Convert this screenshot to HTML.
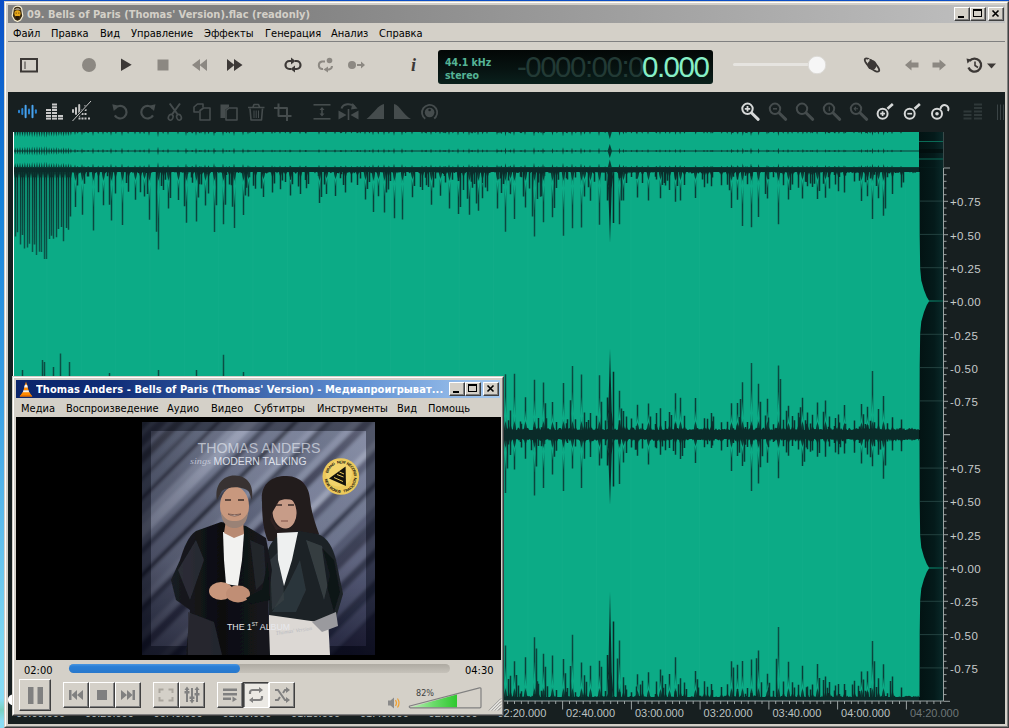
<!DOCTYPE html>
<html lang="ru">
<head>
<meta charset="utf-8">
<title>09. Bells of Paris (Thomas' Version).flac (readonly)</title>
<style>
html,body{margin:0;padding:0;}
body{width:1009px;height:728px;overflow:hidden;position:relative;background:#d4d0c8;
 font-family:"DejaVu Sans Condensed","Liberation Sans",sans-serif;font-size:11px;color:#000;}
.abs,.abs *{position:absolute;}
div,span,svg{position:absolute;box-sizing:border-box;}
.t{white-space:pre;line-height:13px;height:13px;}
#desk{left:0;top:0;width:1009px;height:728px;background:linear-gradient(#0b4ec6 0,#1480d8 26%,#3aa0e4 55%,#7ed6f2 88%,#8adcf4 96%,#7ad0c0 97.5%,#8adcf4 99%);}
#win{left:4px;top:1px;width:1005px;height:727px;background:#d4d0c8;}
#win .b1{left:0;top:0;right:0;bottom:0;border:1px solid;border-color:#d4d0c8 #404040 #404040 #d4d0c8;}
#win .b2{left:1px;top:1px;right:1px;bottom:1px;border:1px solid;border-color:#fff #808080 #808080 #fff;}
#title{left:8px;top:5px;width:997px;height:18px;background:linear-gradient(90deg,#808080 0,#808080 25%,#c0c0c0 100%);}
#title .t{left:19px;top:3px;font-weight:bold;color:#d4d0c8;}
.wbtn{width:16px;height:14px;background:#d4d0c8;border:1px solid;border-color:#fff #404040 #404040 #fff;box-shadow:inset -1px -1px 0 #808080;}
.menu .t{top:0;}
#menu{left:8px;top:23px;width:997px;height:18px;}
#menuline{left:8px;top:41px;width:997px;height:1px;background:#808080;}
#dark{left:8px;top:92px;width:997px;height:632px;background:#171f20;}
.ax{font-family:"Liberation Sans",sans-serif;font-size:11.5px;letter-spacing:.4px;color:#c6caca;}
.rl{font-family:"Liberation Sans",sans-serif;font-size:11px;color:#bcc2c2;}
.rl.dim{color:#6d7677;}
.vb{background:#d4d0c8;border:1px solid;border-color:#fff #404040 #404040 #fff;box-shadow:inset -1px -1px 0 #808080;}
.vb.on{border-color:#404040 #fff #fff #404040;box-shadow:inset 1px 1px 0 #808080;background:#ebe9e4;}
</style>
</head>
<body>
<div id="desk"></div>
<div id="win"><div class="b1"></div><div class="b2"></div></div>
<div id="title"><span class="t">09. Bells of Paris (Thomas' Version).flac (readonly)</span>
<svg style="left:0;top:0" width="20" height="18" viewBox="0 0 20 18">
 <path d="M9.5 1.2 C6.5 1.2 5 3.5 5 6 L4.2 11 L6.5 15 L9.5 16.6 L12.5 15 L14.8 11 L14 6 C14 3.5 12.5 1.2 9.5 1.2Z" fill="#3a2a10" stroke="#f4ecd0" stroke-width="1.2"/>
 <path d="M6.2 5.2 C6.6 2.8 12.4 2.8 12.8 5.2 L11.5 4.6 L7.5 4.6Z" fill="#efe6d6"/>
 <ellipse cx="9.5" cy="8.6" rx="3.1" ry="3.3" fill="#e8a818"/>
 <path d="M7.6 11 L11.4 11 L10.6 14.4 L9.5 15 L8.4 14.4Z" fill="#2a1a08"/>
 <rect x="7.6" y="7.6" width="1.2" height="1" fill="#5a3a08"/><rect x="10.2" y="7.6" width="1.2" height="1" fill="#5a3a08"/>
</svg>
</div>
<div class="wbtn" style="left:954px;top:7px"><svg width="14" height="12" style="left:0;top:0"><rect x="3" y="8" width="6" height="2" fill="#000"/></svg></div>
<div class="wbtn" style="left:970px;top:7px"><svg width="14" height="12" style="left:0;top:0"><rect x="2.5" y="1.5" width="8" height="7" fill="none" stroke="#000"/><rect x="2" y="1" width="9" height="2" fill="#000"/></svg></div>
<div class="wbtn" style="left:988px;top:7px"><svg width="14" height="12" style="left:0;top:0"><path d="M3.5 2.5 L9.5 8.5 M9.5 2.5 L3.5 8.5" stroke="#000" stroke-width="1.6" fill="none"/></svg></div>

<div id="menu" class="menu">
<span class="t" style="left:5px;top:4px">Файл</span>
<span class="t" style="left:43px;top:4px">Правка</span>
<span class="t" style="left:92px;top:4px">Вид</span>
<span class="t" style="left:123px;top:4px">Управление</span>
<span class="t" style="left:196px;top:4px">Эффекты</span>
<span class="t" style="left:257px;top:4px">Генерация</span>
<span class="t" style="left:323px;top:4px">Анализ</span>
<span class="t" style="left:371px;top:4px">Справка</span>
</div>
<div id="menuline"></div>

<!-- main toolbar icons -->
<svg id="tb1" style="left:0;top:42px" width="1009" height="50" viewBox="0 42 1009 50">
 <rect x="21" y="59" width="16" height="12.5" fill="none" stroke="#3c3836" stroke-width="2"/>
 <rect x="24.5" y="61.5" width="1" height="7.5" fill="#3c3836"/>
 <circle cx="89" cy="65" r="7" fill="#8c8882"/>
 <path d="M121 58.5 L131.7 64.7 L121 70.9Z" fill="#3c3836"/>
 <rect x="157.5" y="59.5" width="11" height="11" fill="#8c8882"/>
 <path d="M207 59 L207 71 L199.5 65Z M200 59 L200 71 L192 65Z" fill="#8c8882"/>
 <path d="M227 59 L227 71 L234.5 65Z M234 59 L234 71 L242.5 65Z" fill="#3c3836"/>
 <!-- loop -->
 <g fill="none" stroke="#3c3836" stroke-width="2.2">
  <path d="M292 61 L289.5 61 A4 4 0 0 0 289.5 69 L291 69"/>
  <path d="M294 69 L296.5 69 A4 4 0 0 0 296.5 61 L295 61"/>
 </g>
 <path d="M291 57.5 L295.5 61 L291 64.5Z" fill="#3c3836"/>
 <path d="M295 65.5 L290.5 69 L295 72.5Z" fill="#3c3836"/>
 <!-- loop dot gray -->
 <g fill="none" stroke="#8c8882" stroke-width="2">
  <path d="M325 61.5 L322 61.5 A3.8 3.8 0 0 0 322 69 L323 69"/>
  <path d="M327 69.5 L329 69.5 A3.8 3.8 0 0 0 332 66"/>
 </g>
 <path d="M328 66.5 L323.5 69.5 L328 72.5Z" fill="#8c8882"/>
 <circle cx="329.5" cy="60.5" r="2.8" fill="#8c8882"/>
 <!-- dot arrow -->
 <circle cx="352" cy="65" r="4" fill="#8c8882"/>
 <path d="M357 64 L361 64 L361 61.5 L365 65 L361 68.5 L361 66 L357 66Z" fill="#8c8882"/>
 <!-- slider -->
 <rect x="733" y="63" width="78" height="3" rx="1.5" fill="#e6e4e0"/>
 <circle cx="817" cy="65" r="8.8" fill="#f6f6f6" stroke="#dcdad6" stroke-width="1"/>
 <!-- planet -->
 <g transform="translate(872 65)">
  <circle cx="0" cy="0" r="4.700" fill="#3c3836"/>
  <ellipse cx="0" cy="0" rx="9.300" ry="3.200" transform="rotate(42)" fill="none" stroke="#3c3836" stroke-width="1.800"/>
  <path d="M-5.5 -3.5 A6.5 6.5 0 0 1 3 -6" stroke="#d4d0c8" stroke-width="1" fill="none"/>
 </g>
 <path d="M905 65 L911.5 59.5 L911.5 62.5 L918.5 62.5 L918.5 67.5 L911.5 67.5 L911.5 70.5Z" fill="#8c8882"/>
 <path d="M946 65 L939.5 59.5 L939.5 62.5 L932.5 62.5 L932.5 67.5 L939.5 67.5 L939.5 70.5Z" fill="#8c8882"/>
 <!-- history -->
 <g fill="none" stroke="#3c3836" stroke-width="2.4">
  <path d="M969.5 61 A6.5 6.5 0 1 1 968.5 67.5"/>
  <path d="M975 61.5 L975 65.5 L978 67.5" stroke-width="1.6"/>
 </g>
 <path d="M966.5 58.5 L971.5 59.5 L967.5 63.5Z" fill="#3c3836"/>
 <path d="M987 63.5 L996 63.5 L991.5 68.5Z" fill="#3c3836"/>
</svg>
<span class="t" style="left:411px;top:55px;font-family:'Liberation Serif','DejaVu Serif',serif;font-style:italic;font-weight:bold;font-size:18px;line-height:20px;height:20px;color:#3c3836">i</span>

<!-- time display -->
<div id="disp" style="left:438px;top:50px;width:275px;height:34px;border-radius:3px;background:linear-gradient(#030706,#071412 60%,#0a201c);"></div>
<span class="t" style="left:445px;top:55.5px;font-weight:bold;font-size:10.5px;line-height:12px;height:12px;color:#55b496">44.1 kHz</span>
<span class="t" style="left:445px;top:68.5px;font-weight:bold;font-size:10.5px;line-height:12px;height:12px;color:#55b496">stereo</span>
<span class="t" id="dimd" style="right:366px;top:50px;font-family:'Liberation Sans',sans-serif;font-size:29.5px;line-height:34px;height:34px;color:#223a35;letter-spacing:-1.5px">-0000:00:0</span>
<span class="t" id="brd" style="left:642px;top:50px;font-family:'Liberation Sans',sans-serif;font-size:29.5px;line-height:34px;height:34px;color:#86efc6;letter-spacing:-1.5px">0.000</span>

<div id="dark"></div>
<!-- secondary toolbar -->
<svg id="tb2" style="left:0;top:92px" width="1009" height="40" viewBox="0 92 1009 40">
 <!-- waveform icon blue -->
 <g fill="#2b86d6">
  <rect x="18" y="109.800" width="2" height="3.400" rx="1"/>
  <rect x="21.300" y="108" width="2" height="7" rx="1"/>
  <rect x="24.600" y="104.700" width="2" height="13.600" rx="1" fill="#4aa4ee"/>
  <rect x="28" y="108.600" width="2" height="5.800" rx="1"/>
  <rect x="31.500" y="104.700" width="2" height="13.600" rx="1" fill="#4aa4ee"/>
  <rect x="34.900" y="109.200" width="2" height="4.600" rx="1"/>
 </g>
 <!-- bars icon -->
 <g fill="#c9c9c9">
  <rect x="46" y="109" width="5" height="2"/><rect x="46" y="112" width="5" height="2"/><rect x="46" y="115" width="5" height="2"/><rect x="46" y="117.6" width="5" height="2"/>
  <rect x="52" y="103.5" width="5" height="2"/><rect x="52" y="106.3" width="5" height="2"/><rect x="52" y="109" width="5" height="2"/><rect x="52" y="112" width="5" height="2"/><rect x="52" y="115" width="5" height="2"/><rect x="52" y="117.6" width="5" height="2"/>
  <rect x="58" y="115" width="5" height="2"/><rect x="58" y="117.6" width="5" height="2"/>
 </g>
 <!-- spectral off icon -->
 <g fill="#c4c4c4">
  <rect x="72" y="109" width="2" height="4" rx="1"/><rect x="75" y="107" width="2" height="8" rx="1"/><rect x="78.2" y="104" width="2" height="13" rx="1"/>
  <rect x="81.5" y="109" width="2" height="2"/><rect x="84.5" y="109" width="2" height="2"/>
  <rect x="81.5" y="113" width="2" height="2"/><rect x="84.5" y="113" width="2" height="2"/>
  <rect x="78.5" y="117.5" width="2" height="2"/><rect x="81.5" y="117.5" width="2" height="2"/><rect x="84.5" y="117.5" width="2" height="2"/><rect x="88" y="117.5" width="2" height="2"/>
  <rect x="84.5" y="105" width="2" height="2"/>
 </g>
 <path d="M72.5 121.5 L91 101.5" stroke="#171f20" stroke-width="2.6"/>
 <path d="M72.5 121 L91 101" stroke="#c4c4c4" stroke-width="1"/>
 <!-- dim edit icons -->
 <g fill="none" stroke="#454c4d" stroke-width="2" stroke-linejoin="round">
  <path d="M114.8 109 A6.3 6.3 0 1 1 114.8 115.4" stroke-width="2.2"/>
  <path d="M153 109 A6.3 6.3 0 1 0 153 115.4" stroke-width="2.2"/>
  <!-- scissors -->
  <ellipse cx="170.700" cy="117.300" rx="2.300" ry="2.900" stroke-width="1.600" transform="rotate(20 170.700 117.300)"/><ellipse cx="179" cy="117.300" rx="2.300" ry="2.900" stroke-width="1.600" transform="rotate(-20 179 117.300)"/>
  <path d="M172 114.500 L180 103.500 M177.700 114.500 L169.700 103.500" stroke-width="2"/>
  <!-- copy -->
  <path d="M199 112 L194 112 L194 107 L197.5 104 L203 104 L203 107.5" stroke-width="1.6"/>
  <path d="M200 120 L200 110.5 L203.5 108 L210 108 L210 120Z" stroke-width="1.6"/>
  <!-- paste -->
  <path d="M226 120 L226 110.5 L229 108 L237 108 L237 120Z" stroke-width="1.6"/>
  <!-- trash -->
  <path d="M250 108.5 L251 120 L261.5 120 L262.5 108.5" stroke-width="1.6"/>
  <path d="M248 107.5 L264.5 107.5 M253 107 L254 104.5 L258.5 104.5 L259.5 107" stroke-width="1.6"/>
  <path d="M254 110.5 L254 118 M256.2 110.5 L256.2 118 M258.5 110.5 L258.5 118" stroke-width="1"/>
  <!-- crop -->
  <path d="M278.5 103.5 L278.5 116 L291.5 116 M274 108 L287 108 L287 121" stroke-width="2"/>
 </g>
 <path d="M112.3 104.3 L118.8 105.8 L113.8 111Z M155.5 104.3 L149 105.8 L154 111Z" fill="#454c4d"/>
 <path d="M220.500 104.500 L229 104.500 L229 107 L225 110 L225 118 L220.500 118Z" fill="#454c4d"/>
 <!-- group 2 -->
 <g fill="#454c4d">
  <rect x="313.500" y="104" width="17" height="1.600"/><rect x="313.500" y="118" width="17" height="1.600"/>
  <path d="M322 107 L324.500 110 L322.800 110 L322.800 113.500 L324.500 113.500 L322 116.500 L319.500 113.500 L321.200 113.500 L321.200 110 L319.500 110Z"/>
  <path d="M338.500 110.500 L346.500 115 L338.500 119.500Z M358.500 110.500 L350.500 115 L358.500 119.500Z"/>
  <rect x="347.700" y="109" width="1.600" height="11"/>
  <path d="M366.500 119 L384 119 L384 104 C378 105 374 113 366.500 119Z"/>
  <path d="M411 119 L394 119 L394 104 C400 105 403 115 411 119Z"/>
 </g>
 <path d="M341.500 108.500 C343 103.500 351 103 354.500 106.500" stroke="#454c4d" stroke-width="2" fill="none"/>
 <path d="M352.500 103 L357.500 108.500 L351 109.500Z" fill="#454c4d"/>
 <circle cx="429.600" cy="112.500" r="7.600" fill="none" stroke="#454c4d" stroke-width="1.800" stroke-dasharray="38 10" transform="rotate(125 429.600 112.500)"/>
 <circle cx="429.600" cy="112.500" r="4.800" fill="#454c4d"/>
 <circle cx="429.600" cy="110" r="1.300" fill="#171f20"/>
 <!-- zoom icons -->
 <g fill="none" stroke-linecap="round">
  <g stroke="#d6d8d8">
   <circle cx="747.500" cy="108.800" r="5.200" stroke-width="2"/><path d="M751.700 113 L758.200 119.300" stroke-width="3"/>
   <path d="M744.800 108.800 L750.200 108.800 M747.500 106.100 L747.500 111.500" stroke-width="1.800" stroke-linecap="butt"/>
  </g>
  <g stroke="#454c4d">
   <circle cx="775" cy="108.800" r="5.200" stroke-width="2"/><path d="M779.200 113 L785.700 119.300" stroke-width="3"/>
   <path d="M773 108.800 L777 108.800" stroke-width="1.500" stroke-linecap="butt"/>
   <circle cx="802" cy="108.800" r="5.200" stroke-width="2"/><path d="M806.200 113 L812.700 119.300" stroke-width="3"/>
   <circle cx="829" cy="108.800" r="5.200" stroke-width="2"/><path d="M833.200 113 L839.700 119.300" stroke-width="3"/>
   <path d="M829.300 106.500 L829.300 111.200" stroke-width="1.200" stroke-linecap="butt"/>
   <circle cx="856" cy="108.800" r="5.200" stroke-width="2"/><path d="M860.200 113 L866.700 119.300" stroke-width="3"/>
   <path d="M858 108.800 L854.500 108.800 M856 107 L854.200 108.800 L856 110.600" stroke-width="1.100" stroke-linecap="butt"/>
  </g>
  <g stroke="#d6d8d8">
   <circle cx="882.600" cy="113.700" r="5" stroke-width="2"/><path d="M887.500 108.800 L892.800 104" stroke-width="2.600" stroke-linecap="butt"/>
   <path d="M880.200 113.700 L885 113.700 M882.600 111.300 L882.600 116.100" stroke-width="1.700" stroke-linecap="butt"/>
   <circle cx="909.700" cy="113.700" r="5" stroke-width="2"/><path d="M914.600 108.800 L919.900 104" stroke-width="2.600" stroke-linecap="butt"/>
   <path d="M907.300 113.700 L912.100 113.700" stroke-width="1.700" stroke-linecap="butt"/>
   <circle cx="937" cy="113.700" r="5" stroke-width="2"/>
   <path d="M940.500 109 A4 4 0 1 1 948 111" stroke-width="2" stroke-linecap="butt"/>
  </g>
 </g>
 <circle cx="937" cy="113.700" r="1.800" fill="#d6d8d8"/>
 <!-- levels dim -->
 <g fill="#2f3839">
  <rect x="963.500" y="110.500" width="8" height="2"/><rect x="963.500" y="114" width="8" height="2"/><rect x="963.500" y="117.500" width="8" height="2"/>
  <rect x="974" y="103.500" width="8" height="2"/><rect x="974" y="107" width="8" height="2"/><rect x="974" y="110.500" width="8" height="2"/><rect x="974" y="114" width="8" height="2"/><rect x="974" y="117.500" width="8" height="2"/>
 </g>
 <g fill="#3a4345"><rect x="997" y="104.500" width="1" height="15.500"/><rect x="1000" y="104.500" width="1" height="15.500"/><rect x="1003" y="104.500" width="1" height="15.500"/></g>
</svg>
<svg id="wave" style="left:0;top:128px" width="1009" height="600" viewBox="0 128 1009 600">
<defs><linearGradient id="tailg" x1="0" x2="1" y1="0" y2="0"><stop offset="0" stop-color="#031313"/><stop offset="0.6" stop-color="#041a1a"/><stop offset="1" stop-color="#0a2a2a"/></linearGradient></defs>
<rect x="919" y="132" width="25" height="36" fill="url(#tailg)"/>
<rect x="14" y="132" width="905" height="35.5" fill="#0cab86"/>
<rect x="14" y="167.5" width="930" height="533.5" fill="#0a2b29"/>
<rect x="919" y="167.5" width="25" height="533.5" fill="url(#tailg)"/>
<path d="M14 172L919.5 172.0L919.7 236.5L920.2 268.8L921.3 280.4L924 290.0L926.8 297.1L928.8 300.2L944 300.5L944 301.5L928.8 301.8L926.8 304.9L924 312.0L921.3 321.6L920.2 333.2L919.7 365.5L919.5 430.0L14 430Z" fill="#0cab86"/>
<path d="M14 439L919.5 439.0L919.7 503.5L920.2 535.8L921.3 547.4L924 557.0L926.8 564.1L928.8 567.2L944 567.5L944 568.5L928.8 568.8L926.8 571.9L924 579.0L921.3 588.6L920.2 600.2L919.7 632.5L919.5 697.0L14 697Z" fill="#0cab86"/>
<rect x="929" y="300" width="15" height="2" fill="#06201f" opacity="0.45"/><rect x="929" y="567" width="15" height="2" fill="#06201f" opacity="0.45"/>
<path d="M47.0 168V701M81.3 168V701M115.7 168V701M150.0 168V701M184.3 168V701M218.7 168V701M253.0 168V701M287.4 168V701M321.8 168V701M356.1 168V701M390.5 168V701M424.8 168V701M459.2 168V701M493.5 168V701M527.9 168V701M562.2 168V701M596.6 168V701M630.9 168V701M665.3 168V701M699.6 168V701M734.0 168V701M768.3 168V701M802.7 168V701M837.0 168V701M871.4 168V701M905.7 168V701" stroke="#3fc0a0" stroke-width="1" opacity="0.09"/>
<path d="M920 201.1H944M920 234.4H944M920 267.7H944M920 334.3H944M920 367.6H944M920 400.9H944M920 468.1H944M920 501.4H944M920 534.7H944M920 601.3H944M920 634.6H944M920 667.9H944" stroke="#2a4a48" stroke-width="1" opacity="0.8"/>
<path d="M14 167.5L14 172.1L15 171.5L16 173.6L17 172.9L18 173.6L19 171.5L20 171.7L21 171.5L22 172.8L23 171.7L24 171.5L25 171.9L26 173.3L27 173.0L28 171.6L29 171.5L30 173.4L31 172.2L32 172.6L33 171.5L34 171.5L35 172.5L36 171.9L37 171.5L38 173.4L39 172.4L40 172.9L41 171.5L42 173.1L43 171.5L44 173.1L45 172.0L46 171.8L47 172.2L48 173.4L49 171.7L50 171.5L51 172.1L52 171.6L53 171.5L54 171.6L55 171.5L56 171.6L57 171.7L58 171.7L59 172.8L60 171.7L61 172.1L62 171.6L63 171.8L64 171.5L65 171.6L66 171.5L67 172.7L68 172.2L69 171.6L70 172.0L71 173.4L72 171.5L73 173.0L74 171.9L75 172.0L76 173.0L77 171.8L78 172.1L79 172.5L80 173.6L81 171.8L82 173.0L83 172.6L84 172.4L85 171.9L86 171.8L87 171.5L88 171.5L89 171.5L90 172.7L91 171.6L92 171.6L93 171.5L94 173.1L95 173.2L96 172.5L97 171.7L98 171.6L99 171.7L100 172.0L101 171.6L102 171.9L103 171.7L104 173.5L105 173.6L106 172.2L107 171.6L108 173.6L109 171.7L110 171.8L111 171.5L112 171.8L113 172.0L114 172.1L115 171.6L116 172.1L117 171.5L118 171.7L119 171.5L120 171.9L121 171.5L122 171.5L123 171.7L124 171.6L125 172.3L126 172.1L127 172.7L128 172.5L129 172.6L130 173.2L131 171.8L132 171.7L133 173.6L134 171.5L135 172.7L136 172.4L137 171.5L138 173.0L139 173.3L140 172.4L141 172.7L142 173.0L143 171.5L144 172.1L145 172.1L146 173.0L147 172.9L148 173.0L149 172.3L150 173.3L151 172.5L152 172.6L153 171.6L154 171.5L155 171.5L156 171.8L157 171.5L158 173.0L159 172.2L160 172.4L161 172.4L162 172.5L163 172.0L164 171.5L165 172.9L166 172.7L167 172.1L168 172.1L169 172.5L170 171.5L171 172.7L172 171.6L173 171.5L174 171.7L175 172.7L176 171.6L177 172.7L178 173.6L179 172.0L180 171.8L181 172.0L182 172.5L183 172.8L184 172.3L185 172.4L186 171.5L187 171.5L188 171.6L189 172.7L190 171.7L191 172.2L192 171.5L193 171.5L194 171.7L195 172.5L196 172.6L197 172.5L198 171.7L199 172.1L200 172.0L201 172.0L202 171.5L203 173.3L204 171.6L205 173.6L206 173.4L207 171.5L208 172.0L209 173.0L210 173.6L211 171.9L212 171.7L213 171.6L214 173.5L215 171.6L216 172.2L217 171.5L218 172.1L219 173.5L220 171.5L221 173.0L222 172.1L223 173.2L224 172.6L225 171.6L226 173.3L227 172.0L228 171.5L229 171.5L230 172.0L231 171.9L232 171.7L233 171.5L234 171.8L235 171.7L236 173.1L237 171.5L238 172.7L239 173.0L240 171.5L241 173.4L242 172.6L243 173.3L244 171.7L245 171.8L246 171.8L247 173.7L248 172.3L249 171.8L250 171.9L251 171.7L252 171.5L253 171.5L254 173.0L255 171.7L256 173.4L257 171.6L258 171.7L259 172.1L260 171.6L261 171.8L262 173.5L263 173.2L264 173.0L265 172.4L266 173.3L267 173.4L268 172.2L269 172.6L270 171.5L271 172.7L272 171.9L273 172.7L274 172.4L275 171.7L276 171.5L277 173.4L278 171.5L279 172.0L280 171.8L281 171.7L282 172.7L283 173.6L284 171.6L285 172.4L286 171.7L287 172.2L288 171.8L289 171.6L290 171.6L291 171.6L292 173.3L293 172.0L294 171.6L295 173.3L296 173.7L297 171.9L298 171.5L299 171.6L300 171.5L301 171.8L302 171.5L303 171.6L304 171.6L305 172.2L306 173.2L307 172.7L308 171.9L309 171.9L310 172.1L311 171.8L312 171.8L313 171.5L314 171.7L315 173.6L316 171.5L317 172.1L318 172.4L319 173.1L320 171.6L321 171.7L322 171.6L323 171.9L324 171.9L325 173.5L326 173.1L327 173.2L328 171.5L329 171.5L330 172.6L331 173.3L332 172.0L333 172.3L334 171.5L335 171.8L336 173.4L337 173.0L338 173.1L339 173.6L340 171.6L341 171.5L342 171.6L343 172.1L344 172.5L345 173.5L346 172.6L347 172.4L348 172.8L349 172.0L350 172.2L351 171.5L352 172.8L353 171.6L354 173.4L355 172.4L356 171.7L357 171.5L358 171.6L359 172.4L360 172.6L361 171.5L362 171.5L363 172.1L364 172.2L365 171.8L366 171.6L367 172.3L368 171.5L369 171.7L370 172.0L371 173.5L372 172.4L373 173.2L374 172.0L375 171.6L376 171.6L377 173.5L378 172.6L379 171.7L380 171.5L381 172.0L382 172.5L383 171.9L384 171.6L385 172.5L386 173.4L387 171.6L388 171.5L389 171.8L390 171.9L391 172.5L392 171.6L393 172.9L394 172.7L395 172.1L396 171.6L397 173.6L398 171.7L399 173.0L400 171.6L401 171.6L402 172.8L403 171.7L404 173.5L405 172.0L406 171.6L407 171.6L408 171.9L409 172.5L410 173.5L411 171.5L412 171.8L413 171.6L414 173.6L415 171.5L416 171.5L417 171.5L418 171.8L419 173.3L420 173.2L421 172.7L422 173.7L423 173.4L424 171.7L425 171.6L426 173.4L427 172.7L428 171.5L429 172.5L430 171.8L431 171.8L432 171.7L433 171.6L434 171.5L435 171.7L436 171.8L437 173.5L438 171.5L439 173.5L440 171.6L441 171.8L442 173.0L443 173.0L444 171.9L445 171.5L446 172.0L447 171.8L448 173.4L449 171.6L450 171.8L451 173.3L452 171.5L453 171.9L454 172.9L455 172.8L456 171.5L457 171.5L458 171.5L459 173.4L460 171.6L461 172.7L462 173.3L463 171.8L464 171.7L465 173.5L466 172.3L467 171.7L468 172.6L469 171.7L470 171.7L471 171.5L472 172.8L473 173.3L474 172.4L475 173.5L476 171.5L477 171.6L478 172.0L479 173.5L480 173.5L481 171.8L482 171.6L483 171.9L484 172.0L485 173.4L486 171.6L487 172.9L488 172.7L489 173.0L490 172.8L491 172.3L492 171.7L493 171.7L494 171.8L495 172.8L496 171.5L497 171.6L498 172.7L499 171.6L500 171.5L501 171.5L502 172.2L503 171.7L504 173.6L505 173.2L506 173.6L507 171.7L508 171.5L509 171.5L510 172.0L511 172.6L512 171.9L513 171.6L514 171.9L515 172.3L516 172.5L517 172.7L518 173.1L519 172.5L520 171.5L521 173.1L522 171.7L523 172.2L524 171.8L525 172.7L526 171.6L527 171.6L528 171.6L529 171.6L530 173.2L531 172.2L532 171.7L533 171.8L534 173.7L535 172.1L536 171.6L537 172.9L538 172.4L539 173.7L540 171.5L541 172.0L542 173.0L543 173.1L544 173.3L545 171.5L546 171.7L547 171.5L548 171.6L549 173.6L550 172.2L551 173.4L552 171.8L553 173.2L554 171.9L555 171.6L556 172.8L557 173.5L558 171.5L559 172.3L560 172.3L561 171.6L562 171.8L563 171.5L564 171.6L565 171.6L566 172.3L567 172.4L568 171.6L569 171.5L570 171.7L571 172.5L572 171.6L573 171.7L574 171.6L575 172.9L576 172.2L577 171.5L578 171.5L579 171.8L580 172.2L581 172.4L582 171.5L583 171.6L584 172.6L585 171.9L586 171.7L587 171.7L588 173.5L589 171.7L590 172.2L591 171.8L592 171.9L593 173.1L594 173.7L595 171.8L596 171.6L597 172.7L598 171.6L599 171.5L600 173.3L601 171.9L602 173.0L603 171.9L604 173.2L605 172.0L606 171.6L607 171.5L608 172.2L609 172.4L610 173.3L611 171.5L612 172.4L613 171.8L614 172.1L615 171.5L616 171.7L617 172.1L618 173.4L619 171.5L620 172.0L621 172.9L622 173.6L623 171.6L624 171.5L625 173.5L626 173.6L627 172.0L628 171.5L629 173.4L630 171.8L631 173.3L632 172.3L633 173.0L634 171.6L635 172.9L636 171.6L637 171.9L638 173.1L639 173.0L640 171.6L641 171.6L642 171.9L643 172.1L644 171.8L645 171.5L646 171.6L647 172.7L648 173.3L649 171.5L650 172.2L651 172.8L652 171.5L653 173.0L654 171.5L655 172.3L656 172.2L657 172.4L658 171.7L659 171.9L660 172.2L661 171.9L662 172.5L663 171.9L664 171.9L665 171.5L666 172.3L667 172.0L668 171.6L669 172.8L670 172.8L671 172.0L672 171.6L673 172.0L674 171.5L675 171.5L676 171.9L677 171.5L678 171.9L679 172.1L680 171.5L681 172.4L682 171.5L683 172.7L684 172.8L685 172.1L686 171.5L687 172.1L688 171.8L689 173.5L690 171.5L691 173.1L692 173.7L693 172.7L694 173.0L695 171.6L696 173.6L697 172.0L698 173.5L699 173.3L700 171.6L701 172.9L702 173.4L703 171.5L704 171.8L705 172.8L706 171.6L707 173.3L708 171.7L709 173.0L710 171.5L711 172.1L712 173.4L713 171.6L714 171.7L715 172.1L716 171.7L717 171.5L718 171.6L719 171.6L720 173.4L721 172.5L722 173.3L723 171.6L724 172.9L725 171.5L726 172.1L727 172.4L728 171.8L729 173.2L730 172.2L731 172.2L732 173.2L733 171.5L734 173.7L735 172.4L736 171.8L737 172.9L738 171.7L739 173.7L740 172.2L741 171.8L742 172.8L743 171.9L744 171.6L745 172.7L746 171.5L747 173.0L748 171.6L749 172.4L750 173.6L751 172.3L752 172.5L753 171.7L754 171.5L755 171.5L756 171.5L757 172.3L758 171.9L759 172.1L760 173.3L761 171.5L762 171.6L763 172.4L764 171.5L765 171.5L766 171.8L767 171.5L768 171.8L769 171.6L770 172.2L771 172.3L772 171.6L773 172.4L774 172.0L775 171.5L776 173.4L777 171.6L778 171.5L779 171.5L780 172.4L781 173.2L782 172.8L783 171.9L784 171.7L785 171.5L786 172.4L787 172.2L788 171.8L789 172.4L790 171.9L791 173.4L792 172.7L793 171.6L794 173.3L795 171.5L796 172.1L797 171.9L798 171.6L799 171.5L800 172.8L801 171.5L802 172.2L803 173.4L804 171.5L805 171.6L806 172.3L807 172.1L808 172.4L809 173.0L810 171.6L811 171.7L812 171.7L813 171.5L814 173.2L815 172.8L816 172.6L817 171.5L818 173.1L819 172.7L820 172.0L821 172.7L822 172.0L823 171.6L824 171.5L825 171.6L826 171.5L827 171.7L828 172.7L829 172.6L830 173.1L831 172.6L832 171.7L833 172.2L834 171.9L835 172.9L836 172.1L837 171.7L838 172.4L839 173.5L840 171.6L841 173.2L842 171.5L843 171.6L844 171.6L845 172.7L846 173.5L847 172.7L848 171.7L849 173.2L850 171.7L851 171.6L852 173.3L853 172.4L854 172.6L855 172.5L856 173.6L857 172.0L858 173.1L859 172.6L860 173.1L861 171.9L862 172.7L863 172.2L864 171.7L865 171.6L866 172.4L867 171.5L868 173.3L869 171.5L870 171.5L871 171.5L872 173.4L873 171.8L874 171.5L875 171.5L876 171.5L877 172.6L878 172.4L879 172.6L880 172.7L881 171.5L882 172.3L883 171.8L884 173.0L885 173.0L886 173.2L887 171.5L888 173.2L889 173.3L890 173.5L891 171.5L892 171.6L893 171.5L894 171.5L895 173.1L896 173.0L897 172.4L898 173.0L899 172.4L900 171.7L901 171.5L902 171.5L903 172.8L904 171.6L905 171.7L906 171.9L907 171.5L908 171.6L909 171.7L910 172.6L911 171.8L912 171.7L913 173.5L914 172.1L915 173.1L916 172.3L917 171.5L918 171.9L919 171.9L919 167.5ZM14 434.5L14 428.5L15 429.7L16 428.8L17 429.3L18 429.9L19 428.1L20 430.0L21 428.3L22 429.9L23 430.0L24 429.9L25 428.5L26 427.6L27 430.0L28 429.4L29 429.4L30 428.4L31 429.9L32 429.4L33 429.7L34 428.3L35 429.8L36 427.8L37 429.8L38 429.9L39 428.8L40 429.4L41 430.0L42 429.0L43 430.0L44 428.4L45 428.8L46 428.5L47 429.0L48 429.7L49 429.6L50 429.6L51 428.0L52 430.0L53 428.0L54 430.0L55 429.9L56 429.8L57 428.0L58 429.4L59 429.6L60 428.0L61 429.9L62 429.5L63 429.3L64 428.6L65 428.6L66 429.0L67 429.7L68 429.7L69 429.9L70 428.2L71 428.9L72 428.6L73 429.9L74 429.5L75 428.5L76 429.2L77 430.0L78 429.5L79 428.0L80 429.9L81 429.9L82 429.8L83 428.8L84 428.2L85 429.9L86 429.9L87 429.8L88 429.7L89 429.3L90 429.9L91 429.7L92 429.9L93 427.6L94 428.7L95 430.0L96 427.7L97 430.0L98 429.6L99 427.6L100 428.4L101 428.7L102 429.5L103 429.9L104 429.0L105 430.0L106 429.9L107 429.6L108 430.0L109 429.6L110 428.4L111 428.8L112 429.4L113 429.0L114 429.5L115 429.9L116 429.1L117 429.6L118 428.6L119 427.9L120 429.5L121 429.2L122 428.6L123 429.6L124 429.9L125 428.7L126 428.1L127 428.5L128 428.8L129 428.2L130 428.8L131 429.0L132 429.5L133 429.8L134 429.0L135 430.0L136 429.6L137 428.5L138 428.7L139 429.0L140 429.8L141 429.6L142 429.5L143 429.0L144 429.6L145 428.9L146 427.8L147 429.9L148 428.9L149 428.5L150 429.6L151 429.4L152 427.6L153 430.0L154 429.3L155 429.9L156 428.5L157 427.8L158 429.3L159 430.0L160 429.2L161 429.3L162 428.7L163 429.3L164 429.0L165 428.3L166 429.3L167 429.6L168 427.8L169 429.9L170 428.8L171 429.6L172 428.5L173 430.0L174 427.6L175 429.7L176 430.0L177 429.8L178 429.6L179 430.0L180 429.6L181 429.6L182 428.8L183 429.7L184 429.8L185 429.9L186 428.6L187 427.8L188 429.3L189 429.9L190 428.4L191 429.6L192 429.9L193 430.0L194 428.5L195 428.4L196 429.0L197 429.4L198 429.2L199 429.9L200 427.7L201 429.7L202 429.0L203 428.3L204 428.3L205 429.5L206 429.8L207 429.2L208 430.0L209 428.3L210 429.7L211 428.2L212 429.8L213 429.6L214 429.8L215 429.5L216 429.9L217 430.0L218 428.7L219 429.8L220 429.8L221 429.8L222 429.4L223 429.5L224 429.0L225 428.9L226 429.7L227 427.8L228 428.2L229 430.0L230 428.3L231 427.9L232 428.5L233 430.0L234 428.3L235 429.0L236 430.0L237 430.0L238 427.7L239 428.9L240 429.8L241 430.0L242 429.9L243 429.9L244 428.5L245 429.7L246 429.9L247 428.0L248 428.4L249 429.9L250 428.0L251 429.1L252 428.5L253 428.9L254 428.0L255 428.4L256 428.2L257 429.9L258 428.8L259 429.3L260 428.6L261 429.5L262 428.1L263 429.2L264 429.8L265 429.9L266 430.0L267 429.4L268 430.0L269 429.5L270 429.9L271 429.4L272 429.4L273 429.3L274 428.1L275 430.0L276 428.2L277 429.5L278 429.2L279 428.9L280 428.2L281 429.6L282 429.6L283 427.7L284 430.0L285 429.0L286 429.0L287 430.0L288 429.1L289 428.8L290 427.8L291 429.7L292 427.6L293 429.3L294 429.4L295 428.0L296 430.0L297 428.7L298 429.0L299 429.7L300 428.1L301 429.7L302 429.4L303 429.3L304 428.5L305 429.9L306 429.5L307 429.6L308 429.2L309 428.3L310 429.8L311 428.3L312 429.6L313 429.4L314 429.8L315 429.4L316 427.6L317 428.9L318 428.4L319 429.7L320 429.7L321 429.8L322 429.1L323 429.0L324 428.5L325 430.0L326 428.7L327 428.0L328 429.3L329 430.0L330 429.8L331 430.0L332 429.9L333 427.9L334 429.1L335 428.9L336 428.4L337 427.9L338 429.1L339 429.0L340 429.0L341 428.8L342 429.1L343 428.8L344 429.9L345 428.9L346 429.5L347 428.5L348 430.0L349 429.9L350 430.0L351 428.5L352 427.9L353 428.9L354 429.7L355 428.3L356 428.5L357 429.2L358 429.8L359 429.8L360 429.6L361 429.7L362 429.5L363 429.0L364 427.8L365 430.0L366 429.2L367 430.0L368 430.0L369 428.4L370 429.2L371 427.9L372 429.5L373 430.0L374 429.6L375 429.1L376 427.8L377 427.6L378 429.4L379 429.6L380 430.0L381 429.0L382 429.9L383 429.9L384 430.0L385 430.0L386 428.8L387 430.0L388 427.7L389 430.0L390 428.1L391 430.0L392 430.0L393 428.7L394 429.9L395 428.7L396 429.9L397 430.0L398 428.5L399 428.7L400 428.2L401 428.7L402 430.0L403 429.0L404 428.7L405 429.5L406 427.8L407 429.8L408 427.7L409 428.7L410 430.0L411 430.0L412 428.9L413 428.3L414 430.0L415 429.8L416 428.7L417 429.9L418 428.1L419 429.4L420 430.0L421 429.7L422 429.2L423 429.5L424 428.9L425 429.9L426 428.4L427 429.7L428 429.0L429 429.0L430 429.6L431 429.6L432 428.5L433 427.8L434 428.5L435 429.2L436 429.8L437 430.0L438 427.6L439 428.8L440 428.3L441 429.7L442 429.1L443 427.6L444 428.3L445 429.1L446 429.8L447 429.5L448 428.0L449 429.6L450 428.8L451 429.1L452 428.0L453 428.4L454 429.8L455 430.0L456 429.8L457 429.6L458 429.1L459 428.3L460 428.0L461 430.0L462 428.3L463 428.4L464 428.1L465 429.2L466 429.8L467 428.2L468 428.4L469 428.8L470 427.9L471 429.7L472 430.0L473 429.2L474 428.4L475 429.9L476 428.6L477 427.8L478 429.9L479 429.1L480 428.9L481 429.5L482 429.9L483 429.8L484 428.6L485 428.4L486 429.5L487 430.0L488 428.4L489 428.5L490 429.9L491 429.2L492 428.0L493 428.0L494 429.3L495 429.4L496 429.1L497 429.9L498 429.9L499 429.9L500 428.8L501 429.7L502 429.2L503 429.6L504 429.3L505 429.9L506 430.0L507 427.5L508 429.7L509 430.0L510 429.0L511 428.5L512 429.9L513 429.1L514 429.7L515 429.3L516 430.0L517 430.0L518 427.5L519 428.1L520 429.4L521 429.2L522 429.8L523 428.5L524 429.5L525 427.8L526 428.5L527 428.3L528 427.7L529 429.8L530 430.0L531 429.9L532 429.9L533 430.0L534 430.0L535 429.2L536 428.1L537 429.5L538 427.8L539 427.9L540 430.0L541 429.1L542 429.6L543 430.0L544 427.7L545 429.8L546 429.2L547 429.0L548 427.7L549 428.9L550 429.6L551 429.5L552 429.9L553 427.7L554 427.5L555 429.9L556 430.0L557 429.8L558 429.7L559 428.0L560 428.0L561 428.2L562 430.0L563 428.5L564 428.7L565 429.0L566 427.6L567 430.0L568 429.9L569 428.6L570 427.8L571 428.9L572 429.8L573 429.1L574 428.6L575 430.0L576 429.7L577 429.8L578 430.0L579 429.4L580 429.9L581 429.9L582 429.9L583 428.9L584 430.0L585 428.7L586 429.9L587 430.0L588 427.8L589 429.9L590 427.8L591 428.1L592 428.0L593 430.0L594 429.5L595 430.0L596 427.8L597 428.2L598 429.0L599 429.5L600 429.7L601 428.3L602 429.4L603 429.0L604 429.9L605 429.9L606 430.0L607 428.7L608 429.2L609 429.9L610 428.1L611 429.8L612 429.6L613 429.9L614 429.8L615 428.2L616 429.7L617 429.9L618 429.4L619 429.7L620 428.0L621 430.0L622 427.6L623 430.0L624 428.0L625 428.9L626 429.9L627 429.4L628 429.8L629 429.8L630 429.9L631 429.7L632 427.5L633 427.5L634 427.9L635 430.0L636 429.8L637 428.0L638 430.0L639 428.7L640 429.8L641 427.6L642 430.0L643 428.4L644 429.7L645 430.0L646 430.0L647 428.3L648 429.3L649 429.9L650 429.5L651 427.9L652 429.9L653 429.2L654 430.0L655 429.9L656 428.5L657 428.7L658 429.9L659 430.0L660 430.0L661 429.1L662 429.4L663 429.8L664 429.9L665 429.1L666 428.7L667 428.4L668 429.2L669 429.9L670 430.0L671 428.7L672 429.6L673 428.7L674 430.0L675 428.4L676 429.7L677 428.2L678 428.1L679 429.4L680 430.0L681 427.9L682 429.4L683 428.1L684 429.8L685 429.9L686 428.3L687 429.7L688 429.9L689 429.7L690 429.1L691 430.0L692 429.3L693 429.5L694 429.3L695 430.0L696 428.7L697 428.3L698 428.1L699 429.7L700 428.7L701 429.6L702 428.6L703 430.0L704 428.1L705 427.7L706 429.4L707 429.3L708 429.3L709 429.3L710 430.0L711 427.7L712 429.9L713 429.9L714 430.0L715 429.8L716 428.3L717 430.0L718 430.0L719 428.8L720 429.9L721 430.0L722 429.1L723 429.2L724 429.3L725 428.8L726 430.0L727 428.1L728 428.7L729 430.0L730 430.0L731 429.4L732 429.4L733 429.8L734 430.0L735 429.6L736 430.0L737 429.1L738 428.1L739 429.9L740 429.2L741 428.6L742 429.9L743 428.3L744 427.8L745 429.6L746 429.6L747 428.2L748 429.3L749 429.6L750 427.8L751 428.5L752 429.7L753 429.9L754 429.7L755 429.5L756 427.6L757 428.4L758 427.9L759 428.3L760 428.2L761 430.0L762 429.3L763 427.7L764 427.8L765 429.8L766 429.6L767 429.0L768 429.7L769 429.3L770 430.0L771 429.5L772 429.4L773 430.0L774 430.0L775 427.6L776 428.5L777 427.8L778 429.0L779 428.4L780 428.0L781 428.0L782 430.0L783 429.0L784 429.8L785 428.8L786 429.8L787 429.3L788 427.9L789 429.0L790 429.8L791 429.3L792 429.5L793 427.7L794 429.8L795 429.8L796 429.0L797 430.0L798 429.1L799 427.7L800 429.3L801 429.8L802 429.5L803 429.3L804 429.9L805 430.0L806 430.0L807 429.8L808 429.6L809 429.8L810 429.9L811 430.0L812 429.3L813 428.2L814 429.1L815 429.2L816 428.9L817 429.9L818 428.7L819 429.5L820 429.2L821 429.1L822 429.5L823 429.8L824 429.9L825 429.9L826 429.3L827 429.6L828 429.1L829 430.0L830 429.7L831 428.1L832 429.9L833 429.2L834 429.4L835 429.8L836 427.6L837 429.8L838 428.5L839 429.9L840 430.0L841 428.1L842 429.5L843 430.0L844 429.6L845 429.5L846 428.6L847 430.0L848 429.9L849 427.7L850 428.6L851 429.9L852 429.7L853 429.7L854 428.9L855 429.1L856 428.2L857 428.3L858 429.3L859 428.6L860 428.6L861 428.6L862 429.4L863 428.5L864 428.7L865 427.9L866 430.0L867 428.1L868 430.0L869 428.5L870 429.1L871 429.4L872 427.7L873 429.2L874 429.6L875 428.5L876 428.1L877 429.1L878 429.6L879 429.5L880 429.5L881 428.7L882 429.8L883 429.6L884 429.2L885 429.6L886 429.7L887 428.5L888 428.2L889 429.4L890 429.5L891 429.9L892 429.8L893 429.9L894 429.2L895 429.2L896 430.0L897 427.9L898 429.7L899 428.2L900 428.2L901 427.7L902 429.9L903 429.5L904 427.9L905 430.0L906 430.0L907 429.2L908 429.4L909 427.9L910 428.5L911 429.3L912 427.5L913 429.3L914 429.3L915 428.8L916 429.6L917 429.7L918 429.1L919 429.7L919 434.5ZM14 434.5L14 441.2L15 440.1L16 439.7L17 439.0L18 439.4L19 439.4L20 439.8L21 439.8L22 440.9L23 441.3L24 439.6L25 439.5L26 440.0L27 441.5L28 439.3L29 439.7L30 440.7L31 439.1L32 439.3L33 441.4L34 440.7L35 439.7L36 439.0L37 441.0L38 440.2L39 440.7L40 441.5L41 441.0L42 439.4L43 439.1L44 439.2L45 439.7L46 439.6L47 439.1L48 439.1L49 440.0L50 439.9L51 439.3L52 441.5L53 440.0L54 439.0L55 439.4L56 440.6L57 439.2L58 440.2L59 439.0L60 439.2L61 440.8L62 439.9L63 440.1L64 439.1L65 439.6L66 439.8L67 439.2L68 440.0L69 439.7L70 441.5L71 439.8L72 439.4L73 439.0L74 439.1L75 440.4L76 439.0L77 439.0L78 439.1L79 439.7L80 440.7L81 439.9L82 440.6L83 439.0L84 439.0L85 440.5L86 439.3L87 440.3L88 439.3L89 439.1L90 439.2L91 439.0L92 441.0L93 439.8L94 439.3L95 439.5L96 439.4L97 439.0L98 441.0L99 439.8L100 441.3L101 439.5L102 440.0L103 439.2L104 439.0L105 441.2L106 440.8L107 439.2L108 441.0L109 440.7L110 439.2L111 439.9L112 441.3L113 439.6L114 441.3L115 439.1L116 439.4L117 440.3L118 439.1L119 439.2L120 440.9L121 439.6L122 440.6L123 439.1L124 439.1L125 439.3L126 439.1L127 441.4L128 439.2L129 439.8L130 439.0L131 439.7L132 439.4L133 439.4L134 439.0L135 439.0L136 440.7L137 439.3L138 439.1L139 439.1L140 439.2L141 439.1L142 439.0L143 440.1L144 439.3L145 439.1L146 440.2L147 439.0L148 439.2L149 440.7L150 439.0L151 439.5L152 440.7L153 440.6L154 439.1L155 439.3L156 440.3L157 439.4L158 441.3L159 439.1L160 441.3L161 439.6L162 439.1L163 439.5L164 439.0L165 440.2L166 439.2L167 441.0L168 439.9L169 439.3L170 439.2L171 439.9L172 439.1L173 440.9L174 439.0L175 439.7L176 439.7L177 439.2L178 440.5L179 439.4L180 440.1L181 439.8L182 439.2L183 439.4L184 439.0L185 439.1L186 440.8L187 439.3L188 440.1L189 439.0L190 439.8L191 439.3L192 439.6L193 439.2L194 439.0L195 439.2L196 439.1L197 439.0L198 440.3L199 439.2L200 439.4L201 441.1L202 440.5L203 440.9L204 440.9L205 439.0L206 439.2L207 439.0L208 440.2L209 440.1L210 439.3L211 439.4L212 440.1L213 440.2L214 439.2L215 440.8L216 439.3L217 440.0L218 439.1L219 439.0L220 441.1L221 440.3L222 440.3L223 439.0L224 439.0L225 439.1L226 439.1L227 439.2L228 439.4L229 439.0L230 439.2L231 440.0L232 439.1L233 440.8L234 439.8L235 440.3L236 439.2L237 439.5L238 440.2L239 439.3L240 439.0L241 440.7L242 440.5L243 439.2L244 439.0L245 440.8L246 439.9L247 439.0L248 439.1L249 439.0L250 440.6L251 439.1L252 441.1L253 440.4L254 439.0L255 440.2L256 439.4L257 440.4L258 440.7L259 439.2L260 439.0L261 441.2L262 439.4L263 441.2L264 440.2L265 440.4L266 440.7L267 440.0L268 439.5L269 439.0L270 440.2L271 439.5L272 439.7L273 441.2L274 439.0L275 440.5L276 439.0L277 440.2L278 440.6L279 439.2L280 439.7L281 441.3L282 440.0L283 439.7L284 439.2L285 439.0L286 439.3L287 439.4L288 439.1L289 439.2L290 439.0L291 440.2L292 440.1L293 439.1L294 439.1L295 439.7L296 439.5L297 441.2L298 439.3L299 439.2L300 441.0L301 439.1L302 439.8L303 439.3L304 440.7L305 439.8L306 440.4L307 439.1L308 440.1L309 439.9L310 439.5L311 440.5L312 440.7L313 439.0L314 439.2L315 439.3L316 439.1L317 439.0L318 439.2L319 439.1L320 440.2L321 439.5L322 439.0L323 439.3L324 439.5L325 439.3L326 439.1L327 439.0L328 439.0L329 441.5L330 440.4L331 439.0L332 440.3L333 441.4L334 439.8L335 439.0L336 439.6L337 439.5L338 439.1L339 439.7L340 439.0L341 441.1L342 440.0L343 440.0L344 441.2L345 440.1L346 439.2L347 439.2L348 439.0L349 439.0L350 440.5L351 440.8L352 439.2L353 439.1L354 440.0L355 440.8L356 441.1L357 439.1L358 440.5L359 440.7L360 440.4L361 439.3L362 439.1L363 440.7L364 439.3L365 439.3L366 439.8L367 439.3L368 440.7L369 439.1L370 439.0L371 439.8L372 440.0L373 440.7L374 440.2L375 441.0L376 441.2L377 439.6L378 439.6L379 439.1L380 439.2L381 439.8L382 439.0L383 440.2L384 439.1L385 439.5L386 441.4L387 439.0L388 439.0L389 439.5L390 439.1L391 440.3L392 439.0L393 440.8L394 440.8L395 440.5L396 439.5L397 439.2L398 440.1L399 439.7L400 439.4L401 439.3L402 439.5L403 440.1L404 440.7L405 441.0L406 439.1L407 439.2L408 439.5L409 439.8L410 439.3L411 439.1L412 439.0L413 439.3L414 439.5L415 441.4L416 441.1L417 440.9L418 441.4L419 441.3L420 440.0L421 440.6L422 439.0L423 440.1L424 439.9L425 439.2L426 439.8L427 441.3L428 439.6L429 440.0L430 439.2L431 439.3L432 441.0L433 439.0L434 439.1L435 440.2L436 439.5L437 439.0L438 440.1L439 439.3L440 439.8L441 439.4L442 439.7L443 439.8L444 439.4L445 439.0L446 439.1L447 441.0L448 439.8L449 439.0L450 440.9L451 439.2L452 439.0L453 439.7L454 439.2L455 439.6L456 439.8L457 439.1L458 439.8L459 439.0L460 439.7L461 439.9L462 439.0L463 439.4L464 439.0L465 439.5L466 440.9L467 439.8L468 440.3L469 440.4L470 439.0L471 441.5L472 440.3L473 439.0L474 440.7L475 439.4L476 439.1L477 441.3L478 439.8L479 440.5L480 439.0L481 440.5L482 439.0L483 439.1L484 439.3L485 439.0L486 439.9L487 439.1L488 439.2L489 440.3L490 439.5L491 441.0L492 440.0L493 440.9L494 439.8L495 441.1L496 440.9L497 439.1L498 440.4L499 439.3L500 440.5L501 440.2L502 440.7L503 439.0L504 439.3L505 440.4L506 441.2L507 440.3L508 439.0L509 439.9L510 439.0L511 439.8L512 440.6L513 439.0L514 441.1L515 440.1L516 439.2L517 439.1L518 439.5L519 440.8L520 439.8L521 439.0L522 439.0L523 439.0L524 440.6L525 439.1L526 439.8L527 439.2L528 440.2L529 439.4L530 439.1L531 440.9L532 439.7L533 440.2L534 440.6L535 441.3L536 439.0L537 439.3L538 439.1L539 439.6L540 440.9L541 440.6L542 439.0L543 439.1L544 440.7L545 440.2L546 439.4L547 439.6L548 439.1L549 440.8L550 439.4L551 440.9L552 439.9L553 439.0L554 439.3L555 439.1L556 441.0L557 439.9L558 439.0L559 439.1L560 439.3L561 439.5L562 439.8L563 439.4L564 439.3L565 439.0L566 439.8L567 439.3L568 439.0L569 439.5L570 441.4L571 439.0L572 439.1L573 440.1L574 439.2L575 439.2L576 439.6L577 439.2L578 439.8L579 439.7L580 441.3L581 441.5L582 439.0L583 439.8L584 440.5L585 440.9L586 440.5L587 440.0L588 440.0L589 439.3L590 439.2L591 440.6L592 440.9L593 441.2L594 440.2L595 439.2L596 440.5L597 440.4L598 439.6L599 440.0L600 439.3L601 439.8L602 439.4L603 439.0L604 439.3L605 439.3L606 441.4L607 439.6L608 439.3L609 439.1L610 439.1L611 439.3L612 439.0L613 439.0L614 440.9L615 439.5L616 439.5L617 439.8L618 439.2L619 439.1L620 439.0L621 439.2L622 439.2L623 440.3L624 439.8L625 441.2L626 439.3L627 441.1L628 439.9L629 439.0L630 439.1L631 439.8L632 441.4L633 439.3L634 440.5L635 439.5L636 440.9L637 439.0L638 439.6L639 441.0L640 439.2L641 439.2L642 439.0L643 439.1L644 439.2L645 440.2L646 439.1L647 439.4L648 439.1L649 439.9L650 440.9L651 440.1L652 439.1L653 440.3L654 441.3L655 439.9L656 439.0L657 440.6L658 440.9L659 439.3L660 439.0L661 439.1L662 439.7L663 440.9L664 440.0L665 441.1L666 439.1L667 439.3L668 440.4L669 440.1L670 439.4L671 440.2L672 439.3L673 439.0L674 439.4L675 439.0L676 440.0L677 439.3L678 439.6L679 439.9L680 439.2L681 439.5L682 439.0L683 441.1L684 439.8L685 441.4L686 439.0L687 439.9L688 440.3L689 439.3L690 439.0L691 439.1L692 439.1L693 440.5L694 439.0L695 440.7L696 439.4L697 439.7L698 439.9L699 439.8L700 440.1L701 439.9L702 439.3L703 440.4L704 439.2L705 440.3L706 440.5L707 440.5L708 439.2L709 440.5L710 441.4L711 439.5L712 439.2L713 439.7L714 441.2L715 439.0L716 439.0L717 439.6L718 440.1L719 440.5L720 439.3L721 441.4L722 439.1L723 440.4L724 439.0L725 439.0L726 439.0L727 439.0L728 439.6L729 439.8L730 439.1L731 441.2L732 439.3L733 439.1L734 439.1L735 440.4L736 441.1L737 439.1L738 439.0L739 440.5L740 439.1L741 441.4L742 439.6L743 440.0L744 439.3L745 440.6L746 439.5L747 439.3L748 441.0L749 439.0L750 440.3L751 439.0L752 440.0L753 439.4L754 440.9L755 439.0L756 439.8L757 439.4L758 441.1L759 441.2L760 440.0L761 439.1L762 439.2L763 439.2L764 439.5L765 439.1L766 439.1L767 440.4L768 440.0L769 439.2L770 441.5L771 439.1L772 439.8L773 439.1L774 440.9L775 440.9L776 439.2L777 440.4L778 440.7L779 439.2L780 439.3L781 439.6L782 441.0L783 439.1L784 440.2L785 439.9L786 439.5L787 439.8L788 440.9L789 439.1L790 441.0L791 439.3L792 440.5L793 440.9L794 439.1L795 440.9L796 441.5L797 439.2L798 439.0L799 439.0L800 441.4L801 439.0L802 441.1L803 439.1L804 440.4L805 439.0L806 439.1L807 440.2L808 439.0L809 439.3L810 441.1L811 440.3L812 440.9L813 441.4L814 439.0L815 439.1L816 440.6L817 440.2L818 439.0L819 439.6L820 439.1L821 439.5L822 439.0L823 439.0L824 441.5L825 439.3L826 440.9L827 439.0L828 439.6L829 439.0L830 439.5L831 439.1L832 440.2L833 439.1L834 440.4L835 439.6L836 439.0L837 439.3L838 439.6L839 441.1L840 439.3L841 439.1L842 441.3L843 440.9L844 440.3L845 439.2L846 439.1L847 439.2L848 439.0L849 439.0L850 439.6L851 439.4L852 439.8L853 439.3L854 439.0L855 440.2L856 440.1L857 439.7L858 439.8L859 440.2L860 441.4L861 440.9L862 440.3L863 439.4L864 439.3L865 439.4L866 441.4L867 439.4L868 439.4L869 439.4L870 439.1L871 441.5L872 439.0L873 439.9L874 441.1L875 439.2L876 439.9L877 439.4L878 439.1L879 439.1L880 439.0L881 440.8L882 440.5L883 441.1L884 439.0L885 440.2L886 439.3L887 440.0L888 439.8L889 439.2L890 441.4L891 439.0L892 440.4L893 440.8L894 439.7L895 439.9L896 441.5L897 439.1L898 440.0L899 440.4L900 439.4L901 440.3L902 439.4L903 439.7L904 439.9L905 440.1L906 439.3L907 440.0L908 439.7L909 439.1L910 439.9L911 439.2L912 441.1L913 439.6L914 440.3L915 439.7L916 439.6L917 439.1L918 439.1L919 441.1L919 434.5ZM14 701L14 696.9L15 696.9L16 696.9L17 696.0L18 697.4L19 697.4L20 696.0L21 697.0L22 696.6L23 696.0L24 695.7L25 695.8L26 697.5L27 697.2L28 696.0L29 696.0L30 697.5L31 697.4L32 697.4L33 697.5L34 697.2L35 696.1L36 696.9L37 697.0L38 697.5L39 697.2L40 695.3L41 696.4L42 697.1L43 697.0L44 696.1L45 696.2L46 697.5L47 696.5L48 697.2L49 696.9L50 697.4L51 697.2L52 697.2L53 697.2L54 697.5L55 697.4L56 696.8L57 697.5L58 697.4L59 696.4L60 697.3L61 697.3L62 697.4L63 696.0L64 697.5L65 696.6L66 695.9L67 697.4L68 697.1L69 696.1L70 696.7L71 697.2L72 697.5L73 697.1L74 697.2L75 696.4L76 697.3L77 697.1L78 696.6L79 696.1L80 697.2L81 697.2L82 696.8L83 695.6L84 697.4L85 695.4L86 696.4L87 697.2L88 696.5L89 697.3L90 697.5L91 696.2L92 697.2L93 696.9L94 697.0L95 695.7L96 696.2L97 697.5L98 696.7L99 697.0L100 697.0L101 695.9L102 697.1L103 697.0L104 695.8L105 697.1L106 697.0L107 696.9L108 696.0L109 696.5L110 696.3L111 697.1L112 697.5L113 696.5L114 696.8L115 696.2L116 696.2L117 697.5L118 697.4L119 697.5L120 696.0L121 697.5L122 697.5L123 696.3L124 696.8L125 697.5L126 696.5L127 696.4L128 697.0L129 697.5L130 696.4L131 697.1L132 696.7L133 695.3L134 696.0L135 695.8L136 697.5L137 697.3L138 696.9L139 697.5L140 695.3L141 697.3L142 697.3L143 697.3L144 697.4L145 695.9L146 696.8L147 696.9L148 697.1L149 697.5L150 697.3L151 695.8L152 696.1L153 695.9L154 697.4L155 697.4L156 697.5L157 696.9L158 697.2L159 697.0L160 697.0L161 696.8L162 697.2L163 696.1L164 697.4L165 695.6L166 696.8L167 697.5L168 697.3L169 696.9L170 697.1L171 696.8L172 697.3L173 697.3L174 696.1L175 697.3L176 696.4L177 696.1L178 696.7L179 697.0L180 695.6L181 697.1L182 695.8L183 697.5L184 697.1L185 696.6L186 697.5L187 695.9L188 697.5L189 696.7L190 697.4L191 695.6L192 696.8L193 696.1L194 697.0L195 696.5L196 696.5L197 697.3L198 697.4L199 696.0L200 697.5L201 695.6L202 697.4L203 697.5L204 697.5L205 696.1L206 695.5L207 697.1L208 696.5L209 697.4L210 695.7L211 696.5L212 697.4L213 697.5L214 696.4L215 697.5L216 696.0L217 697.3L218 697.4L219 696.8L220 697.3L221 696.8L222 697.4L223 695.7L224 697.3L225 695.9L226 697.4L227 696.1L228 695.4L229 697.2L230 697.5L231 697.2L232 696.6L233 697.4L234 696.8L235 697.5L236 697.0L237 696.3L238 697.1L239 696.5L240 697.5L241 696.0L242 697.5L243 695.6L244 695.3L245 695.6L246 696.9L247 697.3L248 697.2L249 696.3L250 697.0L251 695.6L252 697.5L253 697.0L254 695.9L255 696.7L256 696.9L257 697.5L258 697.5L259 697.3L260 695.7L261 695.9L262 697.4L263 695.6L264 697.5L265 696.7L266 695.4L267 697.2L268 695.5L269 696.6L270 697.5L271 697.3L272 697.1L273 697.4L274 696.3L275 697.4L276 696.1L277 697.3L278 697.5L279 696.8L280 697.5L281 696.8L282 696.1L283 696.7L284 697.0L285 697.5L286 696.9L287 697.5L288 696.6L289 697.5L290 696.8L291 697.2L292 697.2L293 696.5L294 697.4L295 697.4L296 695.5L297 697.3L298 695.9L299 695.8L300 697.0L301 697.5L302 697.5L303 695.8L304 697.5L305 697.0L306 696.9L307 697.5L308 697.0L309 697.4L310 696.9L311 696.9L312 697.2L313 697.4L314 697.1L315 697.4L316 697.5L317 697.4L318 695.8L319 696.9L320 695.8L321 697.5L322 695.5L323 697.0L324 696.1L325 696.8L326 696.5L327 697.4L328 696.3L329 697.4L330 697.3L331 697.5L332 697.2L333 696.9L334 697.3L335 695.8L336 697.5L337 696.8L338 697.4L339 696.7L340 696.1L341 696.4L342 697.5L343 697.4L344 696.7L345 695.4L346 697.5L347 696.7L348 696.4L349 696.0L350 697.2L351 696.1L352 697.0L353 695.6L354 697.5L355 695.6L356 697.1L357 697.1L358 697.5L359 697.4L360 696.3L361 696.5L362 697.4L363 697.2L364 697.5L365 697.4L366 697.4L367 697.3L368 695.4L369 695.3L370 696.1L371 697.0L372 697.0L373 696.2L374 695.7L375 696.3L376 696.6L377 697.4L378 696.6L379 695.9L380 696.1L381 697.5L382 696.4L383 697.2L384 697.4L385 695.4L386 696.5L387 696.3L388 697.5L389 696.0L390 695.6L391 695.7L392 696.3L393 696.0L394 696.1L395 696.7L396 697.1L397 696.0L398 696.1L399 695.8L400 697.3L401 695.5L402 696.9L403 695.5L404 697.5L405 695.4L406 696.1L407 697.4L408 696.0L409 697.4L410 697.4L411 697.0L412 697.4L413 697.0L414 695.7L415 696.5L416 696.4L417 697.2L418 696.1L419 696.1L420 696.5L421 695.5L422 696.0L423 697.1L424 697.5L425 696.6L426 696.0L427 697.2L428 696.7L429 696.0L430 696.1L431 697.5L432 697.0L433 697.5L434 697.5L435 696.0L436 697.1L437 696.7L438 697.0L439 697.3L440 697.4L441 697.2L442 695.9L443 696.7L444 697.3L445 697.5L446 697.3L447 696.4L448 697.1L449 696.5L450 696.1L451 697.5L452 696.5L453 697.5L454 696.0L455 697.4L456 697.3L457 695.5L458 697.2L459 697.4L460 695.8L461 696.7L462 695.7L463 697.2L464 697.0L465 695.5L466 696.9L467 695.4L468 697.4L469 696.0L470 697.4L471 696.9L472 697.5L473 697.4L474 695.5L475 697.0L476 696.1L477 697.4L478 697.2L479 697.5L480 696.8L481 695.9L482 696.9L483 697.2L484 695.6L485 695.7L486 696.5L487 697.5L488 696.6L489 697.1L490 695.5L491 697.2L492 696.5L493 696.6L494 697.2L495 696.9L496 696.5L497 695.7L498 697.0L499 697.2L500 695.4L501 697.5L502 696.0L503 696.5L504 696.8L505 697.1L506 696.3L507 695.8L508 696.3L509 696.3L510 697.5L511 697.3L512 697.5L513 695.5L514 695.8L515 697.5L516 696.7L517 696.8L518 697.5L519 697.2L520 696.3L521 696.6L522 697.3L523 696.2L524 697.3L525 696.8L526 697.1L527 695.4L528 696.6L529 696.1L530 696.5L531 697.2L532 695.5L533 696.4L534 696.4L535 697.3L536 697.4L537 696.8L538 696.0L539 696.1L540 697.2L541 697.5L542 696.9L543 695.8L544 697.4L545 696.3L546 697.4L547 697.3L548 697.5L549 697.3L550 697.2L551 695.4L552 695.5L553 697.4L554 697.3L555 695.5L556 697.4L557 697.3L558 697.1L559 697.5L560 697.4L561 697.2L562 697.2L563 695.5L564 697.3L565 697.4L566 695.7L567 697.1L568 696.0L569 696.6L570 696.2L571 697.3L572 697.4L573 696.2L574 697.0L575 696.8L576 696.5L577 696.3L578 697.3L579 697.2L580 695.6L581 696.9L582 697.3L583 696.6L584 697.4L585 696.2L586 697.5L587 696.0L588 696.8L589 697.2L590 695.6L591 697.3L592 697.4L593 697.5L594 696.8L595 696.3L596 696.5L597 697.1L598 696.1L599 697.5L600 697.3L601 696.6L602 695.4L603 696.6L604 696.4L605 696.2L606 697.2L607 695.6L608 696.3L609 697.2L610 697.2L611 696.1L612 697.2L613 697.4L614 695.8L615 696.9L616 696.9L617 696.5L618 695.7L619 697.5L620 697.2L621 697.5L622 697.1L623 696.9L624 695.9L625 696.5L626 696.8L627 697.1L628 696.8L629 697.3L630 695.9L631 696.1L632 696.0L633 697.4L634 696.5L635 696.2L636 696.9L637 695.7L638 695.7L639 696.3L640 696.0L641 696.6L642 695.8L643 697.5L644 696.4L645 696.4L646 696.7L647 697.3L648 697.5L649 696.7L650 696.0L651 697.3L652 697.4L653 697.4L654 697.5L655 696.5L656 695.4L657 696.1L658 697.2L659 696.4L660 697.5L661 696.0L662 697.3L663 697.5L664 696.6L665 697.5L666 697.3L667 697.5L668 697.1L669 696.8L670 696.1L671 697.5L672 696.0L673 697.5L674 697.4L675 696.6L676 697.2L677 697.3L678 696.8L679 697.4L680 696.1L681 697.4L682 695.9L683 696.1L684 696.9L685 697.5L686 696.2L687 697.5L688 696.9L689 697.1L690 697.5L691 696.6L692 696.3L693 696.7L694 697.1L695 696.9L696 696.7L697 697.4L698 695.8L699 695.3L700 696.1L701 695.5L702 697.3L703 695.4L704 697.5L705 697.0L706 697.5L707 697.0L708 696.5L709 696.4L710 697.0L711 697.2L712 697.4L713 697.1L714 697.3L715 697.4L716 696.3L717 696.9L718 697.1L719 697.4L720 696.4L721 697.4L722 697.3L723 696.8L724 696.4L725 695.4L726 696.3L727 695.5L728 695.6L729 696.4L730 696.4L731 697.5L732 697.4L733 697.5L734 695.9L735 696.4L736 696.6L737 697.3L738 697.2L739 697.4L740 696.6L741 695.3L742 697.3L743 697.5L744 697.4L745 697.2L746 695.7L747 696.1L748 697.0L749 697.5L750 697.5L751 697.4L752 696.2L753 697.0L754 695.3L755 695.7L756 696.1L757 697.0L758 696.0L759 697.5L760 697.5L761 696.8L762 696.9L763 697.4L764 697.4L765 697.5L766 695.7L767 696.4L768 695.5L769 695.4L770 697.1L771 696.3L772 697.2L773 696.0L774 695.9L775 697.5L776 697.5L777 697.4L778 696.7L779 697.2L780 697.5L781 696.0L782 696.1L783 697.0L784 697.5L785 695.8L786 696.9L787 697.5L788 697.3L789 696.6L790 695.8L791 697.0L792 696.6L793 697.4L794 697.4L795 695.7L796 697.2L797 697.5L798 696.7L799 697.5L800 697.4L801 697.0L802 696.7L803 696.6L804 696.4L805 697.1L806 697.5L807 696.3L808 697.5L809 697.0L810 697.1L811 696.5L812 696.4L813 697.4L814 696.6L815 696.4L816 697.0L817 697.5L818 695.7L819 696.7L820 697.5L821 697.4L822 695.4L823 697.4L824 697.2L825 696.1L826 696.0L827 696.6L828 696.3L829 697.5L830 697.5L831 695.4L832 696.1L833 697.5L834 697.5L835 697.4L836 695.6L837 697.4L838 696.5L839 695.6L840 696.6L841 695.6L842 697.3L843 697.4L844 697.5L845 696.2L846 697.5L847 695.4L848 696.4L849 697.4L850 696.1L851 697.4L852 696.9L853 697.5L854 696.1L855 695.8L856 695.7L857 697.5L858 695.9L859 696.8L860 696.0L861 696.9L862 696.7L863 696.7L864 696.1L865 697.5L866 697.5L867 696.8L868 697.3L869 697.2L870 697.5L871 696.3L872 697.5L873 696.0L874 696.1L875 697.0L876 697.5L877 696.6L878 697.4L879 697.1L880 697.5L881 695.4L882 696.8L883 697.2L884 697.5L885 696.3L886 695.9L887 695.9L888 697.5L889 697.2L890 697.3L891 696.2L892 697.5L893 696.7L894 695.4L895 696.2L896 697.5L897 697.5L898 697.5L899 696.4L900 696.7L901 696.9L902 697.0L903 697.1L904 696.7L905 696.6L906 695.7L907 696.3L908 696.1L909 695.7L910 696.0L911 696.4L912 697.5L913 696.5L914 695.9L915 697.1L916 695.8L917 697.4L918 695.5L919 697.1L919 701Z" fill="#0a2b29"/>
<defs><linearGradient id="g1" gradientUnits="userSpaceOnUse" x1="0" x2="0" y1="172" y2="267"><stop offset="0" stop-color="#0a2b29"/><stop offset="0.15" stop-color="#0a3a35"/><stop offset="0.6" stop-color="#0b4a41"/><stop offset="1" stop-color="#0b5c4e"/></linearGradient><linearGradient id="g2" gradientUnits="userSpaceOnUse" x1="0" x2="0" y1="430" y2="335"><stop offset="0" stop-color="#0a2b29"/><stop offset="0.15" stop-color="#0a3a35"/><stop offset="0.6" stop-color="#0b4a41"/><stop offset="1" stop-color="#0b5c4e"/></linearGradient><linearGradient id="g3" gradientUnits="userSpaceOnUse" x1="0" x2="0" y1="439" y2="534"><stop offset="0" stop-color="#0a2b29"/><stop offset="0.15" stop-color="#0a3a35"/><stop offset="0.6" stop-color="#0b4a41"/><stop offset="1" stop-color="#0b5c4e"/></linearGradient><linearGradient id="g4" gradientUnits="userSpaceOnUse" x1="0" x2="0" y1="697" y2="602"><stop offset="0" stop-color="#0a2b29"/><stop offset="0.15" stop-color="#0a3a35"/><stop offset="0.6" stop-color="#0b4a41"/><stop offset="1" stop-color="#0b5c4e"/></linearGradient></defs>
<path d="M14.75 171h1.5v65.5h-1.5zM16.75 171h1.5v61.3h-1.5zM19.75 171h1.5v73.4h-1.5zM21.75 171h1.5v64.0h-1.5zM23.75 171h1.5v77.6h-1.5zM26.75 171h1.5v76.5h-1.5zM28.75 171h1.5v72.7h-1.5zM31.75 171h1.5v81.0h-1.5zM33.75 171h1.5v73.4h-1.5zM35.75 171h1.5v83.9h-1.5zM38.75 171h1.5v80.8h-1.5zM40.75 171h1.5v81.1h-1.5zM43.75 171h1.5v88.1h-1.5zM45.75 171h1.5v87.9h-1.5zM48.75 171h1.5v68.1h-1.5zM50.75 171h1.5v64.8h-1.5zM52.75 171h1.5v67.8h-1.5zM55.75 171h1.5v66.2h-1.5zM57.75 171h1.5v58.1h-1.5zM60.75 171h1.5v56.1h-1.5zM62.75 171h1.5v70.3h-1.5zM65.75 171h1.5v57.1h-1.5zM67.75 171h1.5v58.8h-1.5zM69.75 171h1.5v45.5h-1.5zM74.75 171h1.5v36.1h-1.5zM74.2 172.0L75.5 193.1L76.8 172.0ZM76.75 171h1.5v14.4h-1.5zM81.75 171h1.5v43.7h-1.5zM81.2 172.0L82.5 197.6L83.8 172.0ZM83.75 171h1.5v12.7h-1.5zM86.75 171h1.5v5.4h-1.5zM87.75 171h1.5v5.6h-1.5zM92.75 171h1.5v59.6h-1.5zM92.2 172.0L93.5 207.2L94.8 172.0ZM97.75 171h1.5v21.2h-1.5zM102.75 171h1.5v34.3h-1.5zM102.2 172.0L103.5 192.0L104.8 172.0ZM106.75 171h1.5v5.2h-1.5zM110.75 171h1.5v49.5h-1.5zM108.75 171h1.5v33.7h-1.5zM110.2 172.0L111.5 201.1L112.8 172.0ZM114.75 171h1.5v22.4h-1.5zM121.75 171h1.5v54.1h-1.5zM121.2 172.0L122.5 203.8L123.8 172.0ZM127.75 171h1.5v20.7h-1.5zM125.75 171h1.5v11.9h-1.5zM134.75 171h1.5v28.7h-1.5zM134.2 172.0L135.5 188.6L136.8 172.0ZM139.75 171h1.5v21.3h-1.5zM143.75 171h1.5v25.4h-1.5zM143.2 172.0L144.5 186.6L145.8 172.0ZM148.75 171h1.5v48.8h-1.5zM146.75 171h1.5v23.1h-1.5zM148.2 172.0L149.5 200.7L150.8 172.0ZM157.75 171h1.5v78.5h-1.5zM155.75 171h1.5v60.7h-1.5zM157.2 172.0L158.5 218.5L159.8 172.0ZM162.75 171h1.5v18.9h-1.5zM160.75 171h1.5v15.1h-1.5zM167.75 171h1.5v37.4h-1.5zM169.75 171h1.5v27.0h-1.5zM164.75 171h1.5v8.8h-1.5zM167.2 172.0L168.5 193.8L169.8 172.0ZM177.75 171h1.5v28.9h-1.5zM177.2 172.0L178.5 188.8L179.8 172.0ZM185.75 171h1.5v51.7h-1.5zM183.75 171h1.5v35.3h-1.5zM185.2 172.0L186.5 202.4L187.8 172.0ZM186.75 171h1.5v3.1h-1.5zM190.75 171h1.5v6.5h-1.5zM191.75 171h1.5v11.7h-1.5zM195.75 171h1.5v50.4h-1.5zM197.75 171h1.5v26.5h-1.5zM195.2 172.0L196.5 201.6L197.8 172.0ZM198.75 171h1.5v13.3h-1.5zM200.75 171h1.5v13.5h-1.5zM204.75 171h1.5v34.4h-1.5zM204.2 172.0L205.5 192.0L206.8 172.0ZM207.75 171h1.5v22.5h-1.5zM213.75 171h1.5v61.0h-1.5zM215.75 171h1.5v34.3h-1.5zM213.2 172.0L214.5 208.0L215.8 172.0ZM214.75 171h1.5v3.3h-1.5zM222.75 171h1.5v53.3h-1.5zM224.75 171h1.5v33.7h-1.5zM222.2 172.0L223.5 203.4L224.8 172.0ZM225.75 171h1.5v4.0h-1.5zM228.75 171h1.5v13.4h-1.5zM233.75 171h1.5v56.9h-1.5zM231.75 171h1.5v35.7h-1.5zM230.75 171h1.5v14.2h-1.5zM233.2 172.0L234.5 205.5L235.8 172.0ZM242.75 171h1.5v44.1h-1.5zM244.75 171h1.5v24.5h-1.5zM242.2 172.0L243.5 197.8L244.8 172.0ZM247.75 171h1.5v25.6h-1.5zM245.75 171h1.5v16.8h-1.5zM247.2 172.0L248.5 186.8L249.8 172.0ZM248.75 171h1.5v6.3h-1.5zM254.75 171h1.5v17.7h-1.5zM252.75 171h1.5v14.8h-1.5zM262.75 171h1.5v26.1h-1.5zM260.75 171h1.5v17.4h-1.5zM262.2 172.0L263.5 187.0L264.8 172.0ZM271.75 171h1.5v21.6h-1.5zM273.75 171h1.5v12.5h-1.5zM273.75 171h1.5v4.5h-1.5zM279.75 171h1.5v18.2h-1.5zM281.75 171h1.5v9.4h-1.5zM284.75 171h1.5v11.0h-1.5zM289.75 171h1.5v24.5h-1.5zM291.75 171h1.5v13.3h-1.5zM289.2 172.0L290.5 186.1L291.8 172.0ZM289.75 171h1.5v8.7h-1.5zM299.75 171h1.5v22.9h-1.5zM297.75 171h1.5v15.6h-1.5zM304.75 171h1.5v9.0h-1.5zM305.75 171h1.5v17.2h-1.5zM307.75 171h1.5v13.1h-1.5zM317.75 171h1.5v5.0h-1.5zM318.75 171h1.5v32.0h-1.5zM320.75 171h1.5v26.1h-1.5zM318.2 172.0L319.5 190.6L320.8 172.0ZM325.75 171h1.5v23.0h-1.5zM323.75 171h1.5v13.4h-1.5zM325.2 172.0L326.5 185.2L327.8 172.0ZM334.75 171h1.5v25.1h-1.5zM334.2 172.0L335.5 186.5L336.8 172.0ZM339.75 171h1.5v7.2h-1.5zM340.75 171h1.5v3.2h-1.5zM344.75 171h1.5v21.4h-1.5zM342.75 171h1.5v14.1h-1.5zM350.75 171h1.5v11.4h-1.5zM356.75 171h1.5v14.0h-1.5zM356.75 171h1.5v4.0h-1.5zM359.75 171h1.5v7.4h-1.5zM364.75 171h1.5v28.5h-1.5zM366.75 171h1.5v17.9h-1.5zM364.2 172.0L365.5 188.5L366.8 172.0ZM368.75 171h1.5v11.0h-1.5zM372.75 171h1.5v40.9h-1.5zM372.2 172.0L373.5 196.0L374.8 172.0ZM377.75 171h1.5v25.3h-1.5zM377.2 172.0L378.5 186.6L379.8 172.0ZM383.75 171h1.5v41.4h-1.5zM385.75 171h1.5v21.4h-1.5zM383.2 172.0L384.5 196.3L385.8 172.0ZM387.75 171h1.5v18.6h-1.5zM389.75 171h1.5v10.0h-1.5zM393.75 171h1.5v47.3h-1.5zM393.2 172.0L394.5 199.8L395.8 172.0ZM401.75 171h1.5v48.4h-1.5zM401.2 172.0L402.5 200.4L403.8 172.0ZM404.75 171h1.5v5.1h-1.5zM411.75 171h1.5v26.2h-1.5zM413.75 171h1.5v14.9h-1.5zM411.2 172.0L412.5 187.1L413.8 172.0ZM421.75 171h1.5v19.1h-1.5zM419.75 171h1.5v16.1h-1.5zM424.75 171h1.5v6.8h-1.5zM425.75 171h1.5v14.3h-1.5zM430.75 171h1.5v33.7h-1.5zM432.75 171h1.5v16.6h-1.5zM427.75 171h1.5v16.1h-1.5zM430.2 172.0L431.5 191.6L432.8 172.0ZM434.75 171h1.5v7.6h-1.5zM439.75 171h1.5v24.7h-1.5zM439.2 172.0L440.5 186.2L441.8 172.0ZM442.75 171h1.5v3.0h-1.5zM443.75 171h1.5v4.9h-1.5zM444.75 171h1.5v11.4h-1.5zM448.75 171h1.5v37.4h-1.5zM448.2 172.0L449.5 193.8L450.8 172.0ZM451.75 171h1.5v8.8h-1.5zM457.75 171h1.5v42.9h-1.5zM459.75 171h1.5v35.9h-1.5zM457.2 172.0L458.5 197.2L459.8 172.0ZM457.75 171h1.5v10.1h-1.5zM462.75 171h1.5v19.1h-1.5zM468.75 171h1.5v43.7h-1.5zM466.75 171h1.5v27.8h-1.5zM468.2 172.0L469.5 197.6L470.8 172.0ZM470.75 171h1.5v10.8h-1.5zM471.75 171h1.5v16.8h-1.5zM473.75 171h1.5v13.1h-1.5zM473.75 171h1.5v5.0h-1.5zM477.75 171h1.5v39.8h-1.5zM475.75 171h1.5v32.5h-1.5zM477.2 172.0L478.5 195.3L479.8 172.0ZM481.75 171h1.5v27.2h-1.5zM481.2 172.0L482.5 187.7L483.8 172.0ZM481.75 171h1.5v12.0h-1.5zM486.75 171h1.5v20.3h-1.5zM484.75 171h1.5v16.4h-1.5zM496.75 171h1.5v37.5h-1.5zM496.2 172.0L497.5 193.9L498.8 172.0ZM497.75 171h1.5v8.2h-1.5zM499.75 171h1.5v7.4h-1.5zM500.75 171h1.5v22.0h-1.5zM502.75 171h1.5v13.1h-1.5zM504.75 171h1.5v60.8h-1.5zM504.2 172.0L505.5 207.9L506.8 172.0ZM507.75 171h1.5v9.6h-1.5zM509.75 171h1.5v23.3h-1.5zM509.2 172.0L510.5 185.4L511.8 172.0ZM513.75 171h1.5v48.0h-1.5zM513.2 172.0L514.5 200.2L515.8 172.0ZM519.75 171h1.5v5.7h-1.5zM520.75 171h1.5v6.3h-1.5zM524.75 171h1.5v36.5h-1.5zM522.75 171h1.5v25.5h-1.5zM528.75 171h1.5v17.4h-1.5zM524.2 172.0L525.5 193.3L526.8 172.0ZM533.75 171h1.5v65.6h-1.5zM531.75 171h1.5v45.4h-1.5zM536.75 171h1.5v28.0h-1.5zM533.2 172.0L534.5 210.7L535.8 172.0ZM533.75 171h1.5v3.2h-1.5zM537.75 171h1.5v11.5h-1.5zM540.75 171h1.5v4.9h-1.5zM542.75 171h1.5v51.3h-1.5zM540.75 171h1.5v25.3h-1.5zM539.75 171h1.5v25.7h-1.5zM542.2 172.0L543.5 202.2L544.8 172.0ZM543.75 171h1.5v4.9h-1.5zM551.75 171h1.5v46.2h-1.5zM553.75 171h1.5v37.1h-1.5zM551.2 172.0L552.5 199.1L553.8 172.0ZM555.75 171h1.5v17.1h-1.5zM557.75 171h1.5v8.8h-1.5zM562.75 171h1.5v64.8h-1.5zM562.2 172.0L563.5 210.3L564.8 172.0ZM565.75 171h1.5v7.2h-1.5zM566.75 171h1.5v8.4h-1.5zM571.75 171h1.5v57.3h-1.5zM571.2 172.0L572.5 205.8L573.8 172.0ZM574.75 171h1.5v6.5h-1.5zM580.75 171h1.5v56.4h-1.5zM580.2 172.0L581.5 205.2L582.8 172.0ZM583.75 171h1.5v25.6h-1.5zM583.2 172.0L584.5 186.7L585.8 172.0ZM589.75 171h1.5v29.8h-1.5zM587.75 171h1.5v16.2h-1.5zM593.75 171h1.5v10.7h-1.5zM589.2 172.0L590.5 189.3L591.8 172.0ZM598.75 171h1.5v53.8h-1.5zM598.2 172.0L599.5 203.7L600.8 172.0ZM604.75 171h1.5v9.7h-1.5zM607.75 171h1.5v14.6h-1.5zM618.75 171h1.5v53.2h-1.5zM620.75 171h1.5v29.5h-1.5zM618.2 172.0L619.5 203.3L620.8 172.0ZM618.75 171h1.5v6.9h-1.5zM622.75 171h1.5v29.5h-1.5zM620.75 171h1.5v16.3h-1.5zM625.75 171h1.5v8.5h-1.5zM622.2 172.0L623.5 189.1L624.8 172.0ZM625.75 171h1.5v12.0h-1.5zM625.75 171h1.5v9.1h-1.5zM630.75 171h1.5v6.1h-1.5zM635.75 171h1.5v7.7h-1.5zM636.75 171h1.5v26.5h-1.5zM636.2 172.0L637.5 187.3L638.8 172.0ZM641.75 171h1.5v12.1h-1.5zM647.75 171h1.5v29.4h-1.5zM647.2 172.0L648.5 189.1L649.8 172.0ZM654.75 171h1.5v5.7h-1.5zM655.75 171h1.5v8.6h-1.5zM659.75 171h1.5v27.2h-1.5zM661.75 171h1.5v14.1h-1.5zM663.75 171h1.5v11.9h-1.5zM659.2 172.0L660.5 187.7L661.8 172.0ZM664.75 171h1.5v14.5h-1.5zM668.75 171h1.5v18.9h-1.5zM666.75 171h1.5v9.8h-1.5zM674.75 171h1.5v30.7h-1.5zM676.75 171h1.5v15.1h-1.5zM674.2 172.0L675.5 189.8L676.8 172.0ZM674.75 171h1.5v8.4h-1.5zM679.75 171h1.5v29.5h-1.5zM679.2 172.0L680.5 189.1L681.8 172.0ZM683.75 171h1.5v13.9h-1.5zM694.75 171h1.5v27.1h-1.5zM694.2 172.0L695.5 187.7L696.8 172.0ZM703.75 171h1.5v16.3h-1.5zM701.75 171h1.5v8.5h-1.5zM706.75 171h1.5v12.6h-1.5zM710.75 171h1.5v15.3h-1.5zM711.75 171h1.5v6.4h-1.5zM720.75 171h1.5v14.2h-1.5zM726.75 171h1.5v13.7h-1.5zM730.75 171h1.5v36.9h-1.5zM728.75 171h1.5v19.3h-1.5zM730.2 172.0L731.5 193.6L732.8 172.0ZM732.75 171h1.5v5.7h-1.5zM736.75 171h1.5v8.5h-1.5zM736.75 171h1.5v28.8h-1.5zM736.2 172.0L737.5 188.7L738.8 172.0ZM741.75 171h1.5v55.0h-1.5zM741.2 172.0L742.5 204.4L743.8 172.0ZM744.75 171h1.5v4.8h-1.5zM746.75 171h1.5v13.3h-1.5zM750.75 171h1.5v56.2h-1.5zM750.2 172.0L751.5 205.1L752.8 172.0ZM750.75 171h1.5v5.3h-1.5zM757.75 171h1.5v45.9h-1.5zM757.2 172.0L758.5 198.9L759.8 172.0ZM766.75 171h1.5v27.6h-1.5zM764.75 171h1.5v23.1h-1.5zM766.2 172.0L767.5 187.9L768.8 172.0ZM767.75 171h1.5v8.3h-1.5zM772.75 171h1.5v6.2h-1.5zM777.75 171h1.5v53.3h-1.5zM777.2 172.0L778.5 203.4L779.8 172.0ZM782.75 171h1.5v14.3h-1.5zM787.75 171h1.5v28.5h-1.5zM789.75 171h1.5v19.0h-1.5zM787.2 172.0L788.5 188.5L789.8 172.0ZM791.75 171h1.5v13.5h-1.5zM797.75 171h1.5v16.7h-1.5zM801.75 171h1.5v27.5h-1.5zM801.2 172.0L802.5 187.9L803.8 172.0ZM805.75 171h1.5v11.0h-1.5zM806.75 171h1.5v15.3h-1.5zM804.75 171h1.5v10.7h-1.5zM809.75 171h1.5v12.6h-1.5zM811.75 171h1.5v16.1h-1.5zM813.75 171h1.5v12.7h-1.5zM816.75 171h1.5v28.1h-1.5zM818.75 171h1.5v19.9h-1.5zM816.2 172.0L817.5 188.3L818.8 172.0ZM824.75 171h1.5v26.7h-1.5zM822.75 171h1.5v12.7h-1.5zM824.2 172.0L825.5 187.4L826.8 172.0ZM827.75 171h1.5v6.2h-1.5zM828.75 171h1.5v17.5h-1.5zM833.75 171h1.5v4.1h-1.5zM834.75 171h1.5v13.6h-1.5zM837.75 171h1.5v20.3h-1.5zM838.75 171h1.5v6.0h-1.5zM843.75 171h1.5v21.5h-1.5zM844.75 171h1.5v4.4h-1.5zM853.75 171h1.5v10.4h-1.5zM858.75 171h1.5v9.7h-1.5zM860.75 171h1.5v30.1h-1.5zM860.2 172.0L861.5 189.5L862.8 172.0ZM864.75 171h1.5v11.3h-1.5zM866.75 171h1.5v9.2h-1.5zM866.75 171h1.5v25.2h-1.5zM866.2 172.0L867.5 186.5L868.8 172.0ZM869.75 171h1.5v7.6h-1.5zM871.75 171h1.5v48.1h-1.5zM871.2 172.0L872.5 200.3L873.8 172.0ZM873.75 171h1.5v3.8h-1.5zM877.75 171h1.5v27.3h-1.5zM875.75 171h1.5v14.9h-1.5zM877.2 172.0L878.5 187.8L879.8 172.0ZM882.75 171h1.5v44.8h-1.5zM884.75 171h1.5v37.5h-1.5zM882.2 172.0L883.5 198.3L884.8 172.0ZM886.75 171h1.5v6.2h-1.5zM891.75 171h1.5v22.9h-1.5zM900.75 171h1.5v16.4h-1.5zM902.75 171h1.5v11.4h-1.5z" fill="url(#g1)"/>
<path d="M13.7 172.0L15.5 181.0L17.3 172.0ZM15.7 172.0L17.5 181.0L19.3 172.0ZM18.7 172.0L20.5 181.0L22.3 172.0ZM20.7 172.0L22.5 181.0L24.3 172.0ZM22.7 172.0L24.5 181.0L26.3 172.0ZM25.7 172.0L27.5 181.0L29.3 172.0ZM27.7 172.0L29.5 181.0L31.3 172.0ZM30.7 172.0L32.5 181.0L34.3 172.0ZM32.7 172.0L34.5 181.0L36.3 172.0ZM34.7 172.0L36.5 181.0L38.3 172.0ZM37.7 172.0L39.5 181.0L41.3 172.0ZM39.7 172.0L41.5 181.0L43.3 172.0ZM42.7 172.0L44.5 181.0L46.3 172.0ZM44.7 172.0L46.5 181.0L48.3 172.0ZM47.7 172.0L49.5 181.0L51.3 172.0ZM49.7 172.0L51.5 181.0L53.3 172.0ZM51.7 172.0L53.5 181.0L55.3 172.0ZM54.7 172.0L56.5 181.0L58.3 172.0ZM56.7 172.0L58.5 181.0L60.3 172.0ZM59.7 172.0L61.5 181.0L63.3 172.0ZM61.7 172.0L63.5 181.0L65.3 172.0ZM64.7 172.0L66.5 181.0L68.3 172.0ZM66.7 172.0L68.5 181.0L70.3 172.0ZM68.7 172.0L70.5 181.0L72.3 172.0ZM73.7 172.0L75.5 181.0L77.3 172.0ZM75.7 172.0L77.5 176.0L79.3 172.0ZM80.7 172.0L82.5 181.0L84.3 172.0ZM82.7 172.0L84.5 175.5L86.3 172.0ZM91.7 172.0L93.5 181.0L95.3 172.0ZM96.7 172.0L98.5 178.1L100.3 172.0ZM101.7 172.0L103.5 181.0L105.3 172.0ZM109.7 172.0L111.5 181.0L113.3 172.0ZM113.7 172.0L115.5 178.4L117.3 172.0ZM120.7 172.0L122.5 181.0L124.3 172.0ZM126.7 172.0L128.5 177.9L130.3 172.0ZM133.7 172.0L135.5 180.3L137.3 172.0ZM138.7 172.0L140.5 178.1L142.3 172.0ZM142.7 172.0L144.5 179.3L146.3 172.0ZM147.7 172.0L149.5 181.0L151.3 172.0ZM156.7 172.0L158.5 181.0L160.3 172.0ZM161.7 172.0L163.5 177.4L165.3 172.0ZM166.7 172.0L168.5 181.0L170.3 172.0ZM176.7 172.0L178.5 180.4L180.3 172.0ZM184.7 172.0L186.5 181.0L188.3 172.0ZM190.7 172.0L192.5 175.2L194.3 172.0ZM194.7 172.0L196.5 181.0L198.3 172.0ZM197.7 172.0L199.5 175.7L201.3 172.0ZM199.7 172.0L201.5 175.7L203.3 172.0ZM203.7 172.0L205.5 181.0L207.3 172.0ZM206.7 172.0L208.5 178.5L210.3 172.0ZM212.7 172.0L214.5 181.0L216.3 172.0ZM221.7 172.0L223.5 181.0L225.3 172.0ZM227.7 172.0L229.5 175.7L231.3 172.0ZM232.7 172.0L234.5 181.0L236.3 172.0ZM241.7 172.0L243.5 181.0L245.3 172.0ZM246.7 172.0L248.5 179.4L250.3 172.0ZM253.7 172.0L255.5 177.0L257.3 172.0ZM261.7 172.0L263.5 179.5L265.3 172.0ZM270.7 172.0L272.5 178.2L274.3 172.0ZM278.7 172.0L280.5 177.2L282.3 172.0ZM283.7 172.0L285.5 175.0L287.3 172.0ZM288.7 172.0L290.5 179.0L292.3 172.0ZM298.7 172.0L300.5 178.6L302.3 172.0ZM304.7 172.0L306.5 176.9L308.3 172.0ZM317.7 172.0L319.5 181.0L321.3 172.0ZM324.7 172.0L326.5 178.6L328.3 172.0ZM333.7 172.0L335.5 179.2L337.3 172.0ZM343.7 172.0L345.5 178.1L347.3 172.0ZM349.7 172.0L351.5 175.1L353.3 172.0ZM355.7 172.0L357.5 175.9L359.3 172.0ZM363.7 172.0L365.5 180.3L367.3 172.0ZM371.7 172.0L373.5 181.0L375.3 172.0ZM376.7 172.0L378.5 179.3L380.3 172.0ZM382.7 172.0L384.5 181.0L386.3 172.0ZM386.7 172.0L388.5 177.3L390.3 172.0ZM392.7 172.0L394.5 181.0L396.3 172.0ZM400.7 172.0L402.5 181.0L404.3 172.0ZM410.7 172.0L412.5 179.6L414.3 172.0ZM420.7 172.0L422.5 177.4L424.3 172.0ZM424.7 172.0L426.5 176.0L428.3 172.0ZM429.7 172.0L431.5 181.0L433.3 172.0ZM438.7 172.0L440.5 179.1L442.3 172.0ZM443.7 172.0L445.5 175.1L447.3 172.0ZM447.7 172.0L449.5 181.0L451.3 172.0ZM456.7 172.0L458.5 181.0L460.3 172.0ZM461.7 172.0L463.5 177.4L465.3 172.0ZM467.7 172.0L469.5 181.0L471.3 172.0ZM470.7 172.0L472.5 176.7L474.3 172.0ZM476.7 172.0L478.5 181.0L480.3 172.0ZM480.7 172.0L482.5 179.9L484.3 172.0ZM480.7 172.0L482.5 175.3L484.3 172.0ZM485.7 172.0L487.5 177.8L489.3 172.0ZM495.7 172.0L497.5 181.0L499.3 172.0ZM499.7 172.0L501.5 178.3L503.3 172.0ZM503.7 172.0L505.5 181.0L507.3 172.0ZM508.7 172.0L510.5 178.7L512.3 172.0ZM512.7 172.0L514.5 181.0L516.3 172.0ZM523.7 172.0L525.5 181.0L527.3 172.0ZM532.7 172.0L534.5 181.0L536.3 172.0ZM536.7 172.0L538.5 175.1L540.3 172.0ZM541.7 172.0L543.5 181.0L545.3 172.0ZM550.7 172.0L552.5 181.0L554.3 172.0ZM554.7 172.0L556.5 176.8L558.3 172.0ZM561.7 172.0L563.5 181.0L565.3 172.0ZM570.7 172.0L572.5 181.0L574.3 172.0ZM579.7 172.0L581.5 181.0L583.3 172.0ZM582.7 172.0L584.5 179.4L586.3 172.0ZM588.7 172.0L590.5 180.7L592.3 172.0ZM597.7 172.0L599.5 181.0L601.3 172.0ZM606.7 172.0L608.5 176.1L610.3 172.0ZM617.7 172.0L619.5 181.0L621.3 172.0ZM621.7 172.0L623.5 180.5L625.3 172.0ZM624.7 172.0L626.5 175.3L628.3 172.0ZM635.7 172.0L637.5 179.6L639.3 172.0ZM640.7 172.0L642.5 175.3L644.3 172.0ZM646.7 172.0L648.5 180.5L650.3 172.0ZM658.7 172.0L660.5 179.9L662.3 172.0ZM663.7 172.0L665.5 176.0L667.3 172.0ZM667.7 172.0L669.5 177.4L671.3 172.0ZM673.7 172.0L675.5 180.9L677.3 172.0ZM678.7 172.0L680.5 180.5L682.3 172.0ZM682.7 172.0L684.5 175.9L686.3 172.0ZM693.7 172.0L695.5 179.8L697.3 172.0ZM702.7 172.0L704.5 176.6L706.3 172.0ZM705.7 172.0L707.5 175.5L709.3 172.0ZM709.7 172.0L711.5 176.3L713.3 172.0ZM719.7 172.0L721.5 175.9L723.3 172.0ZM725.7 172.0L727.5 175.8L729.3 172.0ZM729.7 172.0L731.5 181.0L733.3 172.0ZM735.7 172.0L737.5 180.3L739.3 172.0ZM740.7 172.0L742.5 181.0L744.3 172.0ZM745.7 172.0L747.5 175.7L749.3 172.0ZM749.7 172.0L751.5 181.0L753.3 172.0ZM756.7 172.0L758.5 181.0L760.3 172.0ZM765.7 172.0L767.5 180.0L769.3 172.0ZM776.7 172.0L778.5 181.0L780.3 172.0ZM781.7 172.0L783.5 176.0L785.3 172.0ZM786.7 172.0L788.5 180.3L790.3 172.0ZM790.7 172.0L792.5 175.8L794.3 172.0ZM796.7 172.0L798.5 176.7L800.3 172.0ZM800.7 172.0L802.5 180.0L804.3 172.0ZM805.7 172.0L807.5 176.3L809.3 172.0ZM808.7 172.0L810.5 175.5L812.3 172.0ZM810.7 172.0L812.5 176.5L814.3 172.0ZM815.7 172.0L817.5 180.1L819.3 172.0ZM823.7 172.0L825.5 179.7L827.3 172.0ZM827.7 172.0L829.5 177.0L831.3 172.0ZM833.7 172.0L835.5 175.8L837.3 172.0ZM836.7 172.0L838.5 177.8L840.3 172.0ZM842.7 172.0L844.5 178.1L846.3 172.0ZM859.7 172.0L861.5 180.7L863.3 172.0ZM863.7 172.0L865.5 175.1L867.3 172.0ZM865.7 172.0L867.5 179.3L869.3 172.0ZM870.7 172.0L872.5 181.0L874.3 172.0ZM876.7 172.0L878.5 179.9L880.3 172.0ZM881.7 172.0L883.5 181.0L885.3 172.0ZM890.7 172.0L892.5 178.6L894.3 172.0ZM899.7 172.0L901.5 176.6L903.3 172.0Z" fill="#0a2b29" opacity="0.85"/>
<path d="M504.75 431h1.5v-56.8h-1.5zM504.2 430.0L505.5 396.5L506.8 430.0ZM507.75 431h1.5v-10.7h-1.5zM509.75 431h1.5v-20.4h-1.5zM507.75 431h1.5v-10.8h-1.5zM513.75 431h1.5v-57.2h-1.5zM513.2 430.0L514.5 396.3L515.8 430.0ZM519.75 431h1.5v-9.5h-1.5zM520.75 431h1.5v-7.3h-1.5zM524.75 431h1.5v-33.7h-1.5zM524.2 430.0L525.5 410.4L526.8 430.0ZM533.75 431h1.5v-51.3h-1.5zM533.2 430.0L534.5 399.8L535.8 430.0ZM533.75 431h1.5v-4.0h-1.5zM537.75 431h1.5v-12.9h-1.5zM540.75 431h1.5v-3.8h-1.5zM542.75 431h1.5v-48.4h-1.5zM544.75 431h1.5v-27.8h-1.5zM545.75 431h1.5v-12.8h-1.5zM542.2 430.0L543.5 401.6L544.8 430.0ZM543.75 431h1.5v-3.4h-1.5zM551.75 431h1.5v-29.0h-1.5zM551.2 430.0L552.5 413.2L553.8 430.0ZM555.75 431h1.5v-9.0h-1.5zM562.75 431h1.5v-48.0h-1.5zM562.2 430.0L563.5 401.8L564.8 430.0ZM565.75 431h1.5v-7.8h-1.5zM566.75 431h1.5v-11.8h-1.5zM571.75 431h1.5v-65.0h-1.5zM569.75 431h1.5v-30.8h-1.5zM571.2 430.0L572.5 391.6L573.8 430.0ZM574.75 431h1.5v-11.7h-1.5zM580.75 431h1.5v-56.4h-1.5zM580.2 430.0L581.5 396.8L582.8 430.0ZM583.75 431h1.5v-18.4h-1.5zM585.75 431h1.5v-9.1h-1.5zM589.75 431h1.5v-18.0h-1.5zM587.75 431h1.5v-10.9h-1.5zM598.75 431h1.5v-55.7h-1.5zM600.75 431h1.5v-29.2h-1.5zM595.75 431h1.5v-15.2h-1.5zM598.2 430.0L599.5 397.2L600.8 430.0ZM604.75 431h1.5v-10.5h-1.5zM607.75 431h1.5v-9.9h-1.5zM618.75 431h1.5v-40.3h-1.5zM620.75 431h1.5v-22.4h-1.5zM618.2 430.0L619.5 406.4L620.8 430.0ZM618.75 431h1.5v-10.8h-1.5zM622.75 431h1.5v-20.1h-1.5zM620.75 431h1.5v-15.7h-1.5zM625.75 431h1.5v-14.4h-1.5zM625.75 431h1.5v-8.6h-1.5zM630.75 431h1.5v-12.6h-1.5zM635.75 431h1.5v-5.0h-1.5zM636.75 431h1.5v-26.2h-1.5zM636.2 430.0L637.5 414.9L638.8 430.0ZM641.75 431h1.5v-7.5h-1.5zM647.75 431h1.5v-27.5h-1.5zM649.75 431h1.5v-14.6h-1.5zM647.2 430.0L648.5 414.1L649.8 430.0ZM654.75 431h1.5v-7.0h-1.5zM655.75 431h1.5v-17.9h-1.5zM659.75 431h1.5v-22.8h-1.5zM664.75 431h1.5v-10.0h-1.5zM668.75 431h1.5v-19.1h-1.5zM670.75 431h1.5v-16.1h-1.5zM674.75 431h1.5v-37.8h-1.5zM674.2 430.0L675.5 407.9L676.8 430.0ZM674.75 431h1.5v-7.4h-1.5zM679.75 431h1.5v-33.2h-1.5zM679.2 430.0L680.5 410.7L681.8 430.0ZM683.75 431h1.5v-15.2h-1.5zM694.75 431h1.5v-33.0h-1.5zM694.2 430.0L695.5 410.8L696.8 430.0ZM703.75 431h1.5v-12.7h-1.5zM706.75 431h1.5v-12.3h-1.5zM710.75 431h1.5v-18.1h-1.5zM712.75 431h1.5v-14.6h-1.5zM711.75 431h1.5v-9.8h-1.5zM720.75 431h1.5v-8.8h-1.5zM726.75 431h1.5v-9.3h-1.5zM730.75 431h1.5v-27.8h-1.5zM730.2 430.0L731.5 413.9L732.8 430.0ZM732.75 431h1.5v-2.8h-1.5zM736.75 431h1.5v-5.6h-1.5zM736.75 431h1.5v-27.9h-1.5zM738.75 431h1.5v-14.0h-1.5zM736.2 430.0L737.5 413.8L738.8 430.0ZM741.75 431h1.5v-48.8h-1.5zM739.75 431h1.5v-31.9h-1.5zM741.2 430.0L742.5 401.3L743.8 430.0ZM744.75 431h1.5v-4.0h-1.5zM746.75 431h1.5v-9.0h-1.5zM750.75 431h1.5v-68.0h-1.5zM750.2 430.0L751.5 389.8L752.8 430.0ZM750.75 431h1.5v-5.4h-1.5zM757.75 431h1.5v-47.2h-1.5zM759.75 431h1.5v-29.2h-1.5zM757.2 430.0L758.5 402.3L759.8 430.0ZM766.75 431h1.5v-32.2h-1.5zM764.75 431h1.5v-15.6h-1.5zM766.2 430.0L767.5 411.3L768.8 430.0ZM767.75 431h1.5v-13.4h-1.5zM772.75 431h1.5v-6.8h-1.5zM777.75 431h1.5v-65.4h-1.5zM779.75 431h1.5v-52.1h-1.5zM777.2 430.0L778.5 391.3L779.8 430.0ZM782.75 431h1.5v-11.3h-1.5zM787.75 431h1.5v-25.2h-1.5zM785.75 431h1.5v-20.2h-1.5zM787.2 430.0L788.5 415.5L789.8 430.0ZM791.75 431h1.5v-15.1h-1.5zM793.75 431h1.5v-10.8h-1.5zM797.75 431h1.5v-18.3h-1.5zM799.75 431h1.5v-11.2h-1.5zM801.75 431h1.5v-33.2h-1.5zM799.75 431h1.5v-23.8h-1.5zM798.75 431h1.5v-13.7h-1.5zM801.2 430.0L802.5 410.7L803.8 430.0ZM805.75 431h1.5v-7.3h-1.5zM806.75 431h1.5v-18.6h-1.5zM804.75 431h1.5v-10.7h-1.5zM809.75 431h1.5v-7.4h-1.5zM811.75 431h1.5v-16.3h-1.5zM816.75 431h1.5v-28.4h-1.5zM816.2 430.0L817.5 413.5L818.8 430.0ZM824.75 431h1.5v-30.6h-1.5zM822.75 431h1.5v-19.2h-1.5zM824.2 430.0L825.5 412.2L826.8 430.0ZM827.75 431h1.5v-4.3h-1.5zM828.75 431h1.5v-14.4h-1.5zM833.75 431h1.5v-5.0h-1.5zM834.75 431h1.5v-12.9h-1.5zM837.75 431h1.5v-16.4h-1.5zM838.75 431h1.5v-8.6h-1.5zM843.75 431h1.5v-26.0h-1.5zM843.2 430.0L844.5 415.0L845.8 430.0ZM844.75 431h1.5v-7.3h-1.5zM853.75 431h1.5v-10.6h-1.5zM858.75 431h1.5v-4.5h-1.5zM860.75 431h1.5v-27.1h-1.5zM862.75 431h1.5v-16.8h-1.5zM860.2 430.0L861.5 414.3L862.8 430.0ZM864.75 431h1.5v-7.1h-1.5zM866.75 431h1.5v-6.1h-1.5zM866.75 431h1.5v-24.3h-1.5zM866.2 430.0L867.5 416.0L868.8 430.0ZM869.75 431h1.5v-10.2h-1.5zM871.75 431h1.5v-59.9h-1.5zM871.2 430.0L872.5 394.7L873.8 430.0ZM873.75 431h1.5v-8.8h-1.5zM877.75 431h1.5v-22.1h-1.5zM882.75 431h1.5v-34.9h-1.5zM882.2 430.0L883.5 409.7L884.8 430.0ZM886.75 431h1.5v-7.8h-1.5zM891.75 431h1.5v-13.7h-1.5zM900.75 431h1.5v-11.6h-1.5zM41.75 431h1.5v-71.0h-1.5zM43.75 431h1.5v-69.0h-1.5zM52.75 431h1.5v-64.0h-1.5zM59.75 431h1.5v-77.5h-1.5zM68.75 431h1.5v-69.0h-1.5zM21.75 431h1.5v-61.0h-1.5zM157.75 431h1.5v-61.0h-1.5zM195.75 431h1.5v-61.0h-1.5zM222.75 431h1.5v-76.3h-1.5zM242.75 431h1.5v-59.0h-1.5zM108.75 431h1.5v-58.0h-1.5z" fill="url(#g2)"/>
<path d="M503.7 430.0L505.5 421.0L507.3 430.0ZM508.7 430.0L510.5 424.2L512.3 430.0ZM512.7 430.0L514.5 421.0L516.3 430.0ZM523.7 430.0L525.5 421.0L527.3 430.0ZM532.7 430.0L534.5 421.0L536.3 430.0ZM536.7 430.0L538.5 426.4L540.3 430.0ZM541.7 430.0L543.5 421.0L545.3 430.0ZM550.7 430.0L552.5 421.6L554.3 430.0ZM561.7 430.0L563.5 421.0L565.3 430.0ZM565.7 430.0L567.5 426.7L569.3 430.0ZM570.7 430.0L572.5 421.0L574.3 430.0ZM573.7 430.0L575.5 426.8L577.3 430.0ZM579.7 430.0L581.5 421.0L583.3 430.0ZM582.7 430.0L584.5 424.8L586.3 430.0ZM588.7 430.0L590.5 424.9L592.3 430.0ZM597.7 430.0L599.5 421.0L601.3 430.0ZM617.7 430.0L619.5 421.0L621.3 430.0ZM621.7 430.0L623.5 424.3L625.3 430.0ZM624.7 430.0L626.5 426.0L628.3 430.0ZM629.7 430.0L631.5 426.5L633.3 430.0ZM635.7 430.0L637.5 422.4L639.3 430.0ZM646.7 430.0L648.5 422.1L650.3 430.0ZM654.7 430.0L656.5 424.9L658.3 430.0ZM658.7 430.0L660.5 423.5L662.3 430.0ZM667.7 430.0L669.5 424.6L671.3 430.0ZM673.7 430.0L675.5 421.0L677.3 430.0ZM678.7 430.0L680.5 421.0L682.3 430.0ZM682.7 430.0L684.5 425.7L686.3 430.0ZM693.7 430.0L695.5 421.0L697.3 430.0ZM702.7 430.0L704.5 426.5L706.3 430.0ZM705.7 430.0L707.5 426.6L709.3 430.0ZM709.7 430.0L711.5 424.9L713.3 430.0ZM729.7 430.0L731.5 422.0L733.3 430.0ZM735.7 430.0L737.5 421.9L739.3 430.0ZM740.7 430.0L742.5 421.0L744.3 430.0ZM749.7 430.0L751.5 421.0L753.3 430.0ZM756.7 430.0L758.5 421.0L760.3 430.0ZM765.7 430.0L767.5 421.0L769.3 430.0ZM766.7 430.0L768.5 426.3L770.3 430.0ZM776.7 430.0L778.5 421.0L780.3 430.0ZM781.7 430.0L783.5 426.9L785.3 430.0ZM786.7 430.0L788.5 422.7L790.3 430.0ZM790.7 430.0L792.5 425.8L794.3 430.0ZM796.7 430.0L798.5 424.8L800.3 430.0ZM800.7 430.0L802.5 421.0L804.3 430.0ZM805.7 430.0L807.5 424.7L809.3 430.0ZM810.7 430.0L812.5 425.4L814.3 430.0ZM815.7 430.0L817.5 421.8L819.3 430.0ZM823.7 430.0L825.5 421.1L827.3 430.0ZM827.7 430.0L829.5 426.0L831.3 430.0ZM833.7 430.0L835.5 426.4L837.3 430.0ZM836.7 430.0L838.5 425.4L840.3 430.0ZM842.7 430.0L844.5 422.5L846.3 430.0ZM859.7 430.0L861.5 422.2L863.3 430.0ZM865.7 430.0L867.5 423.0L869.3 430.0ZM870.7 430.0L872.5 421.0L874.3 430.0ZM876.7 430.0L878.5 423.7L880.3 430.0ZM881.7 430.0L883.5 421.0L885.3 430.0ZM890.7 430.0L892.5 426.2L894.3 430.0ZM899.7 430.0L901.5 426.8L903.3 430.0Z" fill="#0a2b29" opacity="0.85"/>
<path d="M504.75 438h1.5v54.9h-1.5zM506.75 438h1.5v30.4h-1.5zM501.75 438h1.5v21.2h-1.5zM504.2 439.0L505.5 471.3L506.8 439.0ZM507.75 438h1.5v6.6h-1.5zM509.75 438h1.5v16.9h-1.5zM513.75 438h1.5v31.5h-1.5zM513.2 439.0L514.5 457.3L515.8 439.0ZM519.75 438h1.5v4.1h-1.5zM520.75 438h1.5v9.5h-1.5zM524.75 438h1.5v20.8h-1.5zM533.75 438h1.5v57.4h-1.5zM535.75 438h1.5v28.5h-1.5zM530.75 438h1.5v12.3h-1.5zM533.2 439.0L534.5 472.8L535.8 439.0ZM533.75 438h1.5v4.4h-1.5zM537.75 438h1.5v8.0h-1.5zM540.75 438h1.5v8.2h-1.5zM542.75 438h1.5v50.1h-1.5zM542.2 439.0L543.5 468.5L544.8 439.0ZM543.75 438h1.5v6.0h-1.5zM551.75 438h1.5v36.4h-1.5zM553.75 438h1.5v18.7h-1.5zM551.2 439.0L552.5 460.3L553.8 439.0ZM555.75 438h1.5v12.8h-1.5zM562.75 438h1.5v53.1h-1.5zM562.2 439.0L563.5 470.3L564.8 439.0ZM565.75 438h1.5v3.4h-1.5zM566.75 438h1.5v4.9h-1.5zM571.75 438h1.5v30.5h-1.5zM571.2 439.0L572.5 456.7L573.8 439.0ZM574.75 438h1.5v8.5h-1.5zM580.75 438h1.5v50.0h-1.5zM580.2 439.0L581.5 468.4L582.8 439.0ZM583.75 438h1.5v20.8h-1.5zM589.75 438h1.5v19.0h-1.5zM598.75 438h1.5v27.4h-1.5zM600.75 438h1.5v20.6h-1.5zM598.2 439.0L599.5 454.8L600.8 439.0ZM604.75 438h1.5v7.2h-1.5zM607.75 438h1.5v9.9h-1.5zM618.75 438h1.5v46.1h-1.5zM618.2 439.0L619.5 466.1L620.8 439.0ZM618.75 438h1.5v5.7h-1.5zM622.75 438h1.5v24.6h-1.5zM622.2 439.0L623.5 453.1L624.8 439.0ZM625.75 438h1.5v14.9h-1.5zM625.75 438h1.5v5.6h-1.5zM630.75 438h1.5v9.5h-1.5zM635.75 438h1.5v11.7h-1.5zM636.75 438h1.5v17.7h-1.5zM634.75 438h1.5v11.8h-1.5zM641.75 438h1.5v10.4h-1.5zM647.75 438h1.5v26.5h-1.5zM647.2 439.0L648.5 454.3L649.8 439.0ZM654.75 438h1.5v9.3h-1.5zM655.75 438h1.5v10.3h-1.5zM659.75 438h1.5v16.7h-1.5zM661.75 438h1.5v8.4h-1.5zM664.75 438h1.5v12.2h-1.5zM668.75 438h1.5v10.0h-1.5zM674.75 438h1.5v16.8h-1.5zM672.75 438h1.5v13.0h-1.5zM674.75 438h1.5v5.4h-1.5zM679.75 438h1.5v21.0h-1.5zM681.75 438h1.5v17.9h-1.5zM683.75 438h1.5v10.1h-1.5zM694.75 438h1.5v24.9h-1.5zM694.2 439.0L695.5 453.3L696.8 439.0ZM703.75 438h1.5v9.2h-1.5zM706.75 438h1.5v6.2h-1.5zM710.75 438h1.5v9.9h-1.5zM711.75 438h1.5v7.4h-1.5zM720.75 438h1.5v12.4h-1.5zM726.75 438h1.5v9.1h-1.5zM730.75 438h1.5v32.9h-1.5zM730.2 439.0L731.5 458.2L732.8 439.0ZM732.75 438h1.5v5.1h-1.5zM736.75 438h1.5v4.0h-1.5zM736.75 438h1.5v18.0h-1.5zM738.75 438h1.5v14.8h-1.5zM741.75 438h1.5v27.9h-1.5zM743.75 438h1.5v23.7h-1.5zM741.2 439.0L742.5 455.1L743.8 439.0ZM744.75 438h1.5v6.8h-1.5zM746.75 438h1.5v9.1h-1.5zM750.75 438h1.5v52.9h-1.5zM750.2 439.0L751.5 470.1L752.8 439.0ZM750.75 438h1.5v6.2h-1.5zM757.75 438h1.5v45.4h-1.5zM759.75 438h1.5v29.2h-1.5zM761.75 438h1.5v18.2h-1.5zM757.2 439.0L758.5 465.6L759.8 439.0ZM766.75 438h1.5v24.8h-1.5zM766.2 439.0L767.5 453.3L768.8 439.0ZM767.75 438h1.5v9.2h-1.5zM772.75 438h1.5v4.1h-1.5zM777.75 438h1.5v40.2h-1.5zM777.2 439.0L778.5 462.5L779.8 439.0ZM782.75 438h1.5v8.3h-1.5zM787.75 438h1.5v17.8h-1.5zM785.75 438h1.5v14.6h-1.5zM791.75 438h1.5v8.1h-1.5zM797.75 438h1.5v11.6h-1.5zM801.75 438h1.5v27.9h-1.5zM803.75 438h1.5v23.7h-1.5zM801.2 439.0L802.5 455.1L803.8 439.0ZM805.75 438h1.5v9.4h-1.5zM806.75 438h1.5v11.3h-1.5zM809.75 438h1.5v13.7h-1.5zM811.75 438h1.5v12.4h-1.5zM816.75 438h1.5v18.7h-1.5zM818.75 438h1.5v15.0h-1.5zM824.75 438h1.5v18.8h-1.5zM827.75 438h1.5v3.6h-1.5zM828.75 438h1.5v8.4h-1.5zM833.75 438h1.5v5.1h-1.5zM834.75 438h1.5v14.5h-1.5zM837.75 438h1.5v16.3h-1.5zM839.75 438h1.5v9.3h-1.5zM838.75 438h1.5v6.1h-1.5zM843.75 438h1.5v15.5h-1.5zM844.75 438h1.5v5.5h-1.5zM853.75 438h1.5v14.7h-1.5zM858.75 438h1.5v5.0h-1.5zM860.75 438h1.5v25.4h-1.5zM860.2 439.0L861.5 453.6L862.8 439.0ZM864.75 438h1.5v9.7h-1.5zM866.75 438h1.5v6.5h-1.5zM866.75 438h1.5v16.5h-1.5zM869.75 438h1.5v8.6h-1.5zM871.75 438h1.5v28.2h-1.5zM869.75 438h1.5v19.2h-1.5zM871.2 439.0L872.5 455.3L873.8 439.0ZM873.75 438h1.5v8.3h-1.5zM877.75 438h1.5v16.7h-1.5zM879.75 438h1.5v11.6h-1.5zM882.75 438h1.5v40.7h-1.5zM884.75 438h1.5v27.6h-1.5zM882.2 439.0L883.5 462.8L884.8 439.0ZM886.75 438h1.5v3.4h-1.5zM891.75 438h1.5v12.6h-1.5zM900.75 438h1.5v13.2h-1.5z" fill="url(#g3)"/>
<path d="M503.7 439.0L505.5 448.0L507.3 439.0ZM508.7 439.0L510.5 443.8L512.3 439.0ZM512.7 439.0L514.5 448.0L516.3 439.0ZM523.7 439.0L525.5 445.0L527.3 439.0ZM532.7 439.0L534.5 448.0L536.3 439.0ZM541.7 439.0L543.5 448.0L545.3 439.0ZM550.7 439.0L552.5 448.0L554.3 439.0ZM554.7 439.0L556.5 442.5L558.3 439.0ZM561.7 439.0L563.5 448.0L565.3 439.0ZM570.7 439.0L572.5 447.9L574.3 439.0ZM579.7 439.0L581.5 448.0L583.3 439.0ZM582.7 439.0L584.5 444.9L586.3 439.0ZM588.7 439.0L590.5 444.4L592.3 439.0ZM597.7 439.0L599.5 446.9L601.3 439.0ZM617.7 439.0L619.5 448.0L621.3 439.0ZM621.7 439.0L623.5 446.1L625.3 439.0ZM624.7 439.0L626.5 443.2L628.3 439.0ZM634.7 439.0L636.5 442.2L638.3 439.0ZM635.7 439.0L637.5 444.0L639.3 439.0ZM646.7 439.0L648.5 446.6L650.3 439.0ZM658.7 439.0L660.5 443.7L662.3 439.0ZM663.7 439.0L665.5 442.3L667.3 439.0ZM673.7 439.0L675.5 443.7L677.3 439.0ZM678.7 439.0L680.5 445.0L682.3 439.0ZM693.7 439.0L695.5 446.2L697.3 439.0ZM719.7 439.0L721.5 442.4L723.3 439.0ZM729.7 439.0L731.5 448.0L733.3 439.0ZM735.7 439.0L737.5 444.1L739.3 439.0ZM740.7 439.0L742.5 447.1L744.3 439.0ZM749.7 439.0L751.5 448.0L753.3 439.0ZM756.7 439.0L758.5 448.0L760.3 439.0ZM765.7 439.0L767.5 446.1L769.3 439.0ZM776.7 439.0L778.5 448.0L780.3 439.0ZM786.7 439.0L788.5 444.0L790.3 439.0ZM796.7 439.0L798.5 442.2L800.3 439.0ZM800.7 439.0L802.5 447.1L804.3 439.0ZM805.7 439.0L807.5 442.1L809.3 439.0ZM808.7 439.0L810.5 442.8L812.3 439.0ZM810.7 439.0L812.5 442.4L814.3 439.0ZM815.7 439.0L817.5 444.3L819.3 439.0ZM823.7 439.0L825.5 444.3L827.3 439.0ZM833.7 439.0L835.5 443.1L837.3 439.0ZM836.7 439.0L838.5 443.6L840.3 439.0ZM842.7 439.0L844.5 443.3L846.3 439.0ZM852.7 439.0L854.5 443.1L856.3 439.0ZM859.7 439.0L861.5 446.3L863.3 439.0ZM865.7 439.0L867.5 443.6L869.3 439.0ZM870.7 439.0L872.5 447.2L874.3 439.0ZM876.7 439.0L878.5 443.7L880.3 439.0ZM881.7 439.0L883.5 448.0L885.3 439.0ZM890.7 439.0L892.5 442.5L894.3 439.0ZM899.7 439.0L901.5 442.7L903.3 439.0Z" fill="#0a2b29" opacity="0.85"/>
<path d="M504.75 698h1.5v-52.6h-1.5zM504.2 697.0L505.5 666.0L506.8 697.0ZM507.75 698h1.5v-5.0h-1.5zM509.75 698h1.5v-22.2h-1.5zM507.75 698h1.5v-19.0h-1.5zM513.75 698h1.5v-36.8h-1.5zM515.75 698h1.5v-23.0h-1.5zM517.75 698h1.5v-12.4h-1.5zM513.2 697.0L514.5 675.5L515.8 697.0ZM519.75 698h1.5v-4.6h-1.5zM520.75 698h1.5v-6.8h-1.5zM524.75 698h1.5v-40.8h-1.5zM524.2 697.0L525.5 673.1L526.8 697.0ZM533.75 698h1.5v-60.7h-1.5zM535.75 698h1.5v-49.5h-1.5zM536.75 698h1.5v-16.7h-1.5zM533.2 697.0L534.5 661.2L535.8 697.0ZM533.75 698h1.5v-3.8h-1.5zM537.75 698h1.5v-14.2h-1.5zM540.75 698h1.5v-7.2h-1.5zM542.75 698h1.5v-44.3h-1.5zM544.75 698h1.5v-31.3h-1.5zM546.75 698h1.5v-11.7h-1.5zM542.2 697.0L543.5 671.0L544.8 697.0ZM543.75 698h1.5v-7.3h-1.5zM551.75 698h1.5v-42.6h-1.5zM551.2 697.0L552.5 672.1L553.8 697.0ZM555.75 698h1.5v-8.0h-1.5zM562.75 698h1.5v-38.9h-1.5zM564.75 698h1.5v-24.8h-1.5zM562.2 697.0L563.5 674.3L564.8 697.0ZM565.75 698h1.5v-6.3h-1.5zM566.75 698h1.5v-9.9h-1.5zM571.75 698h1.5v-63.3h-1.5zM569.75 698h1.5v-31.9h-1.5zM571.2 697.0L572.5 659.6L573.8 697.0ZM574.75 698h1.5v-5.7h-1.5zM580.75 698h1.5v-35.6h-1.5zM580.2 697.0L581.5 676.2L582.8 697.0ZM583.75 698h1.5v-22.7h-1.5zM585.75 698h1.5v-16.3h-1.5zM589.75 698h1.5v-32.3h-1.5zM589.2 697.0L590.5 678.2L591.8 697.0ZM598.75 698h1.5v-37.2h-1.5zM600.75 698h1.5v-31.3h-1.5zM598.2 697.0L599.5 675.3L600.8 697.0ZM604.75 698h1.5v-7.1h-1.5zM607.75 698h1.5v-18.4h-1.5zM609.75 698h1.5v-11.6h-1.5zM618.75 698h1.5v-57.4h-1.5zM616.75 698h1.5v-39.6h-1.5zM618.2 697.0L619.5 663.1L620.8 697.0ZM618.75 698h1.5v-5.9h-1.5zM622.75 698h1.5v-20.7h-1.5zM624.75 698h1.5v-12.7h-1.5zM625.75 698h1.5v-8.6h-1.5zM625.75 698h1.5v-8.3h-1.5zM630.75 698h1.5v-5.7h-1.5zM635.75 698h1.5v-11.5h-1.5zM636.75 698h1.5v-23.7h-1.5zM636.2 697.0L637.5 683.4L638.8 697.0ZM641.75 698h1.5v-17.3h-1.5zM639.75 698h1.5v-13.6h-1.5zM647.75 698h1.5v-25.8h-1.5zM647.2 697.0L648.5 682.1L649.8 697.0ZM654.75 698h1.5v-4.0h-1.5zM655.75 698h1.5v-16.4h-1.5zM659.75 698h1.5v-28.5h-1.5zM661.75 698h1.5v-22.4h-1.5zM662.75 698h1.5v-10.2h-1.5zM659.2 697.0L660.5 680.5L661.8 697.0ZM664.75 698h1.5v-14.1h-1.5zM668.75 698h1.5v-23.9h-1.5zM668.2 697.0L669.5 683.3L670.8 697.0ZM674.75 698h1.5v-40.8h-1.5zM674.2 697.0L675.5 673.1L676.8 697.0ZM674.75 698h1.5v-6.8h-1.5zM679.75 698h1.5v-19.7h-1.5zM677.75 698h1.5v-13.8h-1.5zM683.75 698h1.5v-15.4h-1.5zM685.75 698h1.5v-9.1h-1.5zM694.75 698h1.5v-27.1h-1.5zM696.75 698h1.5v-18.8h-1.5zM697.75 698h1.5v-10.5h-1.5zM694.2 697.0L695.5 681.4L696.8 697.0ZM703.75 698h1.5v-16.7h-1.5zM706.75 698h1.5v-11.3h-1.5zM710.75 698h1.5v-13.9h-1.5zM711.75 698h1.5v-8.0h-1.5zM720.75 698h1.5v-11.1h-1.5zM726.75 698h1.5v-13.7h-1.5zM730.75 698h1.5v-36.7h-1.5zM732.75 698h1.5v-30.5h-1.5zM730.2 697.0L731.5 675.6L732.8 697.0ZM732.75 698h1.5v-6.1h-1.5zM736.75 698h1.5v-9.0h-1.5zM736.75 698h1.5v-33.3h-1.5zM736.2 697.0L737.5 677.6L738.8 697.0ZM741.75 698h1.5v-37.1h-1.5zM741.2 697.0L742.5 675.4L743.8 697.0ZM744.75 698h1.5v-4.2h-1.5zM746.75 698h1.5v-9.9h-1.5zM750.75 698h1.5v-38.4h-1.5zM750.2 697.0L751.5 674.6L752.8 697.0ZM750.75 698h1.5v-5.0h-1.5zM757.75 698h1.5v-47.5h-1.5zM755.75 698h1.5v-39.7h-1.5zM760.75 698h1.5v-15.8h-1.5zM757.2 697.0L758.5 669.1L759.8 697.0ZM766.75 698h1.5v-24.3h-1.5zM768.75 698h1.5v-15.3h-1.5zM766.2 697.0L767.5 683.0L768.8 697.0ZM767.75 698h1.5v-10.5h-1.5zM772.75 698h1.5v-7.2h-1.5zM777.75 698h1.5v-70.9h-1.5zM775.75 698h1.5v-39.2h-1.5zM777.2 697.0L778.5 655.0L779.8 697.0ZM782.75 698h1.5v-16.5h-1.5zM787.75 698h1.5v-36.2h-1.5zM787.2 697.0L788.5 675.9L789.8 697.0ZM791.75 698h1.5v-15.8h-1.5zM793.75 698h1.5v-10.5h-1.5zM797.75 698h1.5v-13.3h-1.5zM801.75 698h1.5v-32.3h-1.5zM801.2 697.0L802.5 678.2L803.8 697.0ZM805.75 698h1.5v-10.8h-1.5zM806.75 698h1.5v-11.6h-1.5zM809.75 698h1.5v-8.5h-1.5zM811.75 698h1.5v-13.5h-1.5zM816.75 698h1.5v-34.1h-1.5zM818.75 698h1.5v-19.9h-1.5zM816.2 697.0L817.5 677.1L818.8 697.0ZM824.75 698h1.5v-21.5h-1.5zM822.75 698h1.5v-18.0h-1.5zM827.75 698h1.5v-5.0h-1.5zM828.75 698h1.5v-16.0h-1.5zM826.75 698h1.5v-10.2h-1.5zM833.75 698h1.5v-7.4h-1.5zM834.75 698h1.5v-12.6h-1.5zM837.75 698h1.5v-14.1h-1.5zM838.75 698h1.5v-3.9h-1.5zM843.75 698h1.5v-14.1h-1.5zM844.75 698h1.5v-7.9h-1.5zM853.75 698h1.5v-17.2h-1.5zM851.75 698h1.5v-13.6h-1.5zM858.75 698h1.5v-7.1h-1.5zM860.75 698h1.5v-26.5h-1.5zM862.75 698h1.5v-18.6h-1.5zM857.75 698h1.5v-12.3h-1.5zM860.2 697.0L861.5 681.7L862.8 697.0ZM864.75 698h1.5v-7.2h-1.5zM866.75 698h1.5v-5.9h-1.5zM866.75 698h1.5v-26.8h-1.5zM866.2 697.0L867.5 681.5L868.8 697.0ZM869.75 698h1.5v-10.0h-1.5zM871.75 698h1.5v-57.1h-1.5zM873.75 698h1.5v-36.7h-1.5zM871.2 697.0L872.5 663.4L873.8 697.0ZM873.75 698h1.5v-9.1h-1.5zM877.75 698h1.5v-19.8h-1.5zM875.75 698h1.5v-11.0h-1.5zM882.75 698h1.5v-33.8h-1.5zM882.2 697.0L883.5 677.3L884.8 697.0ZM886.75 698h1.5v-4.7h-1.5zM891.75 698h1.5v-21.6h-1.5zM889.75 698h1.5v-17.0h-1.5zM900.75 698h1.5v-10.6h-1.5z" fill="url(#g4)"/>
<path d="M503.7 697.0L505.5 688.0L507.3 697.0ZM508.7 697.0L510.5 690.6L512.3 697.0ZM512.7 697.0L514.5 688.0L516.3 697.0ZM523.7 697.0L525.5 688.0L527.3 697.0ZM532.7 697.0L534.5 688.0L536.3 697.0ZM536.7 697.0L538.5 693.0L540.3 697.0ZM541.7 697.0L543.5 688.0L545.3 697.0ZM550.7 697.0L552.5 688.0L554.3 697.0ZM561.7 697.0L563.5 688.0L565.3 697.0ZM570.7 697.0L572.5 688.0L574.3 697.0ZM579.7 697.0L581.5 688.0L583.3 697.0ZM582.7 697.0L584.5 690.5L586.3 697.0ZM588.7 697.0L590.5 688.0L592.3 697.0ZM597.7 697.0L599.5 688.0L601.3 697.0ZM606.7 697.0L608.5 691.8L610.3 697.0ZM617.7 697.0L619.5 688.0L621.3 697.0ZM621.7 697.0L623.5 691.1L625.3 697.0ZM634.7 697.0L636.5 693.8L638.3 697.0ZM635.7 697.0L637.5 690.2L639.3 697.0ZM640.7 697.0L642.5 692.1L644.3 697.0ZM646.7 697.0L648.5 689.6L650.3 697.0ZM654.7 697.0L656.5 692.4L658.3 697.0ZM658.7 697.0L660.5 688.7L662.3 697.0ZM663.7 697.0L665.5 693.1L667.3 697.0ZM667.7 697.0L669.5 690.1L671.3 697.0ZM673.7 697.0L675.5 688.0L677.3 697.0ZM678.7 697.0L680.5 691.4L682.3 697.0ZM682.7 697.0L684.5 692.7L686.3 697.0ZM693.7 697.0L695.5 689.2L697.3 697.0ZM702.7 697.0L704.5 692.3L706.3 697.0ZM705.7 697.0L707.5 693.9L709.3 697.0ZM709.7 697.0L711.5 693.1L713.3 697.0ZM719.7 697.0L721.5 694.0L723.3 697.0ZM725.7 697.0L727.5 693.2L729.3 697.0ZM729.7 697.0L731.5 688.0L733.3 697.0ZM735.7 697.0L737.5 688.0L739.3 697.0ZM740.7 697.0L742.5 688.0L744.3 697.0ZM749.7 697.0L751.5 688.0L753.3 697.0ZM756.7 697.0L758.5 688.0L760.3 697.0ZM765.7 697.0L767.5 690.0L769.3 697.0ZM776.7 697.0L778.5 688.0L780.3 697.0ZM781.7 697.0L783.5 692.4L785.3 697.0ZM786.7 697.0L788.5 688.0L790.3 697.0ZM790.7 697.0L792.5 692.6L794.3 697.0ZM796.7 697.0L798.5 693.3L800.3 697.0ZM800.7 697.0L802.5 688.0L804.3 697.0ZM805.7 697.0L807.5 693.8L809.3 697.0ZM810.7 697.0L812.5 693.2L814.3 697.0ZM815.7 697.0L817.5 688.0L819.3 697.0ZM823.7 697.0L825.5 690.9L827.3 697.0ZM827.7 697.0L829.5 692.5L831.3 697.0ZM833.7 697.0L835.5 693.5L837.3 697.0ZM836.7 697.0L838.5 693.1L840.3 697.0ZM842.7 697.0L844.5 693.1L846.3 697.0ZM852.7 697.0L854.5 692.1L856.3 697.0ZM859.7 697.0L861.5 689.3L863.3 697.0ZM865.7 697.0L867.5 689.3L869.3 697.0ZM870.7 697.0L872.5 688.0L874.3 697.0ZM876.7 697.0L878.5 691.4L880.3 697.0ZM881.7 697.0L883.5 688.0L885.3 697.0ZM890.7 697.0L892.5 690.8L894.3 697.0Z" fill="#0a2b29" opacity="0.85"/>
<path d="M607.8 172.0L610.0 243.0L612.2 172.0ZM606.8 172.0L610.0 207.5L613.2 172.0ZM612.75 171h1.5v52.1h-1.5zM606.75 171h1.5v29.4h-1.5zM607.8 430.0L610.0 349.0L612.2 430.0ZM606.8 430.0L610.0 389.5L613.2 430.0ZM612.75 431h1.5v-59.3h-1.5zM606.75 431h1.5v-33.4h-1.5zM607.8 439.0L610.0 505.0L612.2 439.0ZM606.8 439.0L610.0 472.0L613.2 439.0ZM612.75 438h1.5v48.5h-1.5zM606.75 438h1.5v27.4h-1.5zM607.8 697.0L610.0 592.0L612.2 697.0ZM606.8 697.0L610.0 644.5L613.2 697.0ZM612.75 698h1.5v-76.6h-1.5zM606.75 698h1.5v-43.0h-1.5z" fill="#0a2b29"/>
<path d="M14.4 132.0L15.2 136.5L16.0 132.0ZM14.4 151.0L15.2 147.3L16.0 151.0ZM14.4 151.0L15.2 154.7L16.0 151.0ZM14.4 167.5L15.2 163.0L16.0 167.5ZM16.8 132.0L17.6 136.4L18.4 132.0ZM16.8 151.0L17.6 147.4L18.4 151.0ZM16.8 151.0L17.6 154.6L18.4 151.0ZM16.8 167.5L17.6 163.1L18.4 167.5ZM19.2 132.0L20.0 137.1L20.8 132.0ZM19.2 151.0L20.0 146.8L20.8 151.0ZM19.2 151.0L20.0 155.2L20.8 151.0ZM19.2 167.5L20.0 162.4L20.8 167.5ZM21.7 132.0L22.5 136.5L23.3 132.0ZM21.7 151.0L22.5 147.3L23.3 151.0ZM21.7 151.0L22.5 154.7L23.3 151.0ZM21.7 167.5L22.5 163.0L23.3 167.5ZM24.1 132.0L24.9 137.2L25.7 132.0ZM24.1 151.0L24.9 146.7L25.7 151.0ZM24.1 151.0L24.9 155.3L25.7 151.0ZM24.1 167.5L24.9 162.3L25.7 167.5ZM26.5 132.0L27.3 137.1L28.1 132.0ZM26.5 151.0L27.3 146.8L28.1 151.0ZM26.5 151.0L27.3 155.2L28.1 151.0ZM26.5 167.5L27.3 162.4L28.1 167.5ZM28.9 132.0L29.7 136.8L30.5 132.0ZM28.9 151.0L29.7 147.1L30.5 151.0ZM28.9 151.0L29.7 154.9L30.5 151.0ZM28.9 167.5L29.7 162.7L30.5 167.5ZM31.3 132.0L32.1 137.5L32.9 132.0ZM31.3 151.0L32.1 146.4L32.9 151.0ZM31.3 151.0L32.1 155.6L32.9 151.0ZM31.3 167.5L32.1 162.0L32.9 167.5ZM33.8 132.0L34.6 137.1L35.4 132.0ZM33.8 151.0L34.6 146.8L35.4 151.0ZM33.8 151.0L34.6 155.2L35.4 151.0ZM33.8 167.5L34.6 162.4L35.4 167.5ZM36.2 132.0L37.0 137.7L37.8 132.0ZM36.2 151.0L37.0 146.2L37.8 151.0ZM36.2 151.0L37.0 155.8L37.8 151.0ZM36.2 167.5L37.0 161.8L37.8 167.5ZM38.6 132.0L39.4 137.3L40.2 132.0ZM38.6 151.0L39.4 146.7L40.2 151.0ZM38.6 151.0L39.4 155.3L40.2 151.0ZM38.6 167.5L39.4 162.2L40.2 167.5ZM41.0 132.0L41.8 137.3L42.6 132.0ZM41.0 151.0L41.8 146.6L42.6 151.0ZM41.0 151.0L41.8 155.4L42.6 151.0ZM41.0 167.5L41.8 162.2L42.6 167.5ZM43.4 132.0L44.2 137.7L45.0 132.0ZM43.4 151.0L44.2 146.3L45.0 151.0ZM43.4 151.0L44.2 155.7L45.0 151.0ZM43.4 167.5L44.2 161.8L45.0 167.5ZM45.9 132.0L46.7 137.8L47.5 132.0ZM45.9 151.0L46.7 146.2L47.5 151.0ZM45.9 151.0L46.7 155.8L47.5 151.0ZM45.9 167.5L46.7 161.7L47.5 167.5ZM48.3 132.0L49.1 136.6L49.9 132.0ZM48.3 151.0L49.1 147.3L49.9 151.0ZM48.3 151.0L49.1 154.7L49.9 151.0ZM48.3 167.5L49.1 162.9L49.9 167.5ZM50.7 132.0L51.5 136.5L52.3 132.0ZM50.7 151.0L51.5 147.4L52.3 151.0ZM50.7 151.0L51.5 154.6L52.3 151.0ZM50.7 167.5L51.5 163.0L52.3 167.5ZM53.1 132.0L53.9 136.7L54.7 132.0ZM53.1 151.0L53.9 147.2L54.7 151.0ZM53.1 151.0L53.9 154.8L54.7 151.0ZM53.1 167.5L53.9 162.8L54.7 167.5ZM55.5 132.0L56.3 136.7L57.1 132.0ZM55.5 151.0L56.3 147.1L57.1 151.0ZM55.5 151.0L56.3 154.9L57.1 151.0ZM55.5 167.5L56.3 162.8L57.1 167.5ZM58.0 132.0L58.8 136.1L59.6 132.0ZM58.0 151.0L58.8 147.7L59.6 151.0ZM58.0 151.0L58.8 154.3L59.6 151.0ZM58.0 167.5L58.8 163.4L59.6 167.5ZM60.4 132.0L61.2 135.9L62.0 132.0ZM60.4 151.0L61.2 147.9L62.0 151.0ZM60.4 151.0L61.2 154.1L62.0 151.0ZM60.4 167.5L61.2 163.6L62.0 167.5ZM62.8 132.0L63.6 136.7L64.4 132.0ZM62.8 151.0L63.6 147.2L64.4 151.0ZM62.8 151.0L63.6 154.8L64.4 151.0ZM62.8 167.5L63.6 162.8L64.4 167.5ZM65.2 132.0L66.0 136.0L66.8 132.0ZM65.2 151.0L66.0 147.8L66.8 151.0ZM65.2 151.0L66.0 154.2L66.8 151.0ZM65.2 167.5L66.0 163.5L66.8 167.5ZM67.6 132.0L68.4 136.3L69.2 132.0ZM67.6 151.0L68.4 147.5L69.2 151.0ZM67.6 151.0L68.4 154.5L69.2 151.0ZM67.6 167.5L68.4 163.2L69.2 167.5ZM70.1 132.0L70.9 135.4L71.7 132.0ZM70.1 151.0L70.9 148.4L71.7 151.0ZM70.1 151.0L70.9 153.6L71.7 151.0ZM70.1 167.5L70.9 164.1L71.7 167.5ZM74.2 132.0L75.0 135.0L75.8 132.0ZM74.2 151.0L75.0 148.7L75.8 151.0ZM74.2 151.0L75.0 153.3L75.8 151.0ZM74.2 167.5L75.0 164.5L75.8 167.5ZM76.9 132.0L77.7 133.7L78.5 132.0ZM76.9 151.0L77.7 149.9L78.5 151.0ZM76.9 151.0L77.7 152.1L78.5 151.0ZM76.9 167.5L77.7 165.8L78.5 167.5ZM81.2 132.0L82.0 135.4L82.8 132.0ZM81.2 151.0L82.0 148.3L82.8 151.0ZM81.2 151.0L82.0 153.7L82.8 151.0ZM81.2 167.5L82.0 164.1L82.8 167.5ZM83.2 132.0L84.0 133.5L84.8 132.0ZM83.2 151.0L84.0 150.1L84.8 151.0ZM83.2 151.0L84.0 151.9L84.8 151.0ZM83.2 167.5L84.0 166.0L84.8 167.5ZM87.0 132.0L87.8 133.3L88.6 132.0ZM87.0 151.0L87.8 150.2L88.6 151.0ZM87.0 151.0L87.8 151.8L88.6 151.0ZM87.0 167.5L87.8 166.2L88.6 167.5ZM87.6 132.0L88.4 133.4L89.2 132.0ZM87.6 151.0L88.4 150.2L89.2 151.0ZM87.6 151.0L88.4 151.8L89.2 151.0ZM87.6 167.5L88.4 166.1L89.2 167.5ZM92.2 132.0L93.0 136.1L93.8 132.0ZM92.2 151.0L93.0 147.7L93.8 151.0ZM92.2 151.0L93.0 154.3L93.8 151.0ZM92.2 167.5L93.0 163.4L93.8 167.5ZM97.4 132.0L98.2 134.1L99.0 132.0ZM97.4 151.0L98.2 149.5L99.0 151.0ZM97.4 151.0L98.2 152.5L99.0 151.0ZM97.4 167.5L98.2 165.4L99.0 167.5ZM102.2 132.0L103.0 134.8L103.8 132.0ZM102.2 151.0L103.0 148.8L103.8 151.0ZM102.2 151.0L103.0 153.2L103.8 151.0ZM102.2 167.5L103.0 164.7L103.8 167.5ZM106.3 132.0L107.1 133.4L107.9 132.0ZM106.3 151.0L107.1 150.1L107.9 151.0ZM106.3 151.0L107.1 151.9L107.9 151.0ZM106.3 167.5L107.1 166.1L107.9 167.5ZM110.2 132.0L111.0 135.8L111.8 132.0ZM110.2 151.0L111.0 147.9L111.8 151.0ZM110.2 151.0L111.0 154.1L111.8 151.0ZM110.2 167.5L111.0 163.7L111.8 167.5ZM115.1 132.0L115.9 134.2L116.7 132.0ZM115.1 151.0L115.9 149.5L116.7 151.0ZM115.1 151.0L115.9 152.5L116.7 151.0ZM115.1 167.5L115.9 165.3L116.7 167.5ZM121.2 132.0L122.0 135.9L122.8 132.0ZM121.2 151.0L122.0 147.8L122.8 151.0ZM121.2 151.0L122.0 154.2L122.8 151.0ZM121.2 167.5L122.0 163.6L122.8 167.5ZM127.3 132.0L128.1 134.0L128.9 132.0ZM127.3 151.0L128.1 149.6L128.9 151.0ZM127.3 151.0L128.1 152.4L128.9 151.0ZM127.3 167.5L128.1 165.5L128.9 167.5ZM134.2 132.0L135.0 134.6L135.8 132.0ZM134.2 151.0L135.0 149.1L135.8 151.0ZM134.2 151.0L135.0 152.9L135.8 151.0ZM134.2 167.5L135.0 164.9L135.8 167.5ZM139.2 132.0L140.0 134.2L140.8 132.0ZM139.2 151.0L140.0 149.4L140.8 151.0ZM139.2 151.0L140.0 152.6L140.8 151.0ZM139.2 167.5L140.0 165.3L140.8 167.5ZM143.3 132.0L144.1 134.3L144.9 132.0ZM143.3 151.0L144.1 149.3L144.9 151.0ZM143.3 151.0L144.1 152.7L144.9 151.0ZM143.3 167.5L144.1 165.2L144.9 167.5ZM148.2 132.0L149.0 135.7L149.8 132.0ZM148.2 151.0L149.0 148.1L149.8 151.0ZM148.2 151.0L149.0 153.9L149.8 151.0ZM148.2 167.5L149.0 163.8L149.8 167.5ZM157.2 132.0L158.0 137.2L158.8 132.0ZM157.2 151.0L158.0 146.8L158.8 151.0ZM157.2 151.0L158.0 155.2L158.8 151.0ZM157.2 167.5L158.0 162.3L158.8 167.5ZM162.3 132.0L163.1 134.0L163.9 132.0ZM162.3 151.0L163.1 149.6L163.9 151.0ZM162.3 151.0L163.1 152.4L163.9 151.0ZM162.3 167.5L163.1 165.5L163.9 167.5ZM167.2 132.0L168.0 135.1L168.8 132.0ZM167.2 151.0L168.0 148.6L168.8 151.0ZM167.2 151.0L168.0 153.4L168.8 151.0ZM167.2 167.5L168.0 164.4L168.8 167.5ZM177.2 132.0L178.0 134.6L178.8 132.0ZM177.2 151.0L178.0 149.1L178.8 151.0ZM177.2 151.0L178.0 152.9L178.8 151.0ZM177.2 167.5L178.0 164.9L178.8 167.5ZM185.2 132.0L186.0 135.9L186.8 132.0ZM185.2 151.0L186.0 147.8L186.8 151.0ZM185.2 151.0L186.0 154.2L186.8 151.0ZM185.2 167.5L186.0 163.6L186.8 167.5ZM186.8 132.0L187.6 133.2L188.4 132.0ZM186.8 151.0L187.6 150.3L188.4 151.0ZM186.8 151.0L187.6 151.7L188.4 151.0ZM186.8 167.5L187.6 166.3L188.4 167.5ZM191.2 132.0L192.0 133.5L192.8 132.0ZM191.2 151.0L192.0 150.1L192.8 151.0ZM191.2 151.0L192.0 151.9L192.8 151.0ZM191.2 167.5L192.0 166.0L192.8 167.5ZM191.7 132.0L192.5 133.5L193.3 132.0ZM191.7 151.0L192.5 150.1L193.3 151.0ZM191.7 151.0L192.5 151.9L193.3 151.0ZM191.7 167.5L192.5 166.0L193.3 167.5ZM195.2 132.0L196.0 135.7L196.8 132.0ZM195.2 151.0L196.0 148.1L196.8 151.0ZM195.2 151.0L196.0 153.9L196.8 151.0ZM195.2 167.5L196.0 163.8L196.8 167.5ZM198.6 132.0L199.4 133.5L200.2 132.0ZM198.6 151.0L199.4 150.1L200.2 151.0ZM198.6 151.0L199.4 151.9L200.2 151.0ZM198.6 167.5L199.4 166.0L200.2 167.5ZM200.2 132.0L201.0 133.5L201.8 132.0ZM200.2 151.0L201.0 150.0L201.8 151.0ZM200.2 151.0L201.0 152.0L201.8 151.0ZM200.2 167.5L201.0 166.0L201.8 167.5ZM204.2 132.0L205.0 134.9L205.8 132.0ZM204.2 151.0L205.0 148.8L205.8 151.0ZM204.2 151.0L205.0 153.2L205.8 151.0ZM204.2 167.5L205.0 164.6L205.8 167.5ZM207.8 132.0L208.6 134.2L209.4 132.0ZM207.8 151.0L208.6 149.5L209.4 151.0ZM207.8 151.0L208.6 152.5L209.4 151.0ZM207.8 167.5L208.6 165.3L209.4 167.5ZM213.2 132.0L214.0 136.2L214.8 132.0ZM213.2 151.0L214.0 147.6L214.8 151.0ZM213.2 151.0L214.0 154.4L214.8 151.0ZM213.2 167.5L214.0 163.3L214.8 167.5ZM214.5 132.0L215.3 133.2L216.1 132.0ZM214.5 151.0L215.3 150.3L216.1 151.0ZM214.5 151.0L215.3 151.7L216.1 151.0ZM214.5 167.5L215.3 166.3L216.1 167.5ZM222.2 132.0L223.0 135.9L223.8 132.0ZM222.2 151.0L223.0 147.8L223.8 151.0ZM222.2 151.0L223.0 154.2L223.8 151.0ZM222.2 167.5L223.0 163.6L223.8 167.5ZM225.6 132.0L226.4 133.2L227.2 132.0ZM225.6 151.0L226.4 150.3L227.2 151.0ZM225.6 151.0L226.4 151.7L227.2 151.0ZM225.6 167.5L226.4 166.3L227.2 167.5ZM228.5 132.0L229.3 133.7L230.1 132.0ZM228.5 151.0L229.3 149.9L230.1 151.0ZM228.5 151.0L229.3 152.1L230.1 151.0ZM228.5 167.5L229.3 165.8L230.1 167.5ZM233.2 132.0L234.0 136.1L234.8 132.0ZM233.2 151.0L234.0 147.7L234.8 151.0ZM233.2 151.0L234.0 154.3L234.8 151.0ZM233.2 167.5L234.0 163.4L234.8 167.5ZM242.2 132.0L243.0 135.5L243.8 132.0ZM242.2 151.0L243.0 148.2L243.8 151.0ZM242.2 151.0L243.0 153.8L243.8 151.0ZM242.2 167.5L243.0 164.0L243.8 167.5ZM247.2 132.0L248.0 134.4L248.8 132.0ZM247.2 151.0L248.0 149.2L248.8 151.0ZM247.2 151.0L248.0 152.8L248.8 151.0ZM247.2 167.5L248.0 165.1L248.8 167.5ZM249.1 132.0L249.9 133.3L250.7 132.0ZM249.1 151.0L249.9 150.3L250.7 151.0ZM249.1 151.0L249.9 151.7L250.7 151.0ZM249.1 167.5L249.9 166.2L250.7 167.5ZM254.9 132.0L255.7 133.9L256.5 132.0ZM254.9 151.0L255.7 149.7L256.5 151.0ZM254.9 151.0L255.7 152.3L256.5 151.0ZM254.9 167.5L255.7 165.6L256.5 167.5ZM262.2 132.0L263.0 134.4L263.8 132.0ZM262.2 151.0L263.0 149.2L263.8 151.0ZM262.2 151.0L263.0 152.8L263.8 151.0ZM262.2 167.5L263.0 165.1L263.8 167.5ZM271.2 132.0L272.0 134.2L272.8 132.0ZM271.2 151.0L272.0 149.4L272.8 151.0ZM271.2 151.0L272.0 152.6L272.8 151.0ZM271.2 167.5L272.0 165.3L272.8 167.5ZM274.1 132.0L274.9 133.2L275.7 132.0ZM274.1 151.0L274.9 150.3L275.7 151.0ZM274.1 151.0L274.9 151.7L275.7 151.0ZM274.1 167.5L274.9 166.3L275.7 167.5ZM279.2 132.0L280.0 134.0L280.8 132.0ZM279.2 151.0L280.0 149.6L280.8 151.0ZM279.2 151.0L280.0 152.4L280.8 151.0ZM279.2 167.5L280.0 165.5L280.8 167.5ZM284.5 132.0L285.3 133.4L286.1 132.0ZM284.5 151.0L285.3 150.1L286.1 151.0ZM284.5 151.0L285.3 151.9L286.1 151.0ZM284.5 167.5L285.3 166.1L286.1 167.5ZM289.2 132.0L290.0 134.3L290.8 132.0ZM289.2 151.0L290.0 149.3L290.8 151.0ZM289.2 151.0L290.0 152.7L290.8 151.0ZM289.2 167.5L290.0 165.2L290.8 167.5ZM290.0 132.0L290.8 133.4L291.6 132.0ZM290.0 151.0L290.8 150.2L291.6 151.0ZM290.0 151.0L290.8 151.8L291.6 151.0ZM290.0 167.5L290.8 166.1L291.6 167.5ZM299.2 132.0L300.0 134.3L300.8 132.0ZM299.2 151.0L300.0 149.3L300.8 151.0ZM299.2 151.0L300.0 152.7L300.8 151.0ZM299.2 167.5L300.0 165.2L300.8 167.5ZM304.6 132.0L305.4 133.4L306.2 132.0ZM304.6 151.0L305.4 150.1L306.2 151.0ZM304.6 151.0L305.4 151.9L306.2 151.0ZM304.6 167.5L305.4 166.1L306.2 167.5ZM305.2 132.0L306.0 133.9L306.8 132.0ZM305.2 151.0L306.0 149.7L306.8 151.0ZM305.2 151.0L306.0 152.3L306.8 151.0ZM305.2 167.5L306.0 165.6L306.8 167.5ZM318.2 132.0L319.0 133.2L319.8 132.0ZM318.2 151.0L319.0 150.3L319.8 151.0ZM318.2 151.0L319.0 151.7L319.8 151.0ZM318.2 167.5L319.0 166.3L319.8 167.5ZM318.2 132.0L319.0 134.8L319.8 132.0ZM318.2 151.0L319.0 148.9L319.8 151.0ZM318.2 151.0L319.0 153.1L319.8 151.0ZM318.2 167.5L319.0 164.7L319.8 167.5ZM325.2 132.0L326.0 134.3L326.8 132.0ZM325.2 151.0L326.0 149.3L326.8 151.0ZM325.2 151.0L326.0 152.7L326.8 151.0ZM325.2 167.5L326.0 165.2L326.8 167.5ZM334.2 132.0L335.0 134.3L335.8 132.0ZM334.2 151.0L335.0 149.3L335.8 151.0ZM334.2 151.0L335.0 152.7L335.8 151.0ZM334.2 167.5L335.0 165.2L335.8 167.5ZM339.7 132.0L340.5 133.4L341.3 132.0ZM339.7 151.0L340.5 150.1L341.3 151.0ZM339.7 151.0L340.5 151.9L341.3 151.0ZM339.7 167.5L340.5 166.1L341.3 167.5ZM340.8 132.0L341.6 133.2L342.4 132.0ZM340.8 151.0L341.6 150.3L342.4 151.0ZM340.8 151.0L341.6 151.7L342.4 151.0ZM340.8 167.5L341.6 166.3L342.4 167.5ZM345.0 132.0L345.8 134.2L346.6 132.0ZM345.0 151.0L345.8 149.5L346.6 151.0ZM345.0 151.0L345.8 152.5L346.6 151.0ZM345.0 167.5L345.8 165.3L346.6 167.5ZM350.7 132.0L351.5 133.4L352.3 132.0ZM350.7 151.0L351.5 150.2L352.3 151.0ZM350.7 151.0L351.5 151.8L352.3 151.0ZM350.7 167.5L351.5 166.1L352.3 167.5ZM356.2 132.0L357.0 133.6L357.8 132.0ZM356.2 151.0L357.0 149.9L357.8 151.0ZM356.2 151.0L357.0 152.1L357.8 151.0ZM356.2 167.5L357.0 165.9L357.8 167.5ZM357.1 132.0L357.9 133.2L358.7 132.0ZM357.1 151.0L357.9 150.3L358.7 151.0ZM357.1 151.0L357.9 151.7L358.7 151.0ZM357.1 167.5L357.9 166.3L358.7 167.5ZM359.5 132.0L360.3 133.5L361.1 132.0ZM359.5 151.0L360.3 150.1L361.1 151.0ZM359.5 151.0L360.3 151.9L361.1 151.0ZM359.5 167.5L360.3 166.0L361.1 167.5ZM364.2 132.0L365.0 134.6L365.8 132.0ZM364.2 151.0L365.0 149.1L365.8 151.0ZM364.2 151.0L365.0 152.9L365.8 151.0ZM364.2 167.5L365.0 164.9L365.8 167.5ZM368.7 132.0L369.5 133.5L370.3 132.0ZM368.7 151.0L369.5 150.1L370.3 151.0ZM368.7 151.0L369.5 151.9L370.3 151.0ZM368.7 167.5L369.5 166.0L370.3 167.5ZM372.2 132.0L373.0 135.3L373.8 132.0ZM372.2 151.0L373.0 148.4L373.8 151.0ZM372.2 151.0L373.0 153.6L373.8 151.0ZM372.2 167.5L373.0 164.2L373.8 167.5ZM377.5 132.0L378.3 134.4L379.1 132.0ZM377.5 151.0L378.3 149.2L379.1 151.0ZM377.5 151.0L378.3 152.8L379.1 151.0ZM377.5 167.5L378.3 165.1L379.1 167.5ZM383.2 132.0L384.0 135.2L384.8 132.0ZM383.2 151.0L384.0 148.5L384.8 151.0ZM383.2 151.0L384.0 153.5L384.8 151.0ZM383.2 167.5L384.0 164.3L384.8 167.5ZM388.1 132.0L388.9 134.0L389.7 132.0ZM388.1 151.0L388.9 149.6L389.7 151.0ZM388.1 151.0L388.9 152.4L389.7 151.0ZM388.1 167.5L388.9 165.5L389.7 167.5ZM393.2 132.0L394.0 135.7L394.8 132.0ZM393.2 151.0L394.0 148.1L394.8 151.0ZM393.2 151.0L394.0 153.9L394.8 151.0ZM393.2 167.5L394.0 163.8L394.8 167.5ZM401.2 132.0L402.0 135.6L402.8 132.0ZM401.2 151.0L402.0 148.2L402.8 151.0ZM401.2 151.0L402.0 153.8L402.8 151.0ZM401.2 167.5L402.0 163.9L402.8 167.5ZM404.9 132.0L405.7 133.3L406.5 132.0ZM404.9 151.0L405.7 150.2L406.5 151.0ZM404.9 151.0L405.7 151.8L406.5 151.0ZM404.9 167.5L405.7 166.2L406.5 167.5ZM411.2 132.0L412.0 134.4L412.8 132.0ZM411.2 151.0L412.0 149.2L412.8 151.0ZM411.2 151.0L412.0 152.8L412.8 151.0ZM411.2 167.5L412.0 165.1L412.8 167.5ZM421.2 132.0L422.0 134.0L422.8 132.0ZM421.2 151.0L422.0 149.6L422.8 151.0ZM421.2 151.0L422.0 152.4L422.8 151.0ZM421.2 167.5L422.0 165.5L422.8 167.5ZM424.4 132.0L425.2 133.2L426.0 132.0ZM424.4 151.0L425.2 150.3L426.0 151.0ZM424.4 151.0L425.2 151.7L426.0 151.0ZM424.4 167.5L425.2 166.3L426.0 167.5ZM425.5 132.0L426.3 133.8L427.1 132.0ZM425.5 151.0L426.3 149.8L427.1 151.0ZM425.5 151.0L426.3 152.2L427.1 151.0ZM425.5 167.5L426.3 165.7L427.1 167.5ZM430.2 132.0L431.0 134.9L431.8 132.0ZM430.2 151.0L431.0 148.8L431.8 151.0ZM430.2 151.0L431.0 153.2L431.8 151.0ZM430.2 167.5L431.0 164.6L431.8 167.5ZM435.0 132.0L435.8 133.3L436.6 132.0ZM435.0 151.0L435.8 150.2L436.6 151.0ZM435.0 151.0L435.8 151.8L436.6 151.0ZM435.0 167.5L435.8 166.2L436.6 167.5ZM439.2 132.0L440.0 134.3L440.8 132.0ZM439.2 151.0L440.0 149.3L440.8 151.0ZM439.2 151.0L440.0 152.7L440.8 151.0ZM439.2 167.5L440.0 165.2L440.8 167.5ZM442.5 132.0L443.3 133.2L444.1 132.0ZM442.5 151.0L443.3 150.3L444.1 151.0ZM442.5 151.0L443.3 151.7L444.1 151.0ZM442.5 167.5L443.3 166.3L444.1 167.5ZM443.9 132.0L444.7 133.2L445.5 132.0ZM443.9 151.0L444.7 150.3L445.5 151.0ZM443.9 151.0L444.7 151.7L445.5 151.0ZM443.9 167.5L444.7 166.3L445.5 167.5ZM444.9 132.0L445.7 133.4L446.5 132.0ZM444.9 151.0L445.7 150.2L446.5 151.0ZM444.9 151.0L445.7 151.8L446.5 151.0ZM444.9 167.5L445.7 166.1L446.5 167.5ZM448.2 132.0L449.0 135.1L449.8 132.0ZM448.2 151.0L449.0 148.6L449.8 151.0ZM448.2 151.0L449.0 153.4L449.8 151.0ZM448.2 167.5L449.0 164.4L449.8 167.5ZM452.1 132.0L452.9 133.6L453.7 132.0ZM452.1 151.0L452.9 149.9L453.7 151.0ZM452.1 151.0L452.9 152.1L453.7 151.0ZM452.1 167.5L452.9 165.9L453.7 167.5ZM457.2 132.0L458.0 135.4L458.8 132.0ZM457.2 151.0L458.0 148.3L458.8 151.0ZM457.2 151.0L458.0 153.7L458.8 151.0ZM457.2 167.5L458.0 164.1L458.8 167.5ZM457.4 132.0L458.2 133.4L459.0 132.0ZM457.4 151.0L458.2 150.2L459.0 151.0ZM457.4 151.0L458.2 151.8L459.0 151.0ZM457.4 167.5L458.2 166.1L459.0 167.5ZM462.7 132.0L463.5 134.1L464.3 132.0ZM462.7 151.0L463.5 149.6L464.3 151.0ZM462.7 151.0L463.5 152.4L464.3 151.0ZM462.7 167.5L463.5 165.4L464.3 167.5ZM468.2 132.0L469.0 135.4L469.8 132.0ZM468.2 151.0L469.0 148.3L469.8 151.0ZM468.2 151.0L469.0 153.7L469.8 151.0ZM468.2 167.5L469.0 164.1L469.8 167.5ZM470.4 132.0L471.2 133.4L472.0 132.0ZM470.4 151.0L471.2 150.1L472.0 151.0ZM470.4 151.0L471.2 151.9L472.0 151.0ZM470.4 167.5L471.2 166.1L472.0 167.5ZM471.7 132.0L472.5 133.8L473.3 132.0ZM471.7 151.0L472.5 149.7L473.3 151.0ZM471.7 151.0L472.5 152.3L473.3 151.0ZM471.7 167.5L472.5 165.7L473.3 167.5ZM474.2 132.0L475.0 133.2L475.8 132.0ZM474.2 151.0L475.0 150.3L475.8 151.0ZM474.2 151.0L475.0 151.7L475.8 151.0ZM474.2 167.5L475.0 166.3L475.8 167.5ZM477.2 132.0L478.0 135.2L478.8 132.0ZM477.2 151.0L478.0 148.5L478.8 151.0ZM477.2 151.0L478.0 153.5L478.8 151.0ZM477.2 167.5L478.0 164.3L478.8 167.5ZM481.8 132.0L482.6 134.5L483.4 132.0ZM481.8 151.0L482.6 149.2L483.4 151.0ZM481.8 151.0L482.6 152.8L483.4 151.0ZM481.8 167.5L482.6 165.0L483.4 167.5ZM482.0 132.0L482.8 133.5L483.6 132.0ZM482.0 151.0L482.8 150.1L483.6 151.0ZM482.0 151.0L482.8 151.9L483.6 151.0ZM482.0 167.5L482.8 166.0L483.6 167.5ZM486.2 132.0L487.0 134.1L487.8 132.0ZM486.2 151.0L487.0 149.5L487.8 151.0ZM486.2 151.0L487.0 152.5L487.8 151.0ZM486.2 167.5L487.0 165.4L487.8 167.5ZM496.2 132.0L497.0 135.1L497.8 132.0ZM496.2 151.0L497.0 148.6L497.8 151.0ZM496.2 151.0L497.0 153.4L497.8 151.0ZM496.2 167.5L497.0 164.4L497.8 167.5ZM497.4 132.0L498.2 133.3L499.0 132.0ZM497.4 151.0L498.2 150.2L499.0 151.0ZM497.4 151.0L498.2 151.8L499.0 151.0ZM497.4 167.5L498.2 166.2L499.0 167.5ZM499.2 132.0L500.0 133.4L500.8 132.0ZM499.2 151.0L500.0 150.2L500.8 151.0ZM499.2 151.0L500.0 151.8L500.8 151.0ZM499.2 167.5L500.0 166.1L500.8 167.5ZM500.7 132.0L501.5 134.2L502.3 132.0ZM500.7 151.0L501.5 149.5L502.3 151.0ZM500.7 151.0L501.5 152.5L502.3 151.0ZM500.7 167.5L501.5 165.3L502.3 167.5ZM504.7 132.0L505.5 136.2L506.3 132.0ZM504.7 151.0L505.5 147.6L506.3 151.0ZM504.7 151.0L505.5 154.4L506.3 151.0ZM504.7 167.5L505.5 163.3L506.3 167.5ZM508.2 132.0L509.0 133.4L509.8 132.0ZM508.2 151.0L509.0 150.2L509.8 151.0ZM508.2 151.0L509.0 151.8L509.8 151.0ZM508.2 167.5L509.0 166.1L509.8 167.5ZM509.7 132.0L510.5 134.3L511.3 132.0ZM509.7 151.0L510.5 149.3L511.3 151.0ZM509.7 151.0L510.5 152.7L511.3 151.0ZM509.7 167.5L510.5 165.2L511.3 167.5ZM513.2 132.0L514.0 135.7L514.8 132.0ZM513.2 151.0L514.0 148.1L514.8 151.0ZM513.2 151.0L514.0 153.9L514.8 151.0ZM513.2 167.5L514.0 163.8L514.8 167.5ZM519.5 132.0L520.3 133.3L521.1 132.0ZM519.5 151.0L520.3 150.2L521.1 151.0ZM519.5 151.0L520.3 151.8L521.1 151.0ZM519.5 167.5L520.3 166.2L521.1 167.5ZM520.8 132.0L521.6 133.3L522.4 132.0ZM520.8 151.0L521.6 150.2L522.4 151.0ZM520.8 151.0L521.6 151.8L522.4 151.0ZM520.8 167.5L521.6 166.2L522.4 167.5ZM524.2 132.0L525.0 134.9L525.8 132.0ZM524.2 151.0L525.0 148.8L525.8 151.0ZM524.2 151.0L525.0 153.2L525.8 151.0ZM524.2 167.5L525.0 164.6L525.8 167.5ZM533.2 132.0L534.0 136.6L534.8 132.0ZM533.2 151.0L534.0 147.3L534.8 151.0ZM533.2 151.0L534.0 154.7L534.8 151.0ZM533.2 167.5L534.0 162.9L534.8 167.5ZM533.7 132.0L534.5 133.2L535.3 132.0ZM533.7 151.0L534.5 150.3L535.3 151.0ZM533.7 151.0L534.5 151.7L535.3 151.0ZM533.7 167.5L534.5 166.3L535.3 167.5ZM537.5 132.0L538.3 133.5L539.1 132.0ZM537.5 151.0L538.3 150.1L539.1 151.0ZM537.5 151.0L538.3 151.9L539.1 151.0ZM537.5 167.5L538.3 166.0L539.1 167.5ZM540.3 132.0L541.1 133.3L541.9 132.0ZM540.3 151.0L541.1 150.3L541.9 151.0ZM540.3 151.0L541.1 151.7L541.9 151.0ZM540.3 167.5L541.1 166.2L541.9 167.5ZM542.2 132.0L543.0 135.7L543.8 132.0ZM542.2 151.0L543.0 148.1L543.8 151.0ZM542.2 151.0L543.0 153.9L543.8 151.0ZM542.2 167.5L543.0 163.8L543.8 167.5ZM543.5 132.0L544.3 133.2L545.1 132.0ZM543.5 151.0L544.3 150.3L545.1 151.0ZM543.5 151.0L544.3 151.7L545.1 151.0ZM543.5 167.5L544.3 166.3L545.1 167.5ZM551.7 132.0L552.5 135.6L553.3 132.0ZM551.7 151.0L552.5 148.2L553.3 151.0ZM551.7 151.0L552.5 153.8L553.3 151.0ZM551.7 167.5L552.5 163.9L553.3 167.5ZM556.1 132.0L556.9 133.6L557.7 132.0ZM556.1 151.0L556.9 150.0L557.7 151.0ZM556.1 151.0L556.9 152.0L557.7 151.0ZM556.1 167.5L556.9 165.9L557.7 167.5ZM562.2 132.0L563.0 136.5L563.8 132.0ZM562.2 151.0L563.0 147.3L563.8 151.0ZM562.2 151.0L563.0 154.7L563.8 151.0ZM562.2 167.5L563.0 163.0L563.8 167.5ZM565.6 132.0L566.4 133.3L567.2 132.0ZM565.6 151.0L566.4 150.3L567.2 151.0ZM565.6 151.0L566.4 151.7L567.2 151.0ZM565.6 167.5L566.4 166.2L567.2 167.5ZM566.4 132.0L567.2 133.4L568.0 132.0ZM566.4 151.0L567.2 150.1L568.0 151.0ZM566.4 151.0L567.2 151.9L568.0 151.0ZM566.4 167.5L567.2 166.1L568.0 167.5ZM571.2 132.0L572.0 136.0L572.8 132.0ZM571.2 151.0L572.0 147.8L572.8 151.0ZM571.2 151.0L572.0 154.2L572.8 151.0ZM571.2 167.5L572.0 163.5L572.8 167.5ZM575.0 132.0L575.8 133.5L576.6 132.0ZM575.0 151.0L575.8 150.1L576.6 151.0ZM575.0 151.0L575.8 151.9L576.6 151.0ZM575.0 167.5L575.8 166.0L576.6 167.5ZM580.2 132.0L581.0 136.1L581.8 132.0ZM580.2 151.0L581.0 147.7L581.8 151.0ZM580.2 151.0L581.0 154.3L581.8 151.0ZM580.2 167.5L581.0 163.4L581.8 167.5ZM583.8 132.0L584.6 134.4L585.4 132.0ZM583.8 151.0L584.6 149.2L585.4 151.0ZM583.8 151.0L584.6 152.8L585.4 151.0ZM583.8 167.5L584.6 165.1L585.4 167.5ZM589.2 132.0L590.0 134.6L590.8 132.0ZM589.2 151.0L590.0 149.1L590.8 151.0ZM589.2 151.0L590.0 152.9L590.8 151.0ZM589.2 167.5L590.0 164.9L590.8 167.5ZM598.2 132.0L599.0 135.9L599.8 132.0ZM598.2 151.0L599.0 147.8L599.8 151.0ZM598.2 151.0L599.0 154.2L599.8 151.0ZM598.2 167.5L599.0 163.6L599.8 167.5ZM604.4 132.0L605.1 133.3L605.9 132.0ZM604.4 151.0L605.1 150.2L605.9 151.0ZM604.4 151.0L605.1 151.8L605.9 151.0ZM604.4 167.5L605.1 166.2L605.9 167.5ZM608.0 132.0L608.8 133.8L609.6 132.0ZM608.0 151.0L608.8 149.8L609.6 151.0ZM608.0 151.0L608.8 152.2L609.6 151.0ZM608.0 167.5L608.8 165.7L609.6 167.5ZM618.7 132.0L619.5 135.8L620.3 132.0ZM618.7 151.0L619.5 148.0L620.3 151.0ZM618.7 151.0L619.5 154.0L620.3 151.0ZM618.7 167.5L619.5 163.7L620.3 167.5ZM618.9 132.0L619.7 133.3L620.5 132.0ZM618.9 151.0L619.7 150.2L620.5 151.0ZM618.9 151.0L619.7 151.8L620.5 151.0ZM618.9 167.5L619.7 166.2L620.5 167.5ZM622.6 132.0L623.4 134.5L624.2 132.0ZM622.6 151.0L623.4 149.1L624.2 151.0ZM622.6 151.0L623.4 152.9L624.2 151.0ZM622.6 167.5L623.4 165.0L624.2 167.5ZM625.2 132.0L626.0 133.6L626.8 132.0ZM625.2 151.0L626.0 149.9L626.8 151.0ZM625.2 151.0L626.0 152.1L626.8 151.0ZM625.2 167.5L626.0 165.9L626.8 167.5ZM625.3 132.0L626.1 133.3L626.9 132.0ZM625.3 151.0L626.1 150.2L626.9 151.0ZM625.3 151.0L626.1 151.8L626.9 151.0ZM625.3 167.5L626.1 166.2L626.9 167.5ZM630.7 132.0L631.5 133.4L632.3 132.0ZM630.7 151.0L631.5 150.1L632.3 151.0ZM630.7 151.0L631.5 151.9L632.3 151.0ZM630.7 167.5L631.5 166.1L632.3 167.5ZM635.6 132.0L636.4 133.4L637.2 132.0ZM635.6 151.0L636.4 150.1L637.2 151.0ZM635.6 151.0L636.4 151.9L637.2 151.0ZM635.6 167.5L636.4 166.1L637.2 167.5ZM636.2 132.0L637.0 134.4L637.8 132.0ZM636.2 151.0L637.0 149.2L637.8 151.0ZM636.2 151.0L637.0 152.8L637.8 151.0ZM636.2 167.5L637.0 165.1L637.8 167.5ZM641.4 132.0L642.2 133.7L643.0 132.0ZM641.4 151.0L642.2 149.9L643.0 151.0ZM641.4 151.0L642.2 152.1L643.0 151.0ZM641.4 167.5L642.2 165.8L643.0 167.5ZM647.2 132.0L648.0 134.6L648.8 132.0ZM647.2 151.0L648.0 149.1L648.8 151.0ZM647.2 151.0L648.0 152.9L648.8 151.0ZM647.2 167.5L648.0 164.9L648.8 167.5ZM655.2 132.0L656.0 133.3L656.8 132.0ZM655.2 151.0L656.0 150.2L656.8 151.0ZM655.2 151.0L656.0 151.8L656.8 151.0ZM655.2 167.5L656.0 166.2L656.8 167.5ZM655.7 132.0L656.5 133.6L657.3 132.0ZM655.7 151.0L656.5 149.9L657.3 151.0ZM655.7 151.0L656.5 152.1L657.3 151.0ZM655.7 167.5L656.5 165.9L657.3 167.5ZM659.2 132.0L660.0 134.5L660.8 132.0ZM659.2 151.0L660.0 149.2L660.8 151.0ZM659.2 151.0L660.0 152.8L660.8 151.0ZM659.2 167.5L660.0 165.0L660.8 167.5ZM664.7 132.0L665.5 133.7L666.3 132.0ZM664.7 151.0L665.5 149.8L666.3 151.0ZM664.7 151.0L665.5 152.2L666.3 151.0ZM664.7 167.5L665.5 165.8L666.3 167.5ZM669.0 132.0L669.8 134.0L670.6 132.0ZM669.0 151.0L669.8 149.6L670.6 151.0ZM669.0 151.0L669.8 152.4L670.6 151.0ZM669.0 167.5L669.8 165.5L670.6 167.5ZM674.7 132.0L675.5 134.7L676.3 132.0ZM674.7 151.0L675.5 148.9L676.3 151.0ZM674.7 151.0L675.5 153.1L676.3 151.0ZM674.7 167.5L675.5 164.8L676.3 167.5ZM674.9 132.0L675.7 133.4L676.5 132.0ZM674.9 151.0L675.7 150.2L676.5 151.0ZM674.9 151.0L675.7 151.8L676.5 151.0ZM674.9 167.5L675.7 166.1L676.5 167.5ZM679.3 132.0L680.1 134.5L680.9 132.0ZM679.3 151.0L680.1 149.1L680.9 151.0ZM679.3 151.0L680.1 152.9L680.9 151.0ZM679.3 167.5L680.1 165.0L680.9 167.5ZM683.7 132.0L684.5 133.7L685.3 132.0ZM683.7 151.0L684.5 149.8L685.3 151.0ZM683.7 151.0L684.5 152.2L685.3 151.0ZM683.7 167.5L684.5 165.8L685.3 167.5ZM694.9 132.0L695.7 134.4L696.5 132.0ZM694.9 151.0L695.7 149.2L696.5 151.0ZM694.9 151.0L695.7 152.8L696.5 151.0ZM694.9 167.5L695.7 165.1L696.5 167.5ZM703.2 132.0L704.0 133.8L704.8 132.0ZM703.2 151.0L704.0 149.8L704.8 151.0ZM703.2 151.0L704.0 152.2L704.8 151.0ZM703.2 167.5L704.0 165.7L704.8 167.5ZM706.4 132.0L707.2 133.5L708.0 132.0ZM706.4 151.0L707.2 150.0L708.0 151.0ZM706.4 151.0L707.2 152.0L708.0 151.0ZM706.4 167.5L707.2 166.0L708.0 167.5ZM710.2 132.0L711.0 133.8L711.8 132.0ZM710.2 151.0L711.0 149.8L711.8 151.0ZM710.2 151.0L711.0 152.2L711.8 151.0ZM710.2 167.5L711.0 165.7L711.8 167.5ZM711.9 132.0L712.7 133.5L713.5 132.0ZM711.9 151.0L712.7 150.1L713.5 151.0ZM711.9 151.0L712.7 151.9L713.5 151.0ZM711.9 167.5L712.7 166.0L713.5 167.5ZM720.9 132.0L721.7 133.7L722.5 132.0ZM720.9 151.0L721.7 149.8L722.5 151.0ZM720.9 151.0L721.7 152.2L722.5 151.0ZM720.9 167.5L721.7 165.8L722.5 167.5ZM726.4 132.0L727.2 133.7L728.0 132.0ZM726.4 151.0L727.2 149.8L728.0 151.0ZM726.4 151.0L727.2 152.2L728.0 151.0ZM726.4 167.5L727.2 165.8L728.0 167.5ZM730.8 132.0L731.6 134.9L732.4 132.0ZM730.8 151.0L731.6 148.8L732.4 151.0ZM730.8 151.0L731.6 153.2L732.4 151.0ZM730.8 167.5L731.6 164.6L732.4 167.5ZM732.3 132.0L733.1 133.2L733.9 132.0ZM732.3 151.0L733.1 150.3L733.9 151.0ZM732.3 151.0L733.1 151.7L733.9 151.0ZM732.3 167.5L733.1 166.3L733.9 167.5ZM736.4 132.0L737.2 133.3L738.0 132.0ZM736.4 151.0L737.2 150.3L738.0 151.0ZM736.4 151.0L737.2 151.7L738.0 151.0ZM736.4 167.5L737.2 166.2L738.0 167.5ZM737.0 132.0L737.8 134.5L738.6 132.0ZM737.0 151.0L737.8 149.1L738.6 151.0ZM737.0 151.0L737.8 152.9L738.6 151.0ZM737.0 167.5L737.8 165.0L738.6 167.5ZM742.0 132.0L742.8 136.1L743.6 132.0ZM742.0 151.0L742.8 147.8L743.6 151.0ZM742.0 151.0L742.8 154.2L743.6 151.0ZM742.0 167.5L742.8 163.4L743.6 167.5ZM744.9 132.0L745.7 133.2L746.5 132.0ZM744.9 151.0L745.7 150.3L746.5 151.0ZM744.9 151.0L745.7 151.7L746.5 151.0ZM744.9 167.5L745.7 166.3L746.5 167.5ZM746.3 132.0L747.1 133.5L747.9 132.0ZM746.3 151.0L747.1 150.1L747.9 151.0ZM746.3 151.0L747.1 151.9L747.9 151.0ZM746.3 167.5L747.1 166.0L747.9 167.5ZM750.2 132.0L751.0 136.1L751.8 132.0ZM750.2 151.0L751.0 147.7L751.8 151.0ZM750.2 151.0L751.0 154.3L751.8 151.0ZM750.2 167.5L751.0 163.4L751.8 167.5ZM751.1 132.0L751.9 133.2L752.7 132.0ZM751.1 151.0L751.9 150.3L752.7 151.0ZM751.1 151.0L751.9 151.7L752.7 151.0ZM751.1 167.5L751.9 166.3L752.7 167.5ZM757.8 132.0L758.6 135.4L759.4 132.0ZM757.8 151.0L758.6 148.3L759.4 151.0ZM757.8 151.0L758.6 153.7L759.4 151.0ZM757.8 167.5L758.6 164.1L759.4 167.5ZM766.2 132.0L767.0 134.4L767.8 132.0ZM766.2 151.0L767.0 149.2L767.8 151.0ZM766.2 151.0L767.0 152.8L767.8 151.0ZM766.2 167.5L767.0 165.1L767.8 167.5ZM767.9 132.0L768.7 133.5L769.5 132.0ZM767.9 151.0L768.7 150.1L769.5 151.0ZM767.9 151.0L768.7 151.9L769.5 151.0ZM767.9 167.5L768.7 166.0L769.5 167.5ZM773.0 132.0L773.8 133.2L774.6 132.0ZM773.0 151.0L773.8 150.3L774.6 151.0ZM773.0 151.0L773.8 151.7L774.6 151.0ZM773.0 167.5L773.8 166.3L774.6 167.5ZM777.6 132.0L778.4 136.0L779.2 132.0ZM777.6 151.0L778.4 147.8L779.2 151.0ZM777.6 151.0L778.4 154.2L779.2 151.0ZM777.6 167.5L778.4 163.5L779.2 167.5ZM782.4 132.0L783.2 133.8L784.0 132.0ZM782.4 151.0L783.2 149.8L784.0 151.0ZM782.4 151.0L783.2 152.2L784.0 151.0ZM782.4 167.5L783.2 165.7L784.0 167.5ZM787.2 132.0L788.0 134.6L788.8 132.0ZM787.2 151.0L788.0 149.1L788.8 151.0ZM787.2 151.0L788.0 152.9L788.8 151.0ZM787.2 167.5L788.0 164.9L788.8 167.5ZM791.3 132.0L792.1 133.7L792.9 132.0ZM791.3 151.0L792.1 149.9L792.9 151.0ZM791.3 151.0L792.1 152.1L792.9 151.0ZM791.3 167.5L792.1 165.8L792.9 167.5ZM797.2 132.0L798.0 133.8L798.8 132.0ZM797.2 151.0L798.0 149.8L798.8 151.0ZM797.2 151.0L798.0 152.2L798.8 151.0ZM797.2 167.5L798.0 165.7L798.8 167.5ZM802.1 132.0L802.9 134.5L803.7 132.0ZM802.1 151.0L802.9 149.1L803.7 151.0ZM802.1 151.0L802.9 152.9L803.7 151.0ZM802.1 167.5L802.9 165.0L803.7 167.5ZM806.1 132.0L806.9 133.4L807.7 132.0ZM806.1 151.0L806.9 150.1L807.7 151.0ZM806.1 151.0L806.9 151.9L807.7 151.0ZM806.1 167.5L806.9 166.1L807.7 167.5ZM806.2 132.0L807.0 133.8L807.8 132.0ZM806.2 151.0L807.0 149.8L807.8 151.0ZM806.2 151.0L807.0 152.2L807.8 151.0ZM806.2 167.5L807.0 165.7L807.8 167.5ZM810.1 132.0L810.9 133.5L811.7 132.0ZM810.1 151.0L810.9 150.1L811.7 151.0ZM810.1 151.0L810.9 151.9L811.7 151.0ZM810.1 167.5L810.9 166.0L811.7 167.5ZM811.8 132.0L812.5 133.5L813.3 132.0ZM811.8 151.0L812.5 150.0L813.3 151.0ZM811.8 151.0L812.5 152.0L813.3 151.0ZM811.8 167.5L812.5 166.0L813.3 167.5ZM816.3 132.0L817.1 134.5L817.9 132.0ZM816.3 151.0L817.1 149.1L817.9 151.0ZM816.3 151.0L817.1 152.9L817.9 151.0ZM816.3 167.5L817.1 165.0L817.9 167.5ZM824.7 132.0L825.5 134.4L826.3 132.0ZM824.7 151.0L825.5 149.2L826.3 151.0ZM824.7 151.0L825.5 152.8L826.3 151.0ZM824.7 167.5L825.5 165.1L826.3 167.5ZM827.4 132.0L828.2 133.2L829.0 132.0ZM827.4 151.0L828.2 150.3L829.0 151.0ZM827.4 151.0L828.2 151.7L829.0 151.0ZM827.4 167.5L828.2 166.3L829.0 167.5ZM828.9 132.0L829.7 133.6L830.5 132.0ZM828.9 151.0L829.7 150.0L830.5 151.0ZM828.9 151.0L829.7 152.0L830.5 151.0ZM828.9 167.5L829.7 165.9L830.5 167.5ZM833.5 132.0L834.3 133.3L835.1 132.0ZM833.5 151.0L834.3 150.2L835.1 151.0ZM833.5 151.0L834.3 151.8L835.1 151.0ZM833.5 167.5L834.3 166.2L835.1 167.5ZM834.2 132.0L835.0 133.7L835.8 132.0ZM834.2 151.0L835.0 149.8L835.8 151.0ZM834.2 151.0L835.0 152.2L835.8 151.0ZM834.2 167.5L835.0 165.8L835.8 167.5ZM838.1 132.0L838.9 134.1L839.7 132.0ZM838.1 151.0L838.9 149.5L839.7 151.0ZM838.1 151.0L838.9 152.5L839.7 151.0ZM838.1 167.5L838.9 165.4L839.7 167.5ZM838.3 132.0L839.1 133.3L839.9 132.0ZM838.3 151.0L839.1 150.2L839.9 151.0ZM838.3 151.0L839.1 151.8L839.9 151.0ZM838.3 167.5L839.1 166.2L839.9 167.5ZM843.2 132.0L844.0 134.2L844.8 132.0ZM843.2 151.0L844.0 149.4L844.8 151.0ZM843.2 151.0L844.0 152.6L844.8 151.0ZM843.2 167.5L844.0 165.3L844.8 167.5ZM844.8 132.0L845.6 133.3L846.4 132.0ZM844.8 151.0L845.6 150.2L846.4 151.0ZM844.8 151.0L845.6 151.8L846.4 151.0ZM844.8 167.5L845.6 166.2L846.4 167.5ZM853.2 132.0L854.0 133.6L854.8 132.0ZM853.2 151.0L854.0 149.9L854.8 151.0ZM853.2 151.0L854.0 152.1L854.8 151.0ZM853.2 167.5L854.0 165.9L854.8 167.5ZM858.2 132.0L859.0 133.3L859.8 132.0ZM858.2 151.0L859.0 150.2L859.8 151.0ZM858.2 151.0L859.0 151.8L859.8 151.0ZM858.2 167.5L859.0 166.2L859.8 167.5ZM860.6 132.0L861.4 134.6L862.2 132.0ZM860.6 151.0L861.4 149.1L862.2 151.0ZM860.6 151.0L861.4 152.9L862.2 151.0ZM860.6 167.5L861.4 164.9L862.2 167.5ZM864.9 132.0L865.7 133.4L866.5 132.0ZM864.9 151.0L865.7 150.1L866.5 151.0ZM864.9 151.0L865.7 151.9L866.5 151.0ZM864.9 167.5L865.7 166.1L866.5 167.5ZM866.4 132.0L867.2 133.4L868.0 132.0ZM866.4 151.0L867.2 150.1L868.0 151.0ZM866.4 151.0L867.2 151.9L868.0 151.0ZM866.4 167.5L867.2 166.1L868.0 167.5ZM866.5 132.0L867.3 134.3L868.1 132.0ZM866.5 151.0L867.3 149.3L868.1 151.0ZM866.5 151.0L867.3 152.7L868.1 151.0ZM866.5 167.5L867.3 165.2L868.1 167.5ZM869.3 132.0L870.1 133.4L870.9 132.0ZM869.3 151.0L870.1 150.1L870.9 151.0ZM869.3 151.0L870.1 151.9L870.9 151.0ZM869.3 167.5L870.1 166.1L870.9 167.5ZM871.7 132.0L872.5 135.7L873.3 132.0ZM871.7 151.0L872.5 148.1L873.3 151.0ZM871.7 151.0L872.5 153.9L873.3 151.0ZM871.7 167.5L872.5 163.8L873.3 167.5ZM874.2 132.0L875.0 133.3L875.8 132.0ZM874.2 151.0L875.0 150.2L875.8 151.0ZM874.2 151.0L875.0 151.8L875.8 151.0ZM874.2 167.5L875.0 166.2L875.8 167.5ZM877.6 132.0L878.4 134.4L879.2 132.0ZM877.6 151.0L878.4 149.2L879.2 151.0ZM877.6 151.0L878.4 152.8L879.2 151.0ZM877.6 167.5L878.4 165.1L879.2 167.5ZM882.9 132.0L883.7 135.4L884.5 132.0ZM882.9 151.0L883.7 148.3L884.5 151.0ZM882.9 151.0L883.7 153.7L884.5 151.0ZM882.9 167.5L883.7 164.1L884.5 167.5ZM886.8 132.0L887.6 133.2L888.4 132.0ZM886.8 151.0L887.6 150.3L888.4 151.0ZM886.8 151.0L887.6 151.7L888.4 151.0ZM886.8 167.5L887.6 166.3L888.4 167.5ZM891.2 132.0L892.0 134.2L892.8 132.0ZM891.2 151.0L892.0 149.4L892.8 151.0ZM891.2 151.0L892.0 152.6L892.8 151.0ZM891.2 167.5L892.0 165.3L892.8 167.5ZM900.2 132.0L901.0 133.8L901.8 132.0ZM900.2 151.0L901.0 149.8L901.8 151.0ZM900.2 151.0L901.0 152.2L901.8 151.0ZM900.2 167.5L901.0 165.7L901.8 167.5ZM607.8 132.0L609.8 139.0L611.8 132.0ZM607.6 151.0L609.8 144.0L612.0 151.0ZM607.6 151.0L609.8 158.0L612.0 151.0ZM607.8 167.5L609.8 159.5L611.8 167.5Z" fill="#0a3a34"/>
<rect x="14" y="150.5" width="905" height="1" fill="#0a3a34"/>
<rect x="919" y="141" width="25" height="1" fill="#0a6a56"/><rect x="919" y="158.5" width="25" height="1" fill="#0a6a56"/>
<rect x="919" y="149" width="25" height="4" fill="#020a0a" opacity="0.6"/>
<rect x="13" y="132" width="1" height="569" fill="#ffffff"/>
<circle cx="13.5" cy="699.8" r="5.6" fill="#ffffff"/>
</svg>
<svg id="axis" style="left:0;top:128px" width="1009" height="600" viewBox="0 128 1009 600">
<rect x="943" y="132" width="1" height="36" fill="#3a4a4a"/>
<rect x="943" y="168" width="1" height="533" fill="#9aa2a2"/>
<path d="M944 168.0h6M944 174.7h2.5M944 181.3h2.5M944 188.0h2.5M944 194.7h2.5M944 201.3h4M944 208.0h2.5M944 214.7h2.5M944 221.3h2.5M944 228.0h2.5M944 234.7h4M944 241.3h2.5M944 248.0h2.5M944 254.6h2.5M944 261.3h2.5M944 268.0h4M944 274.6h2.5M944 281.3h2.5M944 288.0h2.5M944 294.6h2.5M944 301.3h4M944 308.0h2.5M944 314.6h2.5M944 321.3h2.5M944 328.0h2.5M944 334.6h4M944 341.3h2.5M944 348.0h2.5M944 354.6h2.5M944 361.3h2.5M944 368.0h4M944 374.6h2.5M944 381.3h2.5M944 387.9h2.5M944 394.6h2.5M944 401.3h4M944 407.9h2.5M944 414.6h2.5M944 421.3h2.5M944 427.9h2.5M944 434.6h6M944 434.7h6M944 441.4h2.5M944 448.0h2.5M944 454.7h2.5M944 461.4h2.5M944 468.0h4M944 474.7h2.5M944 481.4h2.5M944 488.0h2.5M944 494.7h2.5M944 501.4h4M944 508.0h2.5M944 514.7h2.5M944 521.3h2.5M944 528.0h2.5M944 534.7h4M944 541.3h2.5M944 548.0h2.5M944 554.7h2.5M944 561.3h2.5M944 568.0h4M944 574.7h2.5M944 581.3h2.5M944 588.0h2.5M944 594.7h2.5M944 601.3h4M944 608.0h2.5M944 614.7h2.5M944 621.3h2.5M944 628.0h2.5M944 634.6h4M944 641.3h2.5M944 648.0h2.5M944 654.6h2.5M944 661.3h2.5M944 668.0h4M944 674.6h2.5M944 681.3h2.5M944 688.0h2.5M944 694.6h2.5M944 701.3h6" stroke="#9aa2a2" stroke-width="1"/>
<rect x="14" y="700.5" width="930" height="1" fill="#9aa2a2"/>
<path d="M19.5 701v3M26.4 701v3M33.2 701v3M40.1 701v3M47.0 701v3M53.9 701v3M60.7 701v3M67.6 701v3M74.5 701v3M81.4 701v8.5M88.2 701v3M95.1 701v3M102.0 701v3M108.9 701v3M115.7 701v3M122.6 701v3M129.5 701v3M136.4 701v3M143.2 701v3M150.1 701v8.5M157.0 701v3M163.9 701v3M170.7 701v3M177.6 701v3M184.5 701v3M191.4 701v3M198.2 701v3M205.1 701v3M212.0 701v3M218.9 701v8.5M225.7 701v3M232.6 701v3M239.5 701v3M246.4 701v3M253.2 701v3M260.1 701v3M267.0 701v3M273.9 701v3M280.7 701v3M287.6 701v8.5M294.5 701v3M301.4 701v3M308.2 701v3M315.1 701v3M322.0 701v3M328.9 701v3M335.7 701v3M342.6 701v3M349.5 701v3M356.4 701v8.5M363.2 701v3M370.1 701v3M377.0 701v3M383.9 701v3M390.7 701v3M397.6 701v3M404.5 701v3M411.4 701v3M418.2 701v3M425.1 701v8.5M432.0 701v3M438.9 701v3M445.7 701v3M452.6 701v3M459.5 701v3M466.4 701v3M473.2 701v3M480.1 701v3M487.0 701v3M493.9 701v8.5M500.7 701v3M507.6 701v3M514.5 701v3M521.4 701v3M528.2 701v3M535.1 701v3M542.0 701v3M548.9 701v3M555.7 701v3M562.6 701v8.5M569.5 701v3M576.4 701v3M583.2 701v3M590.1 701v3M597.0 701v3M603.9 701v3M610.7 701v3M617.6 701v3M624.5 701v3M631.4 701v8.5M638.2 701v3M645.1 701v3M652.0 701v3M658.9 701v3M665.7 701v3M672.6 701v3M679.5 701v3M686.4 701v3M693.2 701v3M700.1 701v8.5M707.0 701v3M713.9 701v3M720.7 701v3M727.6 701v3M734.5 701v3M741.4 701v3M748.2 701v3M755.1 701v3M762.0 701v3M768.9 701v8.5M775.7 701v3M782.6 701v3M789.5 701v3M796.4 701v3M803.2 701v3M810.1 701v3M817.0 701v3M823.9 701v3M830.7 701v3M837.6 701v8.5M844.5 701v3M851.4 701v3M858.2 701v3M865.1 701v3M872.0 701v3M878.9 701v3M885.7 701v3M892.6 701v3M899.5 701v3M906.4 701v8.5M913.2 701v3M920.1 701v3M927.0 701v3M933.9 701v3M940.7 701v3" stroke="#9aa2a2" stroke-width="1"/>
</svg>
<span class="t ax" style="left:950px;top:196.3px">+0.75</span>
<span class="t ax" style="left:950px;top:229.6px">+0.50</span>
<span class="t ax" style="left:950px;top:263.0px">+0.25</span>
<span class="t ax" style="left:950px;top:296.3px">+0.00</span>
<span class="t ax" style="left:950px;top:329.6px">-0.25</span>
<span class="t ax" style="left:950px;top:363.0px">-0.50</span>
<span class="t ax" style="left:950px;top:396.3px">-0.75</span>
<span class="t ax" style="left:950px;top:463.0px">+0.75</span>
<span class="t ax" style="left:950px;top:496.3px">+0.50</span>
<span class="t ax" style="left:950px;top:529.7px">+0.25</span>
<span class="t ax" style="left:950px;top:563.0px">+0.00</span>
<span class="t ax" style="left:950px;top:596.3px">-0.25</span>
<span class="t ax" style="left:950px;top:629.7px">-0.50</span>
<span class="t ax" style="left:950px;top:663.0px">-0.75</span>
<span class="t rl" style="left:16.1px;top:707px">00:00.000</span>
<span class="t rl" style="left:84.9px;top:707px">00:20.000</span>
<span class="t rl" style="left:153.6px;top:707px">00:40.000</span>
<span class="t rl" style="left:222.4px;top:707px">01:00.000</span>
<span class="t rl" style="left:291.1px;top:707px">01:20.000</span>
<span class="t rl" style="left:359.9px;top:707px">01:40.000</span>
<span class="t rl" style="left:428.6px;top:707px">02:00.000</span>
<span class="t rl" style="left:497.4px;top:707px">02:20.000</span>
<span class="t rl" style="left:566.1px;top:707px">02:40.000</span>
<span class="t rl" style="left:634.9px;top:707px">03:00.000</span>
<span class="t rl" style="left:703.6px;top:707px">03:20.000</span>
<span class="t rl" style="left:772.4px;top:707px">03:40.000</span>
<span class="t rl" style="left:841.1px;top:707px">04:00.000</span>
<span class="t rl dim" style="left:909.9px;top:707px">04:20.000</span>
<!-- VLC window -->
<div id="vlc" style="left:12px;top:376px;width:492px;height:340px;background:#d4d0c8;">
 <div style="left:0;top:0;right:0;bottom:0;border:1px solid;border-color:#d4d0c8 #404040 #404040 #d4d0c8;"></div>
 <div style="left:1px;top:1px;right:1px;bottom:1px;border:1px solid;border-color:#fff #808080 #808080 #fff;"></div>
 <div id="vtitle" style="left:4px;top:4px;width:484px;height:18px;background:linear-gradient(90deg,#0a246a 0,#0f2d78 20%,#5f8fd2 70%,#a6caf0 100%);">
  <svg style="left:2px;top:1px" width="16" height="16" viewBox="0 0 16 16">
   <path d="M8 0.600 L10.600 9.500 L5.400 9.500Z" fill="#ff8a00"/>
   <path d="M6.900 3.800 L9.100 3.800 L9.900 6.600 L6.100 6.600Z" fill="#f4f4f4"/>
   <path d="M5.400 9.300 L10.600 9.300 L11.400 12 L4.600 12Z" fill="#f4f0ea"/>
   <path d="M4.600 11.300 L11.400 11.300 L14.300 15.400 L1.700 15.400Z" fill="#ff8a00"/>
   <path d="M1.700 15.400 L14.300 15.400 L13.600 14.200 L2.400 14.200Z" fill="#e06a00"/>
  </svg>
  <span class="t" style="left:20px;top:3px;font-weight:bold;color:#fff;width:410px;overflow:hidden;letter-spacing:.075px;">Thomas Anders - Bells of Paris (Thomas' Version) - Медиапроигрыват...</span>
  <div class="wbtn" style="left:433px;top:2px"><svg width="14" height="12" style="left:0;top:0"><rect x="3" y="8" width="6" height="2" fill="#000"/></svg></div>
  <div class="wbtn" style="left:449px;top:2px"><svg width="14" height="12" style="left:0;top:0"><rect x="2.500" y="1.500" width="8" height="7" fill="none" stroke="#000"/><rect x="2" y="1" width="9" height="2" fill="#000"/></svg></div>
  <div class="wbtn" style="left:467px;top:2px"><svg width="14" height="12" style="left:0;top:0"><path d="M3.500 2.500 L9.500 8.500 M9.500 2.500 L3.500 8.500" stroke="#000" stroke-width="1.600" fill="none"/></svg></div>
 </div>
 <div id="vmenu" style="left:4px;top:23px;width:484px;height:18px;">
  <span class="t" style="left:5px;top:3px">Медиа</span>
  <span class="t" style="left:50px;top:3px">Воспроизведение</span>
  <span class="t" style="left:151px;top:3px">Аудио</span>
  <span class="t" style="left:195px;top:3px">Видео</span>
  <span class="t" style="left:238px;top:3px">Субтитры</span>
  <span class="t" style="left:301px;top:3px">Инструменты</span>
  <span class="t" style="left:381px;top:3px">Вид</span>
  <span class="t" style="left:412px;top:3px">Помощь</span>
 </div>
 <div id="video" style="left:4px;top:41px;width:485px;height:243px;background:#000;"></div>
 <!-- seek row -->
 <span class="t" style="left:12px;top:288px;">02:00</span>
 <div style="left:57px;top:288px;width:381px;height:9px;border-radius:4.500px;background:linear-gradient(#aeaaa2,#c6c2ba);"></div>
 <div style="left:57px;top:288px;width:171px;height:9px;border-radius:4.500px;background:linear-gradient(#4a96e0,#2a7fd6 30%,#2878cc);"></div>
 <span class="t" style="left:453px;top:288px;">04:30</span>
 <!-- buttons -->
 <div class="vb" style="left:7px;top:303px;width:32px;height:32px;"><svg width="30" height="30" style="left:0;top:0"><rect x="8" y="7" width="5.500" height="17" fill="#808080"/><rect x="17.500" y="7" width="5.500" height="17" fill="#808080"/></svg></div>
 <div class="vb" style="left:51px;top:306px;width:26px;height:26px;"><svg width="24" height="24" style="left:0;top:0"><rect x="5" y="7" width="2.500" height="10" fill="#808080"/><path d="M13 7 L13 17 L7.500 12Z M19 7 L19 17 L13 12Z" fill="#808080"/></svg></div>
 <div class="vb" style="left:77px;top:306px;width:26px;height:26px;"><svg width="24" height="24" style="left:0;top:0"><rect x="7" y="7" width="10" height="10" fill="#808080"/></svg></div>
 <div class="vb" style="left:103px;top:306px;width:26px;height:26px;"><svg width="24" height="24" style="left:0;top:0"><rect x="16.500" y="7" width="2.500" height="10" fill="#808080"/><path d="M5 7 L5 17 L11 12Z M11 7 L11 17 L16.500 12Z" fill="#808080"/></svg></div>
 <div class="vb" style="left:141px;top:306px;width:26px;height:26px;"><svg width="24" height="24" style="left:0;top:0"><path d="M5.500 10 V6.500 H9.500 M14.500 6.500 H18.500 V10 M18.500 14 V17.500 H14.500 M9.500 17.500 H5.500 V14" fill="none" stroke="#aaa69e" stroke-width="2"/></svg></div>
 <div class="vb" style="left:167px;top:306px;width:26px;height:26px;"><svg width="24" height="24" style="left:0;top:0"><g stroke="#808080" stroke-width="2" fill="none"><path d="M7 6 V19 M12 5 V18 M17 6 V19"/></g><g fill="#808080"><rect x="4.500" y="8" width="5" height="2.500"/><rect x="9.500" y="13.500" width="5" height="2.500"/><rect x="14.500" y="10" width="5" height="2.500"/><path d="M7 3.500 L9.500 7 L4.500 7Z M12 20.500 L9.500 17 L14.500 17Z M17 3.500 L19.500 7 L14.500 7Z"/></g></svg></div>
 <div class="vb" style="left:205px;top:306px;width:26px;height:26px;"><svg width="24" height="24" style="left:0;top:0"><g fill="#808080"><rect x="5" y="5.500" width="14" height="2.500"/><rect x="5" y="10" width="14" height="2.500"/><rect x="5" y="14.500" width="8" height="2.500"/><path d="M14.500 13.500 L19 16.300 L14.500 19Z"/></g></svg></div>
 <div class="vb on" style="left:231px;top:306px;width:26px;height:26px;"><svg width="24" height="24" style="left:0;top:0"><g fill="none" stroke="#808080" stroke-width="2.200"><path d="M6 11 V9.500 A2.500 2.500 0 0 1 8.500 7 H16"/><path d="M18 13 V14.500 A2.500 2.500 0 0 1 15.500 17 H8"/></g><path d="M15 4 L19 7 L15 10Z M9 14 L5 17 L9 20Z" fill="#808080"/></svg></div>
 <div class="vb" style="left:257px;top:306px;width:26px;height:26px;"><svg width="24" height="24" style="left:0;top:0"><g fill="none" stroke="#808080" stroke-width="2"><path d="M5 7 H8 L15 17 H17"/><path d="M5 17 H8 L10 14 M13 10 L15 7 H17"/></g><path d="M16 4 L20 7 L16 10Z M16 14 L20 17 L16 20Z" fill="#808080"/></svg></div>
 <!-- volume -->
 <svg style="left:370px;top:306px" width="122" height="32" viewBox="382 682 122 32">
  <path d="M388 700.500 H390.500 L394 697.500 V708.500 L390.500 705.500 H388Z" fill="#8a8a8a"/>
  <path d="M395.500 700 Q397.500 703 395.500 706 M397.500 698.500 Q400.500 703 397.500 707.500" fill="none" stroke="#f0a030" stroke-width="1.200"/>
  <defs><linearGradient id="volg" x1="0" x2="1"><stop offset="0" stop-color="#c8f0c0"/><stop offset="0.5" stop-color="#6cdc6c"/><stop offset="1" stop-color="#2ec82e"/></linearGradient>
  <clipPath id="volc"><path d="M409.500 707.500 L480.500 688 L480.500 707.500Z"/></clipPath></defs>
  <rect x="409" y="687" width="48" height="21" fill="url(#volg)" clip-path="url(#volc)"/>
  <path d="M409.800 706 L479.500 687.800 Q481 687.600 481 689 L481 706.500 Q481 707.800 479.800 707.800 L410.200 707.800 Q408.500 707 409.800 706Z" fill="none" stroke="#808080" stroke-width="1.200"/>
  <g stroke="#808080" stroke-width="1"><path d="M489 710.500 L501 698.500 M492 710.500 L501 701.500 M495 710.500 L501 704.500 M498 710.500 L501 707.500"/></g>
  <g stroke="#fff" stroke-width="1"><path d="M490 710.500 L501 699.500 M493 710.500 L501 702.500 M496 710.500 L501 705.500"/></g>
 </svg>
 <span class="t" style="left:404px;top:312px;font-size:9px;line-height:10px;height:10px;color:#404040">82%</span>
</div>
<svg id="album" style="left:142px;top:422px" width="233" height="233" viewBox="142 422 233 233">
 <defs>
  <linearGradient id="abg" x1="0" y1="0" x2="1" y2="1"><stop offset="0" stop-color="#4a5060"/><stop offset="0.35" stop-color="#6a7284"/><stop offset="0.7" stop-color="#59607a"/><stop offset="1" stop-color="#2e3244"/></linearGradient>
  <filter id="b1" x="-10%" y="-10%" width="120%" height="120%"><feGaussianBlur stdDeviation="1.400"/></filter>
  <filter id="b2" x="-10%" y="-10%" width="120%" height="120%"><feGaussianBlur stdDeviation="0.700"/></filter>
  <clipPath id="aclip"><rect x="142" y="422" width="233" height="233"/></clipPath>
  <linearGradient id="jk" x1="0" y1="0" x2="1" y2="0"><stop offset="0" stop-color="#1a1c22"/><stop offset="0.5" stop-color="#0c0d10"/><stop offset="1" stop-color="#16181e"/></linearGradient>
  <linearGradient id="alongs" gradientUnits="userSpaceOnUse" x1="142" y1="655" x2="375" y2="422"><stop offset="0" stop-color="#060818" stop-opacity="0.62"/><stop offset="0.45" stop-color="#0a0c20" stop-opacity="0.200"/><stop offset="0.7" stop-color="#aab4d0" stop-opacity="0.100"/><stop offset="1" stop-color="#c8d0e8" stop-opacity="0.340"/></linearGradient>
  <linearGradient id="vdark" x1="0" y1="0" x2="0" y2="1"><stop offset="0" stop-color="#000010" stop-opacity="0.100"/><stop offset="0.6" stop-color="#000010" stop-opacity="0.050"/><stop offset="1" stop-color="#000010" stop-opacity="0.400"/></linearGradient>
  <radialGradient id="gold" cx="0.4" cy="0.35" r="0.7"><stop offset="0" stop-color="#f6e08a"/><stop offset="0.7" stop-color="#e2bc4e"/><stop offset="1" stop-color="#b08a2a"/></radialGradient>
 </defs>
 <g clip-path="url(#aclip)">
  <rect x="142" y="422" width="233" height="233" fill="url(#abg)"/>
  <!-- diagonal stripes -->
  <g transform="rotate(-45 258 538)" filter="url(#b1)">
   <rect x="60" y="372" width="400" height="8" fill="#262a36"/>
   <rect x="60" y="380" width="400" height="4" fill="#4a5060"/>
   <rect x="60" y="384" width="400" height="8" fill="#2e3240"/>
   <rect x="60" y="392" width="400" height="4" fill="#565c6e"/>
   <rect x="60" y="396" width="400" height="8" fill="#30343f"/>
   <rect x="60" y="404" width="400" height="8" fill="#5a6274"/>
   <rect x="60" y="412" width="400" height="4" fill="#3a3f4e"/>
   <rect x="60" y="416" width="400" height="10" fill="#626a7e"/>
   <rect x="60" y="426" width="400" height="4" fill="#2a2e3a"/>
   <rect x="60" y="430" width="400" height="10" fill="#6a7286"/>
   <rect x="60" y="440" width="400" height="7" fill="#8e96aa"/>
   <rect x="60" y="447" width="400" height="9" fill="#a6aec2"/>
   <rect x="60" y="456" width="400" height="6" fill="#7c849a"/>
   <rect x="60" y="462" width="400" height="6" fill="#3c4252"/>
   <rect x="60" y="468" width="400" height="12" fill="#6e768c"/>
   <rect x="60" y="480" width="400" height="5" fill="#262a36"/>
   <rect x="60" y="485" width="400" height="12" fill="#7a8298"/>
   <rect x="60" y="497" width="400" height="6" fill="#8e96ac"/>
   <rect x="60" y="503" width="400" height="6" fill="#383e4e"/>
   <rect x="60" y="509" width="400" height="13" fill="#626a80"/>
   <rect x="60" y="522" width="400" height="7" fill="#868ea4"/>
   <rect x="60" y="529" width="400" height="9" fill="#30344a"/>
   <rect x="60" y="538" width="400" height="14" fill="#7a829a"/>
   <rect x="60" y="552" width="400" height="6" fill="#a0a8bc"/>
   <rect x="60" y="558" width="400" height="8" fill="#444a5e"/>
   <rect x="60" y="566" width="400" height="14" fill="#707890"/>
   <rect x="60" y="580" width="400" height="6" fill="#262a3c"/>
   <rect x="60" y="586" width="400" height="12" fill="#6a728a"/>
   <rect x="60" y="598" width="400" height="8" fill="#4a5068"/>
   <rect x="60" y="606" width="400" height="12" fill="#2a2e42"/>
   <rect x="60" y="618" width="400" height="10" fill="#565c76"/>
   <rect x="60" y="628" width="400" height="8" fill="#24283a"/>
   <rect x="60" y="636" width="400" height="14" fill="#4a506c"/>
   <rect x="60" y="650" width="400" height="10" fill="#1e2238"/>
   <rect x="60" y="660" width="400" height="12" fill="#3c4260"/>
   <rect x="60" y="672" width="400" height="35" fill="#1a1e34"/>
  </g>
  <rect x="142" y="422" width="233" height="233" fill="url(#alongs)"/>
  <rect x="142" y="422" width="233" height="233" fill="url(#vdark)"/>
  <!-- vignette frame -->
  <path d="M142 422H375V655H142Z M151 431V646H366V431Z" fill="#0a0c18" fill-opacity="0.420" fill-rule="evenodd"/>
  <rect x="151" y="431" width="215" height="215" fill="#c8d0e8" fill-opacity="0.060"/>
  <!-- figures -->
  <g filter="url(#b2)">
   <!-- right person hair -->
   <path d="M262 502 C260 484 272 475.500 287 476 C301 476.500 309 486 310 499 C311 511 315 523 319 534 L312 542 L268 541 C263 530 262 514 262 502Z" fill="#231b1d"/>
   <!-- right jacket -->
   <path d="M299 531 L318 534 C328 538 333 548 336 560 L343 594 L336 618 L318 623 L269 616 L266 560 C267 548 272 540 280 534Z" fill="#1c2226"/>
   <path d="M306 540 L322 546 L330 575 L324 600 L312 560Z" fill="#4a5458" fill-opacity="0.550"/><path d="M288 585 L300 560 L306 590 L296 612 L272 612Z" fill="#39444a" fill-opacity="0.550"/><path d="M322 548 L334 560 L340 592 L334 612 L328 590Z" fill="#0c1012" fill-opacity="0.700"/>
   <path d="M270 560 L282 548 L284 600 L272 610Z" fill="#3a4448" fill-opacity="0.600"/>
   <!-- right pants -->
   <path d="M269 615 L318 622 L328 618 L330 655 L268 655Z" fill="#dcd8d4"/>
   <path d="M312 622 L336 612 L338 626 L322 632Z" fill="#9a9a9e"/>
   <!-- right shirt -->
   <path d="M277 533 L298 532 L292 560 L284 586 L278 560Z" fill="#eef0f0"/>
   <!-- right face -->
   <ellipse cx="284.500" cy="512" rx="12" ry="16.500" fill="#c79c88" transform="rotate(-6 284.500 512)"/>
   <path d="M269 506 C270 492 284 487 298 491 L301 505 C294 499 285 498 279 501 L272 513Z" fill="#241c1e"/><path d="M272 512 C272 522 276 527 282 529 L276 530 L270 520Z" fill="#3a2826" fill-opacity="0.550"/>
   <path d="M276 505 h6 M288 505 h6" stroke="#3a2a28" stroke-width="1.400"/>
   <path d="M281 521 h7" stroke="#8a5a50" stroke-width="1.200"/>
   <!-- left jacket -->
   <path d="M221 522 L196 531 C188 536 184 548 180 560 L171 580 L176 600 L190 610 L186 655 L270 655 L268 600 L272 570 L266 538 L246 526Z" fill="url(#jk)"/>
   <path d="M178 570 L196 540 L204 560 L190 600Z" fill="#3a3e48" fill-opacity="0.550"/>
   <path d="M250 540 L264 546 L266 580 L256 590Z" fill="#2c3038" fill-opacity="0.600"/>
   <path d="M188 612 L214 622 L222 655 L188 655Z" fill="#2a2c34" fill-opacity="0.800"/>
   <!-- left shirt -->
   <path d="M223 532 L244 533 L242 560 L238 586 L226 584 L224 560Z" fill="#f2f2f0"/>
   <!-- left neck+face -->
   <path d="M226 520 L243 520 L244 534 L234 538 L224 533Z" fill="#b88a72"/>
   <ellipse cx="234.500" cy="506" rx="14.500" ry="19.500" fill="#c8987e"/>
   <path d="M221 512 C222 526 230 528 234.500 528 C239 528 247 526 248 512 C244 520 240 521 234.500 521 C229 521 225 520 221 512Z" fill="#9a8276"/>
   <path d="M228 514 Q234.500 518 241 514 Q234.500 515.500 228 514Z" fill="#f4ece8" stroke="#6a4a40" stroke-width="0.800"/>
   <path d="M217 500 C214 484 224 475 235 475.500 C247 476 254 484 252 500 L249 492 C244 486 228 486 222 491Z" fill="#383230"/>
   <path d="M225 500 h6 M238 500 h6" stroke="#3a2a24" stroke-width="1.300"/>
   <!-- hands -->
   <ellipse cx="221" cy="591" rx="12" ry="9" fill="#c8967c"/>
   <ellipse cx="238" cy="594" rx="12" ry="8.500" fill="#c08e74"/>
   <path d="M268 560 L262 590 L246 598 L250 604 L270 600Z" fill="#101216"/>
  </g>
  <!-- badge -->
  <circle cx="340.8" cy="476.5" r="18.300" fill="#ecc95a"/>
  <circle cx="338.8" cy="473.5" r="13" fill="#f6dc78" fill-opacity="0.600"/>
  <path d="M345.600 466.400 L329 478.500 L346 486Z" fill="#14120c"/>
  <path d="M337 474.500 L343.500 477 M339.500 472 L344 474 M334 477.500 L343 481.500" stroke="#ecc95a" stroke-width="1"/>
  <text x="328.0 328.8 329.9 331.4 333.1 335.1 337.3 339.5 341.8 344.1 346.3 348.3 350.1 351.5 352.7 353.5 353.9 354.0 353.6" y="473.2 471.0 469.0 467.2 465.8 464.6 463.8 463.4 463.3 463.7 464.5 465.6 467.1 468.8 470.8 473.0 475.2 477.5 479.8" rotate="288 298 308 318 328 338 348 358 368 378 388 398 408 418 428 438 448 458 468" font-family="'Liberation Sans',sans-serif" font-weight="bold" font-size="3.800" fill="#14120c">BRAND NEW RECORDING</text>
  <text x="324.7 325.3 326.3 327.7 329.3 331.3 333.5 335.9 338.3 340.9 343.4 345.9 348.3 350.5 352.4 354.0" y="479.1 481.6 484.0 486.2 488.1 489.7 491.1 492.0 492.6 492.8 492.6 492.0 491.0 489.6 488.0 486.0" rotate="78 68 60 50 42 32 24 14 6 -4 -12 -22 -30 -40 -48 -58" font-family="'Liberation Sans',sans-serif" font-weight="bold" font-size="3.800" fill="#14120c">NEW BONUS TRACKS</text>
  <!-- texts -->
  <text x="197.500" y="453" font-family="'Liberation Sans',sans-serif" font-size="15.500" fill="#e4e8f0" fill-opacity="0.660" textLength="123" lengthAdjust="spacingAndGlyphs">THOMAS ANDERS</text>
  <text x="190" y="464" font-family="'Liberation Serif',serif" font-style="italic" font-size="8" fill="#d0d4e0" fill-opacity="0.800" textLength="21" lengthAdjust="spacingAndGlyphs">sings</text>
  <text x="213.500" y="465.200" font-family="'Liberation Sans',sans-serif" font-size="10.800" fill="#e8ecf4" fill-opacity="0.900" textLength="93" lengthAdjust="spacingAndGlyphs">MODERN TALKING</text>
  <text x="227" y="629.500" font-family="'Liberation Sans',sans-serif" font-size="9.200" fill="#e8e8ec" textLength="63" lengthAdjust="spacingAndGlyphs">THE 1<tspan font-size="5" dy="-3.500">ST</tspan><tspan dy="3.500"> ALBUM</tspan></text>
  <text x="276" y="635" font-family="'Liberation Serif',serif" font-style="italic" font-size="5.500" fill="#b8b8c0" transform="rotate(-8 276 635)">Thomas' Version</text>
 </g>
</svg>
</body>
</html>
